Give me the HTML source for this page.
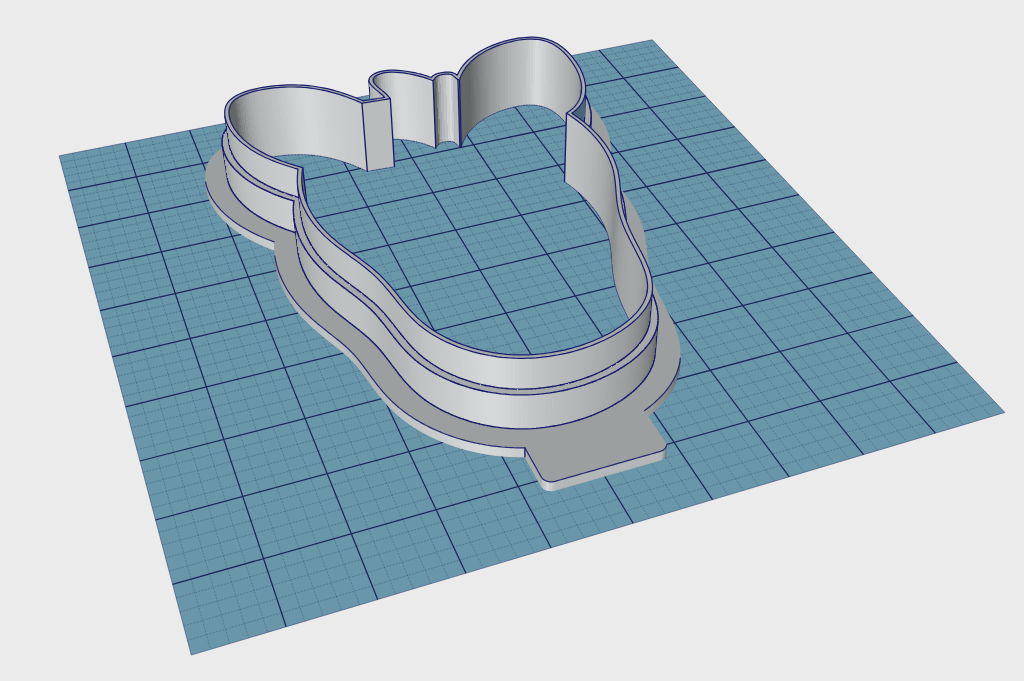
<!DOCTYPE html>
<html><head><meta charset="utf-8"><title>3D view</title>
<style>
html,body{margin:0;padding:0;background:#ebebeb;overflow:hidden;font-family:"Liberation Sans",sans-serif;}
svg{display:block;position:absolute;left:0;top:0}
</style></head><body>
<svg width="1024" height="681" viewBox="0 0 1024 681">
<rect width="1024" height="681" fill="#ebebeb"/>
<polygon points="59.1,155.8 652.3,39.8 1004.9,412.5 191.3,655.1" fill="#6996a8"/>
<path d="M72.4,153.2L210.6,649.4M60.9,162.6L657.3,45.1M85.7,150.6L229.7,643.6M62.7,169.4L662.4,50.5M98.9,148.0L248.7,638.0M64.6,176.4L667.6,56.0M112.1,145.4L267.5,632.4M66.4,183.4L672.8,61.5M138.1,140.3L304.8,621.3M70.2,197.8L683.5,72.7M151.1,137.8L323.2,615.8M72.2,205.2L688.9,78.5M164.0,135.3L341.5,610.3M74.1,212.6L694.3,84.2M176.8,132.8L359.7,604.9M76.1,220.1L699.9,90.1M202.2,127.8L395.6,594.2M80.2,235.5L711.2,102.0M214.8,125.3L413.4,588.9M82.3,243.4L716.9,108.1M227.4,122.9L431.0,583.6M84.4,251.4L722.8,114.3M239.9,120.4L448.6,578.4M86.6,259.5L728.7,120.5M264.7,115.6L483.2,568.1M90.9,276.0L740.7,133.2M277.0,113.2L500.4,562.9M93.2,284.5L746.8,139.7M289.3,110.8L517.4,557.9M95.4,293.0L753.0,146.2M301.5,108.4L534.3,552.8M97.7,301.7L759.3,152.9M325.7,103.7L567.7,542.9M102.5,319.5L772.1,166.4M337.7,101.3L584.3,537.9M104.9,328.6L778.6,173.4M349.7,99.0L600.7,533.0M107.3,337.9L785.3,180.4M361.6,96.6L617.0,528.2M109.8,347.3L792.0,187.4M385.3,92.0L649.3,518.5M114.9,366.5L805.7,201.9M397.0,89.7L665.3,513.8M117.5,376.3L812.7,209.3M408.7,87.4L681.2,509.0M120.1,386.3L819.8,216.8M420.3,85.2L697.0,504.3M122.8,396.5L827.0,224.4M443.4,80.7L728.2,495.0M128.3,417.3L841.6,239.9M454.8,78.4L743.6,490.4M131.2,427.9L849.1,247.8M466.3,76.2L759.0,485.8M134.0,438.8L856.7,255.9M477.6,74.0L774.2,481.3M136.9,449.8L864.4,264.0M500.2,69.6L804.4,472.3M142.9,472.4L880.2,280.7M511.4,67.4L819.3,467.8M146.0,484.0L888.3,289.2M522.5,65.2L834.2,463.4M149.1,495.8L896.4,297.8M533.6,63.0L848.9,459.0M152.3,507.8L904.7,306.6M555.6,58.7L878.1,450.3M158.8,532.4L921.7,324.6M566.6,56.6L892.6,446.0M162.2,545.1L930.4,333.7M577.5,54.4L906.9,441.7M165.6,558.0L939.2,343.0M588.3,52.3L921.2,437.5M169.1,571.1L948.1,352.5M609.8,48.1L949.5,429.0M176.2,598.0L966.5,371.9M620.5,46.0L963.5,424.9M179.9,611.9L975.8,381.8M631.2,43.9L977.4,420.7M183.6,626.0L985.4,391.9M641.8,41.9L991.2,416.6M187.4,640.4L995.1,402.1" stroke="#1b2560" stroke-opacity="0.36" stroke-width="0.7" stroke-dasharray="2 1.3" fill="none"/>
<path d="M125.1,142.9L286.2,626.8M68.3,190.6L678.1,67.1M189.5,130.3L377.7,599.5M78.2,227.8L705.5,96.0M252.3,118.0L465.9,573.2M88.7,267.7L734.6,126.8M313.6,106.0L551.1,547.8M100.1,310.6L765.7,159.6M373.5,94.3L633.2,523.3M112.3,356.8L798.8,194.6M431.9,82.9L712.6,499.7M125.6,406.8L834.2,232.1M488.9,71.8L789.3,476.8M139.9,461.0L872.3,272.3M544.6,60.9L863.6,454.6M155.5,520.0L913.1,315.5M599.1,50.2L935.4,433.2M172.6,584.4L957.2,362.1" stroke="#151b55" stroke-opacity="0.9" stroke-width="1.25" fill="none"/>
<polygon points="59.1,155.8 652.3,39.8 1004.9,412.5 191.3,655.1" fill="none" stroke="#1b2560" stroke-opacity="0.55" stroke-width="0.8"/>
<style>.l{fill:none;stroke:#181d6a;stroke-linecap:round}</style>
<g stroke-width="0.8">
<path fill="#636667" stroke="#636667" d="M610.5 160.4L610.5 160.7L610.9 152.4L610.9 152.0ZM610.5 160.7L610.3 162.7L610.8 154.3L610.9 152.4ZM610.3 162.7L610.3 163.1L610.7 154.7L610.8 154.3ZM610.3 163.1L610.0 165.0L610.4 156.7L610.7 154.7ZM610.0 165.0L609.9 165.4L610.3 157.1L610.4 156.7ZM609.9 165.4L609.5 167.4L609.9 159.0L610.3 157.1ZM609.5 167.4L609.4 167.8L609.8 159.5L609.9 159.0Z"/>
<path fill="#656869" stroke="#656869" d="M609.4 167.8L608.8 169.8L609.3 161.4L609.8 159.5Z"/>
<path fill="#676a6b" stroke="#676a6b" d="M608.8 169.8L608.7 170.3L609.1 161.9L609.3 161.4Z"/>
<path fill="#696c6d" stroke="#696c6d" d="M608.7 170.3L608.0 172.2L608.4 163.8L609.1 161.9Z"/>
<path fill="#959899" stroke="#959899" d="M207.1 190.9L207.0 190.5L205.6 182.0L205.7 182.4Z"/>
<path fill="#6c6f70" stroke="#6c6f70" d="M608.0 172.2L607.8 172.7L608.2 164.3L608.4 163.8Z"/>
<path fill="#979a9b" stroke="#979a9b" d="M207.5 193.0L207.1 190.9L205.7 182.4L206.1 184.5Z"/>
<path fill="#6e7172" stroke="#6e7172" d="M607.8 172.7L606.9 174.6L607.4 166.2L608.2 164.3Z"/>
<path fill="#999c9d" stroke="#999c9d" d="M207.6 193.4L207.5 193.0L206.1 184.5L206.2 184.9Z"/>
<path fill="#717475" stroke="#717475" d="M606.9 174.6L606.7 175.2L607.1 166.8L607.4 166.2Z"/>
<path fill="#9b9e9f" stroke="#9b9e9f" d="M208.2 195.4L207.6 193.4L206.2 184.9L206.8 186.9Z"/>
<path fill="#737677" stroke="#737677" d="M606.7 175.2L605.6 177.1L606.1 168.7L607.1 166.8Z"/>
<path fill="#9c9fa0" stroke="#9c9fa0" d="M208.3 195.8L208.2 195.4L206.8 186.9L206.9 187.3Z"/>
<path fill="#76797a" stroke="#76797a" d="M605.6 177.1L605.3 177.6L605.8 169.2L606.1 168.7Z"/>
<path fill="#9ea1a2" stroke="#9ea1a2" d="M209.0 197.8L208.3 195.8L206.9 187.3L207.6 189.4Z"/>
<path fill="#797c7d" stroke="#797c7d" d="M605.3 177.6L604.1 179.5L604.6 171.1L605.8 169.2Z"/>
<path fill="#a0a3a4" stroke="#a0a3a4" d="M209.1 198.2L209.0 197.8L207.6 189.4L207.7 189.7Z"/>
<path fill="#7b7e7f" stroke="#7b7e7f" d="M604.1 179.5L603.8 180.1L604.2 171.7L604.6 171.1Z"/>
<path fill="#a1a4a5" stroke="#a1a4a5" d="M209.9 200.2L209.1 198.2L207.7 189.7L208.5 191.7Z"/>
<path fill="#7e8182" stroke="#7e8182" d="M603.8 180.1L603.1 181.0L603.6 172.5L604.2 171.7Z"/>
<path fill="#a3a6a7" stroke="#a3a6a7" d="M210.1 200.6L209.9 200.2L208.5 191.7L208.7 192.1Z"/>
<path fill="#a5a8a9" stroke="#a5a8a9" d="M211.0 202.6L210.1 200.6L208.7 192.1L209.6 194.1Z"/>
<path fill="#a6a9aa" stroke="#a6a9aa" d="M211.2 202.9L211.0 202.6L209.6 194.1L209.8 194.4Z"/>
<path fill="#a7aaab" stroke="#a7aaab" d="M212.2 204.9L211.2 202.9L209.8 194.4L210.8 196.4Z"/>
<path fill="#a9acad" stroke="#a9acad" d="M212.4 205.3L212.2 204.9L210.8 196.4L211.0 196.7Z"/>
<path fill="#aaadae" stroke="#aaadae" d="M213.5 207.2L212.4 205.3L211.0 196.7L212.1 198.7Z"/>
<path fill="#abaeaf" stroke="#abaeaf" d="M213.7 207.5L213.5 207.2L212.1 198.7L212.3 199.0Z"/>
<path fill="#acafb0" stroke="#acafb0" d="M215.0 209.5L213.7 207.5L212.3 199.0L213.6 201.0Z"/>
<path fill="#aeb1b2" stroke="#aeb1b2" d="M215.2 209.8L215.0 209.5L213.6 201.0L213.8 201.3Z"/>
<path fill="#afb2b3" stroke="#afb2b3" d="M216.5 211.7L215.2 209.8L213.8 201.3L215.1 203.2Z"/>
<path fill="#b0b3b4" stroke="#b0b3b4" d="M216.8 212.0L216.5 211.7L215.1 203.2L215.4 203.5Z"/>
<path fill="#b1b4b5" stroke="#b1b4b5" d="M218.2 213.9L216.8 212.0L215.4 203.5L216.8 205.3Z"/>
<path fill="#b2b5b6" stroke="#b2b5b6" d="M218.4 214.2L218.2 213.9L216.8 205.3L217.0 205.6Z"/>
<path fill="#b3b6b7" stroke="#b3b6b7" d="M220.0 216.0L218.4 214.2L217.0 205.6L218.6 207.5Z"/>
<path fill="#b4b7b8" stroke="#b4b7b8" d="M220.2 216.3L220.0 216.0L218.6 207.5L218.8 207.7Z"/>
<path fill="#b5b8b9" stroke="#b5b8b9" d="M221.8 218.1L220.2 216.3L218.8 207.7L220.5 209.6ZM222.1 218.4L221.8 218.1L220.5 209.6L220.7 209.8Z"/>
<path fill="#b6b9ba" stroke="#b6b9ba" d="M223.8 220.2L222.1 218.4L220.7 209.8L222.4 211.6Z"/>
<path fill="#b7babb" stroke="#b7babb" d="M224.1 220.4L223.8 220.2L222.4 211.6L222.7 211.9Z"/>
<path fill="#b8bbbc" stroke="#b8bbbc" d="M225.9 222.2L224.1 220.4L222.7 211.9L224.5 213.6Z"/>
<path fill="#b9bcbd" stroke="#b9bcbd" d="M226.1 222.4L225.9 222.2L224.5 213.6L224.8 213.9ZM228.0 224.1L226.1 222.4L224.8 213.9L226.6 215.6Z"/>
<path fill="#babdbe" stroke="#babdbe" d="M228.3 224.4L228.0 224.1L226.6 215.6L226.9 215.8Z"/>
<path fill="#bbbebf" stroke="#bbbebf" d="M230.2 226.1L228.3 224.4L226.9 215.8L228.9 217.5Z"/>
<path fill="#bcbfc0" stroke="#bcbfc0" d="M230.5 226.3L230.2 226.1L228.9 217.5L229.2 217.7ZM232.5 227.9L230.5 226.3L229.2 217.7L231.2 219.4Z"/>
<path fill="#bdc0c1" stroke="#bdc0c1" d="M232.8 228.2L232.5 227.9L231.2 219.4L231.5 219.6ZM234.9 229.8L232.8 228.2L231.5 219.6L233.6 221.2Z"/>
<path fill="#bec1c2" stroke="#bec1c2" d="M235.3 230.0L234.9 229.8L233.6 221.2L233.9 221.4Z"/>
<path fill="#bfc2c3" stroke="#bfc2c3" d="M237.4 231.6L235.3 230.0L233.9 221.4L236.1 223.0ZM237.7 231.8L237.4 231.6L236.1 223.0L236.4 223.2Z"/>
<path fill="#c0c3c4" stroke="#c0c3c4" d="M240.0 233.3L237.7 231.8L236.4 223.2L238.6 224.7ZM240.3 233.5L240.0 233.3L238.6 224.7L239.0 224.9Z"/>
<path fill="#c1c4c5" stroke="#c1c4c5" d="M242.6 235.0L240.3 233.5L239.0 224.9L241.3 226.4ZM242.9 235.2L242.6 235.0L241.3 226.4L241.6 226.6Z"/>
<path fill="#c2c5c6" stroke="#c2c5c6" d="M245.3 236.6L242.9 235.2L241.6 226.6L244.0 228.0ZM245.7 236.9L245.3 236.6L244.0 228.0L244.4 228.3ZM248.1 238.3L245.7 236.9L244.4 228.3L246.8 229.6Z"/>
<path fill="#c3c6c7" stroke="#c3c6c7" d="M248.4 238.4L248.1 238.3L246.8 229.6L247.2 229.8ZM250.9 239.8L248.4 238.4L247.2 229.8L249.7 231.2Z"/>
<path fill="#c4c7c8" stroke="#c4c7c8" d="M251.3 240.0L250.9 239.8L249.7 231.2L250.0 231.4ZM253.9 241.3L251.3 240.0L250.0 231.4L252.6 232.7ZM254.2 241.5L253.9 241.3L252.6 232.7L253.0 232.9Z"/>
<path fill="#c5c8c9" stroke="#c5c8c9" d="M256.9 242.8L254.2 241.5L253.0 232.9L255.6 234.2ZM257.2 243.0L256.9 242.8L255.6 234.2L256.0 234.4ZM259.9 244.2L257.2 243.0L256.0 234.4L258.7 235.6Z"/>
<path fill="#c6c9ca" stroke="#c6c9ca" d="M260.3 244.4L259.9 244.2L258.7 235.6L259.0 235.8ZM263.0 245.6L260.3 244.4L259.0 235.8L261.8 237.0ZM263.4 245.8L263.0 245.6L261.8 237.0L262.2 237.2Z"/>
<path fill="#c7cacb" stroke="#c7cacb" d="M266.2 247.0L263.4 245.8L262.2 237.2L265.0 238.3ZM266.6 247.1L266.2 247.0L265.0 238.3L265.4 238.5ZM269.4 248.3L266.6 247.1L265.4 238.5L268.3 239.7ZM269.8 248.4L269.4 248.3L268.3 239.7L268.6 239.8Z"/>
<path fill="#c8cbcc" stroke="#c8cbcc" d="M272.7 249.6L269.8 248.4L268.6 239.8L271.6 240.9ZM273.1 249.7L272.7 249.6L271.6 240.9L271.9 241.1ZM275.3 250.5L273.1 249.7L271.9 241.1L274.1 241.9Z"/>
<path fill="#929596" stroke="#929596" d="M276.0 265.0L276.0 264.7L274.8 256.0L274.9 256.3Z"/>
<path fill="#939697" stroke="#939697" d="M276.4 267.2L276.0 265.0L274.9 256.3L275.2 258.5Z"/>
<path fill="#949798" stroke="#949798" d="M276.4 267.5L276.4 267.2L275.2 258.5L275.3 258.8Z"/>
<path fill="#959899" stroke="#959899" d="M276.9 269.7L276.4 267.5L275.3 258.8L275.7 261.0Z"/>
<path fill="#979a9b" stroke="#979a9b" d="M276.9 270.0L276.9 269.7L275.7 261.0L275.8 261.3Z"/>
<path fill="#989b9c" stroke="#989b9c" d="M277.4 272.2L276.9 270.0L275.8 261.3L276.3 263.5Z"/>
<path fill="#999c9d" stroke="#999c9d" d="M277.5 272.5L277.4 272.2L276.3 263.5L276.3 263.8Z"/>
<path fill="#9a9d9e" stroke="#9a9d9e" d="M278.1 274.7L277.5 272.5L276.3 263.8L276.9 266.0Z"/>
<path fill="#9b9e9f" stroke="#9b9e9f" d="M278.1 274.9L278.1 274.7L276.9 266.0L277.0 266.2Z"/>
<path fill="#9c9fa0" stroke="#9c9fa0" d="M278.8 277.2L278.1 274.9L277.0 266.2L277.6 268.5Z"/>
<path fill="#9da0a1" stroke="#9da0a1" d="M278.8 277.4L278.8 277.2L277.6 268.5L277.7 268.7Z"/>
<path fill="#9ea1a2" stroke="#9ea1a2" d="M279.6 279.6L278.8 277.4L277.7 268.7L278.4 270.9Z"/>
<path fill="#9fa2a3" stroke="#9fa2a3" d="M279.6 279.9L279.6 279.6L278.4 270.9L278.5 271.2Z"/>
<path fill="#a0a3a4" stroke="#a0a3a4" d="M280.4 282.1L279.6 279.9L278.5 271.2L279.3 273.4ZM280.5 282.4L280.4 282.1L279.3 273.4L279.4 273.6Z"/>
<path fill="#a1a4a5" stroke="#a1a4a5" d="M281.4 284.6L280.5 282.4L279.4 273.6L280.2 275.8Z"/>
<path fill="#a2a5a6" stroke="#a2a5a6" d="M281.5 284.8L281.4 284.6L280.2 275.8L280.3 276.1Z"/>
<path fill="#a3a6a7" stroke="#a3a6a7" d="M282.4 287.0L281.5 284.8L280.3 276.1L281.3 278.3Z"/>
<path fill="#a4a7a8" stroke="#a4a7a8" d="M282.5 287.3L282.4 287.0L281.3 278.3L281.4 278.5Z"/>
<path fill="#a5a8a9" stroke="#a5a8a9" d="M283.5 289.5L282.5 287.3L281.4 278.5L282.4 280.7Z"/>
<path fill="#a6a9aa" stroke="#a6a9aa" d="M283.6 289.7L283.5 289.5L282.4 280.7L282.5 281.0Z"/>
<path fill="#a7aaab" stroke="#a7aaab" d="M284.7 291.9L283.6 289.7L282.5 281.0L283.6 283.1ZM284.8 292.1L284.7 291.9L283.6 283.1L283.7 283.4Z"/>
<path fill="#a8abac" stroke="#a8abac" d="M286.0 294.3L284.8 292.1L283.7 283.4L284.8 285.6Z"/>
<path fill="#a9acad" stroke="#a9acad" d="M286.1 294.6L286.0 294.3L284.8 285.6L285.0 285.8Z"/>
<path fill="#aaadae" stroke="#aaadae" d="M287.3 296.7L286.1 294.6L285.0 285.8L286.2 288.0Z"/>
<path fill="#abaeaf" stroke="#abaeaf" d="M287.5 297.0L287.3 296.7L286.2 288.0L286.3 288.2ZM288.7 299.1L287.5 297.0L286.3 288.2L287.6 290.3Z"/>
<path fill="#acafb0" stroke="#acafb0" d="M288.9 299.3L288.7 299.1L287.6 290.3L287.8 290.6Z"/>
<path fill="#adb0b1" stroke="#adb0b1" d="M290.2 301.5L288.9 299.3L287.8 290.6L289.1 292.7Z"/>
<path fill="#aeb1b2" stroke="#aeb1b2" d="M290.4 301.7L290.2 301.5L289.1 292.7L289.3 293.0ZM291.8 303.9L290.4 301.7L289.3 293.0L290.7 295.1Z"/>
<path fill="#afb2b3" stroke="#afb2b3" d="M292.0 304.1L291.8 303.9L290.7 295.1L290.9 295.3Z"/>
<path fill="#b0b3b4" stroke="#b0b3b4" d="M293.5 306.2L292.0 304.1L290.9 295.3L292.4 297.4ZM293.7 306.4L293.5 306.2L292.4 297.4L292.5 297.7Z"/>
<path fill="#b1b4b5" stroke="#b1b4b5" d="M295.2 308.5L293.7 306.4L292.5 297.7L294.1 299.8Z"/>
<path fill="#b2b5b6" stroke="#b2b5b6" d="M295.4 308.8L295.2 308.5L294.1 299.8L294.3 300.0ZM297.0 310.9L295.4 308.8L294.3 300.0L295.9 302.1Z"/>
<path fill="#b3b6b7" stroke="#b3b6b7" d="M297.2 311.1L297.0 310.9L295.9 302.1L296.1 302.3Z"/>
<path fill="#b4b7b8" stroke="#b4b7b8" d="M298.9 313.2L297.2 311.1L296.1 302.3L297.8 304.4ZM299.1 313.4L298.9 313.2L297.8 304.4L298.0 304.6Z"/>
<path fill="#b5b8b9" stroke="#b5b8b9" d="M300.9 315.5L299.1 313.4L298.0 304.6L299.8 306.7ZM301.1 315.7L300.9 315.5L299.8 306.7L300.0 306.9Z"/>
<path fill="#b6b9ba" stroke="#b6b9ba" d="M302.9 317.7L301.1 315.7L300.0 306.9L301.8 308.9Z"/>
<path fill="#b7babb" stroke="#b7babb" d="M303.1 318.0L302.9 317.7L301.8 308.9L302.0 309.2ZM305.0 320.0L303.1 318.0L302.0 309.2L304.0 311.2Z"/>
<path fill="#b8bbbc" stroke="#b8bbbc" d="M305.3 320.2L305.0 320.0L304.0 311.2L304.2 311.4ZM307.2 322.2L305.3 320.2L304.2 311.4L306.2 313.4Z"/>
<path fill="#b9bcbd" stroke="#b9bcbd" d="M307.5 322.4L307.2 322.2L306.2 313.4L306.4 313.6ZM309.5 324.4L307.5 322.4L306.4 313.6L308.5 315.6Z"/>
<path fill="#babdbe" stroke="#babdbe" d="M309.7 324.6L309.5 324.4L308.5 315.6L308.7 315.8ZM311.8 326.6L309.7 324.6L308.7 315.8L310.8 317.8Z"/>
<path fill="#bbbebf" stroke="#bbbebf" d="M312.1 326.8L311.8 326.6L310.8 317.8L311.0 318.0ZM314.2 328.8L312.1 326.8L311.0 318.0L313.2 319.9ZM314.4 328.9L314.2 328.8L313.2 319.9L313.4 320.1Z"/>
<path fill="#bcbfc0" stroke="#bcbfc0" d="M316.6 330.8L314.4 328.9L313.4 320.1L315.6 322.0ZM316.8 331.0L316.6 330.8L315.6 322.0L315.8 322.1ZM319.0 332.9L316.8 331.0L315.8 322.1L318.0 324.1Z"/>
<path fill="#bdc0c1" stroke="#bdc0c1" d="M319.2 333.0L319.0 332.9L318.0 324.1L318.2 324.2ZM321.5 334.9L319.2 333.0L318.2 324.2L320.5 326.1ZM321.6 335.0L321.5 334.9L320.5 326.1L320.6 326.1ZM323.9 336.9L321.6 335.0L320.6 326.1L322.9 328.0ZM324.0 336.9L323.9 336.9L322.9 328.0L323.0 328.1Z"/>
<path fill="#bec1c2" stroke="#bec1c2" d="M326.3 338.8L324.0 336.9L323.0 328.1L325.3 330.0ZM326.3 338.9L326.3 338.8L325.3 330.0L325.4 330.0ZM328.7 340.7L326.3 338.9L325.4 330.0L327.7 331.9ZM328.7 340.7L328.7 340.7L327.7 331.9L327.7 331.9ZM331.0 342.6L328.7 340.7L327.7 331.9L330.1 333.7ZM333.4 344.4L331.0 342.6L330.1 333.7L332.4 335.6ZM335.6 346.3L333.4 344.4L332.4 335.6L334.7 337.4ZM337.9 348.1L335.6 346.3L334.7 337.4L337.0 339.2Z"/>
<path fill="#bdc0c1" stroke="#bdc0c1" d="M340.1 349.9L337.9 348.1L337.0 339.2L339.2 341.0ZM342.2 351.6L340.1 349.9L339.2 341.0L341.3 342.8ZM344.3 353.4L342.2 351.6L341.3 342.8L343.4 344.5Z"/>
<path fill="#bcbfc0" stroke="#bcbfc0" d="M346.3 355.2L344.3 353.4L343.4 344.5L345.4 346.3Z"/>
<path fill="#bbbebf" stroke="#bbbebf" d="M348.2 356.9L346.3 355.2L345.4 346.3L347.3 348.0Z"/>
<path fill="#babdbe" stroke="#babdbe" d="M350.0 358.6L348.2 356.9L347.3 348.0L349.2 349.8Z"/>
<path fill="#b9bcbd" stroke="#b9bcbd" d="M351.8 360.4L350.0 358.6L349.2 349.8L350.9 351.5Z"/>
<path fill="#b8bbbc" stroke="#b8bbbc" d="M353.5 362.1L351.8 360.4L350.9 351.5L352.6 353.2Z"/>
<path fill="#b7babb" stroke="#b7babb" d="M355.1 363.9L353.5 362.1L352.6 353.2L354.3 355.0Z"/>
<path fill="#b6b9ba" stroke="#b6b9ba" d="M356.7 365.7L355.1 363.9L354.3 355.0L355.9 356.8Z"/>
<path fill="#b5b8b9" stroke="#b5b8b9" d="M358.4 367.6L356.7 365.7L355.9 356.8L357.5 358.7Z"/>
<path fill="#636667" stroke="#636667" d="M679.4 367.1L679.1 369.9L680.0 360.9L680.3 358.2ZM679.1 369.9L679.0 370.6L679.9 361.7L680.0 360.9Z"/>
<path fill="#b4b7b8" stroke="#b4b7b8" d="M360.0 369.6L358.4 367.6L357.5 358.7L359.1 360.7Z"/>
<path fill="#636667" stroke="#636667" d="M679.0 370.6L678.4 373.3L679.4 364.4L679.9 361.7Z"/>
<path fill="#b3b6b7" stroke="#b3b6b7" d="M361.6 371.7L360.0 369.6L359.1 360.7L360.8 362.8Z"/>
<path fill="#636667" stroke="#636667" d="M678.4 373.3L678.3 374.1L679.2 365.2L679.4 364.4Z"/>
<path fill="#b2b5b6" stroke="#b2b5b6" d="M363.2 373.8L361.6 371.7L360.8 362.8L362.4 364.9Z"/>
<path fill="#66696a" stroke="#66696a" d="M678.3 374.1L677.5 376.8L678.5 367.9L679.2 365.2Z"/>
<path fill="#b2b5b6" stroke="#b2b5b6" d="M364.8 376.0L363.2 373.8L362.4 364.9L364.0 367.1Z"/>
<path fill="#696c6d" stroke="#696c6d" d="M677.5 376.8L677.3 377.5L678.2 368.6L678.5 367.9Z"/>
<path fill="#6c6f70" stroke="#6c6f70" d="M677.3 377.5L676.4 380.2L677.3 371.3L678.2 368.6Z"/>
<path fill="#b2b5b6" stroke="#b2b5b6" d="M366.5 378.2L364.8 376.0L364.0 367.1L365.7 369.3Z"/>
<path fill="#6e7172" stroke="#6e7172" d="M676.4 380.2L676.2 380.9L677.1 372.0L677.3 371.3Z"/>
<path fill="#b1b4b5" stroke="#b1b4b5" d="M368.1 380.5L366.5 378.2L365.7 369.3L367.4 371.6Z"/>
<path fill="#717475" stroke="#717475" d="M676.2 380.9L675.1 383.6L676.0 374.7L677.1 372.0Z"/>
<path fill="#737677" stroke="#737677" d="M675.1 383.6L674.8 384.3L675.7 375.3L676.0 374.7Z"/>
<path fill="#b1b4b5" stroke="#b1b4b5" d="M369.8 382.9L368.1 380.5L367.4 371.6L369.1 373.9ZM369.9 382.9L369.8 382.9L369.1 373.9L369.1 374.0Z"/>
<path fill="#757879" stroke="#757879" d="M674.8 384.3L673.5 386.9L674.4 378.0L675.7 375.3Z"/>
<path fill="#b1b4b5" stroke="#b1b4b5" d="M371.6 385.3L369.9 382.9L369.1 374.0L370.8 376.3Z"/>
<path fill="#787b7c" stroke="#787b7c" d="M673.5 386.9L673.2 387.5L674.1 378.6L674.4 378.0Z"/>
<path fill="#b2b5b6" stroke="#b2b5b6" d="M371.6 385.3L371.6 385.3L370.8 376.3L370.8 376.4Z"/>
<path fill="#7a7d7e" stroke="#7a7d7e" d="M673.2 387.5L671.7 390.1L672.6 381.2L674.1 378.6Z"/>
<path fill="#b2b5b6" stroke="#b2b5b6" d="M373.4 387.7L371.6 385.3L370.8 376.4L372.6 378.8ZM373.4 387.8L373.4 387.7L372.6 378.8L372.7 378.8Z"/>
<path fill="#7c7f80" stroke="#7c7f80" d="M671.7 390.1L671.4 390.8L672.2 381.8L672.6 381.2Z"/>
<path fill="#b2b5b6" stroke="#b2b5b6" d="M375.2 390.2L373.4 387.8L372.7 378.8L374.5 381.2Z"/>
<path fill="#7e8182" stroke="#7e8182" d="M671.4 390.8L669.7 393.3L670.6 384.4L672.2 381.8Z"/>
<path fill="#b2b5b6" stroke="#b2b5b6" d="M375.3 390.3L375.2 390.2L374.5 381.2L374.6 381.4Z"/>
<path fill="#808384" stroke="#808384" d="M669.7 393.3L669.4 393.9L670.2 385.0L670.6 384.4Z"/>
<path fill="#b3b6b7" stroke="#b3b6b7" d="M377.1 392.7L375.3 390.3L374.6 381.4L376.4 383.8ZM377.3 392.9L377.1 392.7L376.4 383.8L376.5 383.9Z"/>
<path fill="#828586" stroke="#828586" d="M669.4 393.9L667.6 396.5L668.5 387.5L670.2 385.0Z"/>
<path fill="#b3b6b7" stroke="#b3b6b7" d="M379.1 395.3L377.3 392.9L376.5 383.9L378.4 386.3Z"/>
<path fill="#848788" stroke="#848788" d="M667.6 396.5L667.2 397.0L668.0 388.1L668.5 387.5Z"/>
<path fill="#b4b7b8" stroke="#b4b7b8" d="M379.3 395.5L379.1 395.3L378.4 386.3L378.6 386.5Z"/>
<path fill="#858889" stroke="#858889" d="M667.2 397.0L665.2 399.5L666.1 390.6L668.0 388.1Z"/>
<path fill="#b4b7b8" stroke="#b4b7b8" d="M381.2 397.9L379.3 395.5L378.6 386.5L380.5 388.9Z"/>
<path fill="#878a8b" stroke="#878a8b" d="M665.2 399.5L664.8 400.1L665.7 391.1L666.1 390.6Z"/>
<path fill="#b5b8b9" stroke="#b5b8b9" d="M381.4 398.1L381.2 397.9L380.5 388.9L380.7 389.1Z"/>
<path fill="#898c8d" stroke="#898c8d" d="M664.8 400.1L662.7 402.5L663.6 393.6L665.7 391.1Z"/>
<path fill="#b5b8b9" stroke="#b5b8b9" d="M383.4 400.5L381.4 398.1L380.7 389.1L382.7 391.5Z"/>
<path fill="#8a8d8e" stroke="#8a8d8e" d="M662.7 402.5L662.3 403.0L663.1 394.1L663.6 393.6Z"/>
<path fill="#b6b9ba" stroke="#b6b9ba" d="M383.6 400.7L383.4 400.5L382.7 391.5L382.9 391.8ZM385.7 403.1L383.6 400.7L382.9 391.8L385.0 394.2Z"/>
<path fill="#8c8f90" stroke="#8c8f90" d="M662.3 403.0L660.1 405.5L660.9 396.5L663.1 394.1Z"/>
<path fill="#b7babb" stroke="#b7babb" d="M386.0 403.4L385.7 403.1L385.0 394.2L385.3 394.5Z"/>
<path fill="#8d9091" stroke="#8d9091" d="M660.1 405.5L659.6 405.9L660.4 397.0L660.9 396.5Z"/>
<path fill="#b7babb" stroke="#b7babb" d="M388.2 405.8L386.0 403.4L385.3 394.5L387.5 396.8Z"/>
<path fill="#8f9293" stroke="#8f9293" d="M659.6 405.9L657.2 408.3L658.0 399.4L660.4 397.0Z"/>
<path fill="#b8bbbc" stroke="#b8bbbc" d="M388.5 406.1L388.2 405.8L387.5 396.8L387.8 397.1Z"/>
<path fill="#909394" stroke="#909394" d="M657.2 408.3L656.7 408.8L657.6 399.8L658.0 399.4Z"/>
<path fill="#b9bcbd" stroke="#b9bcbd" d="M390.7 408.5L388.5 406.1L387.8 397.1L390.1 399.5Z"/>
<path fill="#929596" stroke="#929596" d="M656.7 408.8L654.2 411.1L655.0 402.2L657.6 399.8Z"/>
<path fill="#b9bcbd" stroke="#b9bcbd" d="M391.1 408.8L390.7 408.5L390.1 399.5L390.4 399.8Z"/>
<path fill="#939697" stroke="#939697" d="M654.2 411.1L653.8 411.6L654.6 402.6L655.0 402.2Z"/>
<path fill="#babdbe" stroke="#babdbe" d="M393.5 411.1L391.1 408.8L390.4 399.8L392.8 402.2Z"/>
<path fill="#949798" stroke="#949798" d="M653.8 411.6L651.1 413.9L651.9 404.9L654.6 402.6Z"/>
<path fill="#bbbebf" stroke="#bbbebf" d="M393.9 411.5L393.5 411.1L392.8 402.2L393.2 402.5Z"/>
<path fill="#96999a" stroke="#96999a" d="M651.1 413.9L650.6 414.3L651.4 405.3L651.9 404.9Z"/>
<path fill="#bbbebf" stroke="#bbbebf" d="M396.4 413.8L393.9 411.5L393.2 402.5L395.7 404.8Z"/>
<path fill="#979a9b" stroke="#979a9b" d="M650.6 414.3L647.9 416.5L648.6 407.5L651.4 405.3Z"/>
<path fill="#bcbfc0" stroke="#bcbfc0" d="M396.8 414.2L396.4 413.8L395.7 404.8L396.2 405.3Z"/>
<path fill="#989b9c" stroke="#989b9c" d="M647.9 416.5L647.4 416.9L648.1 407.9L648.6 407.5Z"/>
<path fill="#bdc0c1" stroke="#bdc0c1" d="M399.4 416.5L396.8 414.2L396.2 405.3L398.8 407.5Z"/>
<path fill="#999c9d" stroke="#999c9d" d="M647.4 416.9L644.5 419.1L645.2 410.1L648.1 407.9Z"/>
<path fill="#bec1c2" stroke="#bec1c2" d="M399.9 416.9L399.4 416.5L398.8 407.5L399.3 407.9Z"/>
<path fill="#9a9d9e" stroke="#9a9d9e" d="M644.5 419.1L644.0 419.5L644.7 410.5L645.2 410.1Z"/>
<path fill="#9b9e9f" stroke="#9b9e9f" d="M644.0 419.5L643.7 419.7L644.5 410.7L644.7 410.5Z"/>
<path fill="#bec1c2" stroke="#bec1c2" d="M402.7 419.1L399.9 416.9L399.3 407.9L402.1 410.1Z"/>
<path fill="#bfc2c3" stroke="#bfc2c3" d="M403.2 419.5L402.7 419.1L402.1 410.1L402.6 410.5Z"/>
<path fill="#c0c3c4" stroke="#c0c3c4" d="M406.0 421.7L403.2 419.5L402.6 410.5L405.4 412.7ZM406.6 422.1L406.0 421.7L405.4 412.7L406.0 413.1Z"/>
<path fill="#c1c4c5" stroke="#c1c4c5" d="M409.5 424.2L406.6 422.1L406.0 413.1L408.9 415.2ZM410.1 424.5L409.5 424.2L408.9 415.2L409.5 415.6Z"/>
<path fill="#c2c5c6" stroke="#c2c5c6" d="M413.1 426.6L410.1 424.5L409.5 415.6L412.6 417.6ZM413.7 427.0L413.1 426.6L412.6 417.6L413.1 418.0Z"/>
<path fill="#c3c6c7" stroke="#c3c6c7" d="M416.9 428.9L413.7 427.0L413.1 418.0L416.3 419.9ZM417.4 429.3L416.9 428.9L416.3 419.9L416.9 420.3Z"/>
<path fill="#c4c7c8" stroke="#c4c7c8" d="M420.7 431.2L417.4 429.3L416.9 420.3L420.2 422.2ZM421.3 431.6L420.7 431.2L420.2 422.2L420.8 422.6Z"/>
<path fill="#c5c8c9" stroke="#c5c8c9" d="M424.7 433.4L421.3 431.6L420.8 422.6L424.2 424.4ZM425.3 433.8L424.7 433.4L424.2 424.4L424.8 424.8Z"/>
<path fill="#c6c9ca" stroke="#c6c9ca" d="M428.7 435.6L425.3 433.8L424.8 424.8L428.3 426.5ZM429.4 435.9L428.7 435.6L428.3 426.5L428.9 426.9Z"/>
<path fill="#c7cacb" stroke="#c7cacb" d="M432.9 437.6L429.4 435.9L428.9 426.9L432.5 428.6ZM433.6 437.9L432.9 437.6L432.5 428.6L433.1 428.9Z"/>
<path fill="#c8cbcc" stroke="#c8cbcc" d="M437.2 439.6L433.6 437.9L433.1 428.9L436.8 430.5Z"/>
<path fill="#c9cccd" stroke="#c9cccd" d="M437.9 439.8L437.2 439.6L436.8 430.5L437.5 430.8ZM441.6 441.4L437.9 439.8L437.5 430.8L441.2 432.4Z"/>
<path fill="#cacdce" stroke="#cacdce" d="M442.3 441.7L441.6 441.4L441.2 432.4L441.9 432.7Z"/>
<path fill="#cbcecf" stroke="#cbcecf" d="M446.1 443.2L442.3 441.7L441.9 432.7L445.7 434.2ZM446.8 443.5L446.1 443.2L445.7 434.2L446.4 434.5Z"/>
<path fill="#cccfd0" stroke="#cccfd0" d="M450.7 444.9L446.8 443.5L446.4 434.5L450.4 435.9Z"/>
<path fill="#cdd0d1" stroke="#cdd0d1" d="M451.4 445.1L450.7 444.9L450.4 435.9L451.1 436.1Z"/>
<path fill="#ced1d2" stroke="#ced1d2" d="M455.4 446.5L451.4 445.1L451.1 436.1L455.1 437.5Z"/>
<path fill="#cfd2d3" stroke="#cfd2d3" d="M456.1 446.7L455.4 446.5L455.1 437.5L455.8 437.7ZM460.1 448.0L456.1 446.7L455.8 437.7L459.9 439.0Z"/>
<path fill="#696c6d" stroke="#696c6d" d="M665.5 454.7L664.9 456.5L665.8 447.5L666.4 445.7Z"/>
<path fill="#d0d3d4" stroke="#d0d3d4" d="M460.9 448.2L460.1 448.0L459.9 439.0L460.6 439.2Z"/>
<path fill="#d1d4d5" stroke="#d1d4d5" d="M465.0 449.4L460.9 448.2L460.6 439.2L464.7 440.3Z"/>
<path fill="#d2d5d6" stroke="#d2d5d6" d="M465.8 449.6L465.0 449.4L464.7 440.3L465.5 440.6Z"/>
<path fill="#858889" stroke="#858889" d="M664.9 456.5L663.7 458.1L664.6 449.1L665.8 447.5Z"/>
<path fill="#d3d6d7" stroke="#d3d6d7" d="M469.9 450.7L465.8 449.6L465.5 440.6L469.7 441.6ZM470.8 450.8L469.9 450.7L469.7 441.6L470.5 441.8Z"/>
<path fill="#9b9e9f" stroke="#9b9e9f" d="M663.7 458.1L662.0 459.4L662.8 450.4L664.6 449.1Z"/>
<path fill="#d4d7d8" stroke="#d4d7d8" d="M475.0 451.8L470.8 450.8L470.5 441.8L474.8 442.8ZM475.8 452.0L475.0 451.8L474.8 442.8L475.6 443.0Z"/>
<path fill="#adb0b1" stroke="#adb0b1" d="M662.0 459.4L659.7 460.3L660.6 451.3L662.8 450.4Z"/>
<path fill="#d5d8d9" stroke="#d5d8d9" d="M480.1 452.9L475.8 452.0L475.6 443.0L479.9 443.9ZM480.9 453.1L480.1 452.9L479.9 443.9L480.7 444.0ZM485.2 453.8L480.9 453.1L480.7 444.0L485.1 444.8Z"/>
<path fill="#b4b7b8" stroke="#b4b7b8" d="M659.7 460.3L655.0 461.7L655.9 452.6L660.6 451.3Z"/>
<path fill="#d5d8d9" stroke="#d5d8d9" d="M486.1 454.0L485.2 453.8L485.1 444.8L486.0 445.0ZM490.4 454.7L486.1 454.0L486.0 445.0L490.3 445.6Z"/>
<path fill="#d4d7d8" stroke="#d4d7d8" d="M491.4 454.8L490.4 454.7L490.3 445.6L491.2 445.8ZM495.7 455.4L491.4 454.8L491.2 445.8L495.7 446.3Z"/>
<path fill="#b4b7b8" stroke="#b4b7b8" d="M655.0 461.7L650.4 463.0L651.2 454.0L655.9 452.6Z"/>
<path fill="#d3d6d7" stroke="#d3d6d7" d="M496.7 455.5L495.7 455.4L495.7 446.3L496.6 446.4Z"/>
<path fill="#d2d5d6" stroke="#d2d5d6" d="M501.1 455.9L496.7 455.5L496.6 446.4L501.0 446.9ZM502.0 456.0L501.1 455.9L501.0 446.9L502.0 447.0Z"/>
<path fill="#d0d3d4" stroke="#d0d3d4" d="M506.5 456.4L502.0 456.0L502.0 447.0L506.5 447.3Z"/>
<path fill="#cfd2d3" stroke="#cfd2d3" d="M507.4 456.4L506.5 456.4L506.5 447.3L507.4 447.4Z"/>
<path fill="#ced1d2" stroke="#ced1d2" d="M511.9 456.7L507.4 456.4L507.4 447.4L511.9 447.6Z"/>
<path fill="#cdd0d1" stroke="#cdd0d1" d="M512.9 456.7L511.9 456.7L511.9 447.6L512.9 447.7Z"/>
<path fill="#cbcecf" stroke="#cbcecf" d="M517.4 456.8L512.9 456.7L512.9 447.7L517.4 447.8Z"/>
<path fill="#c6c9ca" stroke="#c6c9ca" d="M524.9 456.8L523.8 456.9L523.8 447.8L524.9 447.8Z"/>
<path fill="#c8cbcc" stroke="#c8cbcc" d="M523.8 456.9L522.8 456.9L522.9 447.8L523.8 447.8Z"/>
<path fill="#c9cccd" stroke="#c9cccd" d="M522.8 456.9L518.3 456.9L518.4 447.8L522.9 447.8Z"/>
<path fill="#cacdce" stroke="#cacdce" d="M518.3 456.9L517.4 456.8L517.4 447.8L518.4 447.8Z"/>
<path fill="#b4b7b8" stroke="#b4b7b8" d="M650.4 463.0L645.7 464.3L646.5 455.3L651.2 454.0Z"/>
<path fill="#abaeaf" stroke="#abaeaf" d="M526.7 460.2L524.9 456.8L524.9 447.8L526.8 451.2Z"/>
<path fill="#b4b7b8" stroke="#b4b7b8" d="M645.7 464.3L641.0 465.7L641.7 456.7L646.5 455.3ZM641.0 465.7L636.3 467.0L637.0 458.0L641.7 456.7Z"/>
<path fill="#abaeaf" stroke="#abaeaf" d="M528.6 463.6L526.7 460.2L526.8 451.2L528.7 454.6Z"/>
<path fill="#b4b7b8" stroke="#b4b7b8" d="M636.3 467.0L631.5 468.4L632.2 459.4L637.0 458.0ZM631.5 468.4L626.8 469.8L627.5 460.7L632.2 459.4Z"/>
<path fill="#abaeaf" stroke="#abaeaf" d="M530.5 467.0L528.6 463.6L528.7 454.6L530.6 458.0Z"/>
<path fill="#b4b7b8" stroke="#b4b7b8" d="M626.8 469.8L622.1 471.1L622.7 462.1L627.5 460.7ZM622.1 471.1L617.3 472.5L617.9 463.4L622.7 462.1Z"/>
<path fill="#abaeaf" stroke="#abaeaf" d="M532.4 470.4L530.5 467.0L530.6 458.0L532.5 461.4Z"/>
<path fill="#b4b7b8" stroke="#b4b7b8" d="M617.3 472.5L612.5 473.8L613.1 464.8L617.9 463.4ZM612.5 473.8L607.8 475.2L608.4 466.2L613.1 464.8Z"/>
<path fill="#abaeaf" stroke="#abaeaf" d="M534.3 473.9L532.4 470.4L532.5 461.4L534.5 464.9Z"/>
<path fill="#b4b7b8" stroke="#b4b7b8" d="M607.8 475.2L603.0 476.6L603.5 467.5L608.4 466.2ZM603.0 476.6L598.2 477.9L598.7 468.9L603.5 467.5Z"/>
<path fill="#abaeaf" stroke="#abaeaf" d="M536.2 477.4L534.3 473.9L534.5 464.9L536.4 468.3Z"/>
<path fill="#b4b7b8" stroke="#b4b7b8" d="M598.2 477.9L593.4 479.3L593.9 470.3L598.7 468.9ZM593.4 479.3L588.6 480.7L589.1 471.6L593.9 470.3Z"/>
<path fill="#abaeaf" stroke="#abaeaf" d="M538.2 480.8L536.2 477.4L536.4 468.3L538.3 471.8Z"/>
<path fill="#b4b7b8" stroke="#b4b7b8" d="M588.6 480.7L583.8 482.1L584.2 473.0L589.1 471.6ZM583.8 482.1L578.9 483.5L579.4 474.4L584.2 473.0Z"/>
<path fill="#abaeaf" stroke="#abaeaf" d="M539.6 483.5L538.2 480.8L538.3 471.8L539.8 474.4Z"/>
<path fill="#b4b7b8" stroke="#b4b7b8" d="M578.9 483.5L574.1 484.8L574.5 475.8L579.4 474.4ZM574.1 484.8L569.3 486.2L569.6 477.2L574.5 475.8Z"/>
<path fill="#abaeaf" stroke="#abaeaf" d="M541.1 486.1L539.6 483.5L539.8 474.4L541.3 477.0Z"/>
<path fill="#b4b7b8" stroke="#b4b7b8" d="M569.3 486.2L564.4 487.6L564.7 478.6L569.6 477.2ZM542.4 487.8L541.1 486.1L541.3 477.0L542.6 478.8ZM564.4 487.6L559.5 489.0L559.8 480.0L564.7 478.6Z"/>
<path fill="#c0c3c4" stroke="#c0c3c4" d="M544.3 489.3L542.4 487.8L542.6 478.8L544.5 480.2Z"/>
<path fill="#b4b7b8" stroke="#b4b7b8" d="M559.5 489.0L554.7 490.4L554.9 481.4L559.8 480.0Z"/>
<path fill="#cacdce" stroke="#cacdce" d="M546.7 490.3L544.3 489.3L544.5 480.2L546.9 481.2Z"/>
<path fill="#bbbebf" stroke="#bbbebf" d="M554.7 490.4L552.0 490.9L552.3 481.8L554.9 481.4Z"/>
<path fill="#d5d8d9" stroke="#d5d8d9" d="M549.3 490.8L546.7 490.3L546.9 481.2L549.5 481.8Z"/>
<path fill="#c9cccd" stroke="#c9cccd" d="M552.0 490.9L549.3 490.8L549.5 481.8L552.3 481.8Z"/>
</g>
<path d="M274.1 241.9L271.9 241.1L271.6 240.9L268.6 239.8L268.3 239.7L265.4 238.5L265.0 238.3L262.2 237.2L261.8 237.0L259.0 235.8L258.7 235.6L256.0 234.4L255.6 234.2L253.0 232.9L252.6 232.7L250.0 231.4L249.7 231.2L247.2 229.8L246.8 229.6L244.4 228.3L244.0 228.0L241.6 226.6L241.3 226.4L239.0 224.9L238.6 224.7L236.4 223.2L236.1 223.0L233.9 221.4L233.6 221.2L231.5 219.6L231.2 219.4L229.2 217.7L228.9 217.5L226.9 215.8L226.6 215.6L224.8 213.9L224.5 213.6L222.7 211.9L222.4 211.6L220.7 209.8L220.5 209.6L218.8 207.7L218.6 207.5L217.0 205.6L216.8 205.3L215.4 203.5L215.1 203.2L213.8 201.3L213.6 201.0L212.3 199.0L212.1 198.7L211.0 196.7L210.8 196.4L209.8 194.4L209.6 194.1L208.7 192.1L208.5 191.7L207.7 189.7L207.6 189.4L206.9 187.3L206.8 186.9L206.2 184.9L206.1 184.5L205.7 182.4L205.6 182.0L205.3 179.9L205.2 179.5L205.1 177.4L205.1 176.9L205.1 174.8L205.1 174.3L205.3 172.2L205.3 171.6L205.7 169.5L205.9 168.8L206.4 166.7L206.7 165.9L207.5 163.8L208.0 162.9L209.1 160.9L209.7 159.9L211.1 157.9L212.0 156.8L213.7 154.8L214.8 153.7L216.8 151.9L218.0 150.9L220.3 149.2L221.6 148.3L224.1 146.7L225.4 145.9L228.1 144.4L229.5 143.7L232.3 142.3L233.6 141.7L236.7 140.5L238.0 140.0L241.1 138.8L242.3 138.4L245.6 137.3L246.8 136.9L250.2 136.0L251.3 135.7L254.7 134.8L255.8 134.5L259.3 133.7L260.3 133.5L264.0 132.8L264.9 132.6L268.6 132.0L269.5 131.9L273.2 131.3L274.1 131.2L277.8 130.7L278.7 130.6L282.4 130.3L283.2 130.2L287.0 129.9L287.8 129.8L291.6 129.6L292.4 129.6L296.1 129.4L296.9 129.4L300.6 129.3L301.4 129.3L305.1 129.4L305.9 129.4L309.5 129.5L310.3 129.5L313.8 129.7L314.6 129.7L318.1 130.0L318.9 130.1L322.3 130.4L323.0 130.5L326.4 130.8L327.1 130.9L330.4 131.4L331.1 131.5L334.3 132.0L334.9 132.1L338.1 132.7L338.7 132.8L341.9 133.4L342.4 133.6L345.5 134.3L346.1 134.4L347.2 134.7L347.3 134.6L348.6 132.4L349.2 131.5L350.0 130.5L351.9 128.5L352.8 127.7L353.8 126.9L356.2 125.1L357.3 124.4L358.4 123.7L361.3 122.1L362.5 121.5L363.8 121.0L367.1 119.6L368.4 119.1L369.8 118.7L373.4 117.6L374.9 117.2L376.3 116.9L380.1 116.1L382.9 115.7L386.7 115.2L389.1 115.0L393.0 114.7L395.1 114.6L398.9 114.6L400.7 114.7L404.5 114.8L406.0 114.9L409.8 115.2L411.1 115.3L414.9 115.8L416.0 115.9L419.6 116.5L420.6 116.6L424.2 117.3L425.0 117.4L428.5 118.2L429.3 118.3L431.3 118.8L435.0 118.0L437.0 117.6L439.1 117.3L441.3 117.1L441.4 117.0L442.8 115.4L443.1 115.1L444.6 113.4L445.0 113.1L446.6 111.6L446.9 111.2L448.6 109.7L449.0 109.4L450.8 107.9L451.2 107.6L453.1 106.1L453.5 105.8L455.5 104.3L455.9 104.0L458.0 102.6L458.5 102.3L460.6 101.0L461.1 100.7L463.4 99.3L463.9 99.1L466.2 97.8L466.7 97.5L469.2 96.2L469.7 96.0L472.3 94.8L472.8 94.5L475.5 93.3L476.0 93.1L478.7 92.0L479.3 91.7L482.1 90.7L482.7 90.4L485.6 89.4L486.3 89.2L489.3 88.2L489.9 88.0L493.0 87.1L493.8 86.9L496.9 86.0L497.7 85.8L500.9 85.0L501.8 84.8L505.0 84.1L506.0 83.9L509.3 83.3L510.4 83.2L513.8 82.7L515.0 82.5L518.4 82.1L519.8 82.0L523.2 81.8L524.8 81.7L528.2 81.6L529.9 81.6L533.3 81.6L535.2 81.7L538.6 81.9L540.4 82.1L543.8 82.4L545.6 82.7L548.8 83.2L550.6 83.5L553.7 84.2L555.4 84.6L558.5 85.5L560.0 86.0L562.9 87.0L564.4 87.5L567.1 88.6L568.3 89.1L570.8 90.4L571.9 90.9L574.3 92.2L575.1 92.7L577.4 94.1L578.1 94.5L580.2 96.0L580.8 96.4L582.8 98.0L583.2 98.4L585.1 99.9L585.5 100.3L587.3 101.9L587.6 102.2L589.3 103.9L589.6 104.2L591.2 105.9L591.4 106.1L592.9 107.8L593.1 108.1L594.5 109.8L594.7 110.0L596.0 111.7L596.2 111.8L597.4 113.5L597.6 113.7L598.8 115.4L598.9 115.6L600.1 117.3L600.2 117.5L601.3 119.2L601.4 119.4L602.5 121.1L602.6 121.3L603.6 123.0L603.7 123.2L604.6 124.9L604.7 125.1L605.6 126.9L605.7 127.1L606.4 128.8L606.5 129.1L607.3 130.8L607.3 131.1L608.0 132.8L608.1 133.1L608.7 134.8L608.7 135.1L609.2 136.9L609.3 137.1L609.8 138.9L609.8 139.2L610.2 141.0L610.2 141.3L610.5 143.2L610.6 143.4L610.8 145.3L610.8 145.6L611.0 147.5L611.0 147.8L611.0 149.7L611.0 150.1L610.9 152.0L610.9 152.4L610.8 154.3L610.7 154.7L610.4 156.7L610.3 157.1L609.9 159.0L609.8 159.5L609.3 161.4L609.1 161.9L608.4 163.8L608.2 164.3L607.4 166.2L607.1 166.8L606.1 168.7L605.8 169.2L604.6 171.1L604.2 171.7L603.6 172.5L605.5 174.1L605.7 174.3L607.7 176.0L607.9 176.2L609.8 177.9L610.0 178.1L611.9 179.8L612.1 180.0L614.0 181.8L614.2 182.0L615.9 183.8L616.1 184.0L617.9 185.8L618.0 186.0L619.7 187.8L619.9 188.0L621.5 189.9L621.7 190.1L623.3 191.9L623.5 192.2L625.0 194.1L625.2 194.3L626.7 196.2L626.8 196.4L628.2 198.3L628.4 198.5L629.8 200.5L629.9 200.7L631.2 202.7L631.4 202.9L632.6 204.9L632.8 205.1L634.0 207.1L634.1 207.4L635.3 209.4L635.4 209.6L636.5 211.7L636.6 211.9L637.6 214.0L637.7 214.2L638.7 216.3L638.8 216.5L639.7 218.6L639.8 218.9L640.7 221.0L640.8 221.2L641.6 223.4L641.7 223.6L642.4 225.8L642.5 226.0L643.1 228.2L643.2 228.4L643.8 230.6L643.8 230.8L644.4 233.0L644.4 233.3L644.9 235.4L644.9 235.7L645.3 237.8L645.4 238.0L645.7 240.2L645.7 240.4L646.0 242.6L646.1 242.7L646.3 244.9L646.4 245.0L646.6 247.2L646.6 247.2L646.8 249.4L646.9 249.5L647.1 251.7L647.3 253.9L647.5 256.0L647.7 258.1L648.0 260.2L648.3 262.2L648.5 264.2L648.9 266.2L649.2 268.1L649.6 270.0L650.1 271.9L650.6 273.8L651.2 275.7L651.8 277.6L652.5 279.6L653.2 281.6L654.0 283.6L654.8 285.6L655.7 287.6L656.6 289.7L657.6 291.8L658.6 293.9L659.7 296.1L660.8 298.3L662.0 300.6L663.2 302.9L664.4 305.3L665.7 307.7L665.7 307.7L667.0 310.1L667.0 310.2L668.3 312.7L668.3 312.8L669.6 315.3L669.6 315.4L670.8 317.9L670.9 318.1L672.1 320.6L672.2 320.8L673.3 323.3L673.4 323.6L674.5 326.1L674.6 326.4L675.6 329.0L675.7 329.3L676.6 331.9L676.7 332.3L677.6 334.9L677.7 335.3L678.4 337.9L678.5 338.4L679.1 341.0L679.3 341.5L679.7 344.2L679.8 344.8L680.2 347.4L680.3 348.0L680.5 350.7L680.5 351.4L680.5 354.1L680.5 354.8L680.4 357.5L680.3 358.2L680.0 360.9L679.9 361.7L679.4 364.4L679.2 365.2L678.5 367.9L678.2 368.6L677.3 371.3L677.1 372.0L676.0 374.7L675.7 375.3L674.4 378.0L674.1 378.6L672.6 381.2L672.2 381.8L670.6 384.4L670.2 385.0L668.5 387.5L668.0 388.1L666.1 390.6L665.7 391.1L663.6 393.6L663.1 394.1L660.9 396.5L660.4 397.0L658.0 399.4L657.6 399.8L655.0 402.2L654.6 402.6L651.9 404.9L651.4 405.3L648.6 407.5L648.1 407.9L645.2 410.1L644.7 410.5L644.5 410.7L644.7 411.0L646.8 414.2L649.0 417.4L651.1 420.6L653.3 423.9L655.5 427.1L657.6 430.4L659.8 433.7L662.0 437.0L663.7 439.5L665.4 442.0L666.2 443.8L666.4 445.7L665.8 447.5L664.6 449.1L662.8 450.4L660.6 451.3L655.9 452.6L651.2 454.0L646.5 455.3L641.7 456.7L637.0 458.0L632.2 459.4L627.5 460.7L622.7 462.1L617.9 463.4L613.1 464.8L608.4 466.2L603.5 467.5L598.7 468.9L593.9 470.3L589.1 471.6L584.2 473.0L579.4 474.4L574.5 475.8L569.6 477.2L564.7 478.6L559.8 480.0L554.9 481.4L552.3 481.8L549.5 481.8L546.9 481.2L544.5 480.2L542.6 478.8L541.3 477.0L539.8 474.4L538.3 471.8L536.4 468.3L534.5 464.9L532.5 461.4L530.6 458.0L528.7 454.6L526.8 451.2L524.9 447.8L523.8 447.8L522.9 447.8L518.4 447.8L517.4 447.8L512.9 447.7L511.9 447.6L507.4 447.4L506.5 447.3L502.0 447.0L501.0 446.9L496.6 446.4L495.7 446.3L491.2 445.8L490.3 445.6L486.0 445.0L485.1 444.8L480.7 444.0L479.9 443.9L475.6 443.0L474.8 442.8L470.5 441.8L469.7 441.6L465.5 440.6L464.7 440.3L460.6 439.2L459.9 439.0L455.8 437.7L455.1 437.5L451.1 436.1L450.4 435.9L446.4 434.5L445.7 434.2L441.9 432.7L441.2 432.4L437.5 430.8L436.8 430.5L433.1 428.9L432.5 428.6L428.9 426.9L428.3 426.5L424.8 424.8L424.2 424.4L420.8 422.6L420.2 422.2L416.9 420.3L416.3 419.9L413.1 418.0L412.6 417.6L409.5 415.6L408.9 415.2L406.0 413.1L405.4 412.7L402.6 410.5L402.1 410.1L399.3 407.9L398.8 407.5L396.2 405.3L395.7 404.8L393.2 402.5L392.8 402.2L390.4 399.8L390.1 399.5L387.8 397.1L387.5 396.8L385.3 394.5L385.0 394.2L382.9 391.8L382.7 391.5L380.7 389.1L380.5 388.9L378.6 386.5L378.4 386.3L376.5 383.9L376.4 383.8L374.6 381.4L374.5 381.2L372.7 378.8L372.6 378.8L370.8 376.4L370.8 376.3L369.1 374.0L369.1 373.9L367.4 371.6L365.7 369.3L364.0 367.1L362.4 364.9L360.8 362.8L359.1 360.7L357.5 358.7L355.9 356.8L354.3 355.0L352.6 353.2L350.9 351.5L349.2 349.8L347.3 348.0L345.4 346.3L343.4 344.5L341.3 342.8L339.2 341.0L337.0 339.2L334.7 337.4L332.4 335.6L330.1 333.7L327.7 331.9L327.7 331.9L325.4 330.0L325.3 330.0L323.0 328.1L322.9 328.0L320.6 326.1L320.5 326.1L318.2 324.2L318.0 324.1L315.8 322.1L315.6 322.0L313.4 320.1L313.2 319.9L311.0 318.0L310.8 317.8L308.7 315.8L308.5 315.6L306.4 313.6L306.2 313.4L304.2 311.4L304.0 311.2L302.0 309.2L301.8 308.9L300.0 306.9L299.8 306.7L298.0 304.6L297.8 304.4L296.1 302.3L295.9 302.1L294.3 300.0L294.1 299.8L292.5 297.7L292.4 297.4L290.9 295.3L290.7 295.1L289.3 293.0L289.1 292.7L287.8 290.6L287.6 290.3L286.3 288.2L286.2 288.0L285.0 285.8L284.8 285.6L283.7 283.4L283.6 283.1L282.5 281.0L282.4 280.7L281.4 278.5L281.3 278.3L280.3 276.1L280.2 275.8L279.4 273.6L279.3 273.4L278.5 271.2L278.4 270.9L277.7 268.7L277.6 268.5L277.0 266.2L276.9 266.0L276.3 263.8L276.3 263.5L275.8 261.3L275.7 261.0L275.3 258.8L275.2 258.5L274.9 256.3L274.8 256.0L274.5 253.8L274.5 253.5L274.3 251.3L274.3 251.0L274.1 248.8L274.1 248.5L274.0 246.3L274.0 246.0L274.0 243.8L274.0 243.5ZM304.4 227.4L301.3 226.5L298.3 225.5L295.4 224.5L292.6 223.5L289.8 222.5L287.1 221.4L284.5 220.3L281.9 219.2L279.4 218.0L276.9 216.9L274.5 215.7L272.2 214.5L269.9 213.2L267.7 211.9L265.6 210.6L263.5 209.2L261.5 207.8L259.6 206.4L257.7 204.9L255.9 203.4L254.1 201.9L252.4 200.3L250.8 198.7L249.2 197.1L247.8 195.4L246.4 193.7L245.1 192.0L243.9 190.2L242.8 188.4L241.8 186.6L240.9 184.8L240.1 183.0L239.4 181.2L238.9 179.4L238.4 177.5L238.1 175.7L237.9 173.8L237.9 172.0L237.9 170.2L238.2 168.4L238.6 166.7L239.2 165.1L240.0 163.5L241.0 162.0L242.2 160.6L243.6 159.3L245.3 158.0L247.1 156.8L249.1 155.7L251.4 154.6L253.8 153.6L256.3 152.6L259.0 151.7L261.9 150.9L264.9 150.1L267.9 149.4L271.1 148.8L274.3 148.2L277.6 147.7L281.0 147.3L284.3 146.9L287.7 146.7L291.1 146.5L294.4 146.3L297.7 146.3L301.0 146.3L304.2 146.4L307.4 146.5L310.5 146.8L313.5 147.1L316.5 147.4L319.5 147.8L322.4 148.3L325.3 148.9L328.2 149.4L331.0 150.1L333.8 150.8L336.5 151.5L339.2 152.3L341.9 153.1L344.6 154.0L347.2 154.9L349.9 155.9L352.5 156.9L355.0 157.9L357.6 158.9L360.1 160.0L362.6 161.1L366.7 163.0L372.2 162.0L375.6 161.4L379.1 160.9L382.6 160.3L386.0 159.7L390.0 159.0L394.0 158.3L392.6 156.5L391.1 154.6L389.6 153.0L387.8 151.4L385.9 149.8L384.0 148.2L382.2 146.6L380.5 145.0L379.1 143.4L378.0 141.9L377.4 140.4L377.2 139.1L377.4 137.9L378.1 136.7L379.2 135.6L380.6 134.5L382.3 133.5L384.2 132.7L386.4 132.1L388.7 131.6L391.3 131.3L394.0 131.1L397.0 131.1L400.0 131.2L403.1 131.4L406.3 131.8L409.5 132.3L412.7 132.9L415.8 133.6L418.9 134.3L421.8 135.0L424.5 135.8L427.1 136.7L429.4 137.5L432.4 138.6L435.4 139.8L437.0 137.8L438.5 135.8L440.1 134.8L442.3 134.0L445.0 133.4L447.8 133.1L450.4 133.1L452.6 133.5L454.2 134.1L456.0 135.6L457.8 137.2L459.6 138.8L461.1 138.6L461.8 136.7L462.6 134.8L463.4 132.9L464.2 131.2L465.0 129.6L466.0 128.0L467.0 126.5L468.1 124.9L469.3 123.4L470.6 121.9L471.9 120.4L473.4 119.0L474.9 117.6L476.5 116.2L478.2 114.8L480.0 113.5L481.8 112.2L483.8 110.9L485.8 109.7L487.9 108.5L490.1 107.4L492.4 106.3L494.8 105.2L497.2 104.2L499.8 103.2L502.4 102.2L505.1 101.3L507.8 100.5L510.6 99.7L513.4 99.0L516.2 98.4L519.0 97.9L521.7 97.5L524.5 97.2L527.2 97.0L529.8 96.9L532.4 96.9L534.9 97.1L537.3 97.4L539.7 97.8L542.0 98.3L544.2 98.9L546.4 99.7L548.4 100.5L550.4 101.5L552.4 102.6L554.2 103.8L556.0 105.0L557.7 106.4L559.3 107.8L560.9 109.3L562.4 110.8L563.8 112.4L565.2 114.0L566.5 115.6L567.7 117.3L568.9 118.9L570.1 120.5L571.1 122.2L572.1 123.8L573.0 125.4L573.9 127.0L574.7 128.7L575.5 130.3L576.2 131.9L576.8 133.6L577.3 135.2L577.8 136.9L578.3 138.6L578.6 140.3L578.9 142.0L579.1 143.7L579.3 145.5L579.4 147.2L579.3 149.0L579.2 150.7L579.0 152.5L578.7 154.2L578.3 156.0L577.7 157.7L577.1 159.4L576.3 161.1L575.3 162.7L574.3 164.3L573.1 165.9L571.7 167.4L570.2 168.9L568.5 170.4L566.6 171.8L564.8 173.2L566.8 174.7L568.8 176.1L570.9 177.6L572.9 179.1L574.8 180.7L576.7 182.3L578.6 183.9L580.5 185.5L582.2 187.1L584.0 188.8L585.7 190.5L587.3 192.2L588.9 193.9L590.5 195.7L592.0 197.5L593.5 199.3L594.9 201.1L596.2 202.9L597.5 204.8L598.8 206.6L600.0 208.5L601.1 210.4L602.2 212.4L603.2 214.3L604.2 216.3L605.1 218.2L606.0 220.2L606.8 222.2L607.6 224.2L608.2 226.2L608.9 228.3L609.4 230.3L609.9 232.4L610.4 234.4L610.7 236.5L611.0 238.6L611.3 240.7L611.6 242.8L611.8 245.0L611.9 247.1L612.1 249.3L612.3 251.5L612.4 253.6L612.6 255.8L612.7 258.0L612.9 260.3L613.2 262.5L613.4 264.7L613.7 267.0L614.1 269.2L614.5 271.5L615.0 273.7L615.5 276.0L616.1 278.3L616.8 280.5L617.5 282.8L618.2 285.1L619.1 287.4L619.9 289.7L620.8 292.0L621.8 294.3L622.8 296.6L623.9 298.9L625.0 301.3L626.1 303.7L627.3 306.1L628.4 308.5L629.6 310.9L630.8 313.3L632.0 315.7L633.2 318.1L634.3 320.6L635.4 323.0L636.4 325.4L637.4 327.9L638.4 330.3L639.2 332.8L640.0 335.2L640.7 337.6L641.3 340.0L641.8 342.5L642.2 344.8L642.4 347.2L642.5 349.6L642.5 352.0L642.3 354.3L641.9 356.6L641.4 358.9L640.7 361.2L639.9 363.5L638.9 365.8L637.7 368.0L636.4 370.3L634.9 372.5L633.3 374.7L631.5 376.9L629.6 379.0L627.6 381.2L625.4 383.3L623.1 385.3L620.7 387.3L618.1 389.3L615.5 391.3L612.7 393.2L609.8 395.0L606.9 396.8L603.8 398.6L600.7 400.3L597.5 401.9L594.2 403.5L590.8 405.0L587.4 406.5L583.9 407.9L580.4 409.2L576.8 410.4L573.1 411.6L569.4 412.7L565.6 413.7L561.8 414.7L558.0 415.6L554.2 416.4L550.3 417.1L546.4 417.7L542.4 418.2L538.5 418.7L534.5 419.0L530.6 419.3L526.6 419.5L522.6 419.6L518.7 419.6L514.7 419.5L510.8 419.2L506.9 418.9L503.0 418.5L499.1 418.1L495.3 417.5L491.5 416.8L487.7 416.0L483.9 415.2L480.2 414.3L476.6 413.3L473.0 412.2L469.4 411.0L465.9 409.8L462.5 408.5L459.1 407.1L455.8 405.6L452.6 404.1L449.5 402.5L446.4 400.9L443.4 399.2L440.5 397.5L437.7 395.7L435.0 393.8L432.4 391.9L429.9 389.9L427.5 387.9L425.2 385.9L422.9 383.8L420.8 381.7L418.7 379.5L416.7 377.3L414.7 375.1L412.8 372.9L411.0 370.6L409.1 368.3L407.3 366.0L405.6 363.7L403.8 361.4L402.0 359.1L400.3 356.8L398.5 354.5L396.7 352.2L394.9 349.9L393.0 347.7L391.1 345.5L389.2 343.3L387.1 341.1L385.1 338.9L382.9 336.8L380.8 334.8L378.5 332.8L376.2 330.8L373.9 328.8L371.6 326.9L369.2 325.0L366.8 323.2L364.5 321.3L362.1 319.5L359.7 317.7L357.3 315.9L355.0 314.1L352.7 312.3L350.4 310.5L348.1 308.7L345.9 306.9L343.8 305.1L341.7 303.3L339.7 301.5L337.7 299.6L335.8 297.8L333.9 295.9L332.2 294.0L330.4 292.1L328.8 290.2L327.2 288.3L325.7 286.3L324.2 284.4L322.8 282.4L321.5 280.4L320.2 278.4L319.0 276.4L317.9 274.4L316.8 272.4L315.8 270.4L314.9 268.3L314.0 266.3L313.2 264.2L312.5 262.2L311.8 260.1L311.2 258.0L310.7 255.9L310.2 253.8L309.8 251.7L309.5 249.6L309.2 247.5L309.0 245.4L308.9 243.3L308.8 241.2L308.8 239.1L308.9 237.0L309.0 234.8L309.2 232.7L309.7 229.1Z" fill="#9c9fa0" fill-rule="evenodd"/>
<path class="l" stroke-width="1.2" stroke-opacity="0.9" d="M274.1 241.9L271.9 241.1M271.9 241.1L271.6 240.9M271.6 240.9L268.6 239.8M268.6 239.8L268.3 239.7M268.3 239.7L265.4 238.5M265.4 238.5L265.0 238.3M265.0 238.3L262.2 237.2M262.2 237.2L261.8 237.0M261.8 237.0L259.0 235.8M259.0 235.8L258.7 235.6M258.7 235.6L256.0 234.4M256.0 234.4L255.6 234.2M255.6 234.2L253.0 232.9M253.0 232.9L252.6 232.7M252.6 232.7L250.0 231.4M250.0 231.4L249.7 231.2M249.7 231.2L247.2 229.8M247.2 229.8L246.8 229.6M246.8 229.6L244.4 228.3M244.4 228.3L244.0 228.0M244.0 228.0L241.6 226.6M241.6 226.6L241.3 226.4M241.3 226.4L239.0 224.9M239.0 224.9L238.6 224.7M238.6 224.7L236.4 223.2M236.4 223.2L236.1 223.0M236.1 223.0L233.9 221.4M233.9 221.4L233.6 221.2M233.6 221.2L231.5 219.6M231.5 219.6L231.2 219.4M231.2 219.4L229.2 217.7M229.2 217.7L228.9 217.5M228.9 217.5L226.9 215.8M226.9 215.8L226.6 215.6M226.6 215.6L224.8 213.9M224.8 213.9L224.5 213.6M224.5 213.6L222.7 211.9M222.7 211.9L222.4 211.6M222.4 211.6L220.7 209.8M220.7 209.8L220.5 209.6M220.5 209.6L218.8 207.7M218.8 207.7L218.6 207.5M218.6 207.5L217.0 205.6M217.0 205.6L216.8 205.3M216.8 205.3L215.4 203.5M215.4 203.5L215.1 203.2M215.1 203.2L213.8 201.3M213.8 201.3L213.6 201.0M213.6 201.0L212.3 199.0M212.3 199.0L212.1 198.7M212.1 198.7L211.0 196.7M211.0 196.7L210.8 196.4M210.8 196.4L209.8 194.4M209.8 194.4L209.6 194.1M209.6 194.1L208.7 192.1M208.7 192.1L208.5 191.7M208.5 191.7L207.7 189.7M207.7 189.7L207.6 189.4M207.6 189.4L206.9 187.3M206.9 187.3L206.8 186.9M206.8 186.9L206.2 184.9M206.2 184.9L206.1 184.5M206.1 184.5L205.7 182.4M205.7 182.4L205.6 182.0M610.9 152.0L610.9 152.4M610.9 152.4L610.8 154.3M610.8 154.3L610.7 154.7M610.7 154.7L610.4 156.7M610.4 156.7L610.3 157.1M610.3 157.1L609.9 159.0M609.9 159.0L609.8 159.5M609.8 159.5L609.3 161.4M609.3 161.4L609.1 161.9M609.1 161.9L608.4 163.8M608.4 163.8L608.2 164.3M608.2 164.3L607.4 166.2M607.4 166.2L607.1 166.8M607.1 166.8L606.1 168.7M606.1 168.7L605.8 169.2M605.8 169.2L604.6 171.1M604.6 171.1L604.2 171.7M604.2 171.7L603.6 172.5M680.3 358.2L680.0 360.9M680.0 360.9L679.9 361.7M679.9 361.7L679.4 364.4M679.4 364.4L679.2 365.2M679.2 365.2L678.5 367.9M678.5 367.9L678.2 368.6M678.2 368.6L677.3 371.3M677.3 371.3L677.1 372.0M677.1 372.0L676.0 374.7M676.0 374.7L675.7 375.3M675.7 375.3L674.4 378.0M674.4 378.0L674.1 378.6M674.1 378.6L672.6 381.2M672.6 381.2L672.2 381.8M672.2 381.8L670.6 384.4M670.6 384.4L670.2 385.0M670.2 385.0L668.5 387.5M668.5 387.5L668.0 388.1M668.0 388.1L666.1 390.6M666.1 390.6L665.7 391.1M665.7 391.1L663.6 393.6M663.6 393.6L663.1 394.1M663.1 394.1L660.9 396.5M660.9 396.5L660.4 397.0M660.4 397.0L658.0 399.4M658.0 399.4L657.6 399.8M657.6 399.8L655.0 402.2M655.0 402.2L654.6 402.6M654.6 402.6L651.9 404.9M651.9 404.9L651.4 405.3M651.4 405.3L648.6 407.5M648.6 407.5L648.1 407.9M648.1 407.9L645.2 410.1M645.2 410.1L644.7 410.5M644.7 410.5L644.5 410.7M666.4 445.7L665.8 447.5M665.8 447.5L664.6 449.1M664.6 449.1L662.8 450.4M662.8 450.4L660.6 451.3M660.6 451.3L655.9 452.6M655.9 452.6L651.2 454.0M651.2 454.0L646.5 455.3M646.5 455.3L641.7 456.7M641.7 456.7L637.0 458.0M637.0 458.0L632.2 459.4M632.2 459.4L627.5 460.7M627.5 460.7L622.7 462.1M622.7 462.1L617.9 463.4M617.9 463.4L613.1 464.8M613.1 464.8L608.4 466.2M608.4 466.2L603.5 467.5M603.5 467.5L598.7 468.9M598.7 468.9L593.9 470.3M593.9 470.3L589.1 471.6M589.1 471.6L584.2 473.0M584.2 473.0L579.4 474.4M579.4 474.4L574.5 475.8M574.5 475.8L569.6 477.2M569.6 477.2L564.7 478.6M564.7 478.6L559.8 480.0M559.8 480.0L554.9 481.4M554.9 481.4L552.3 481.8M552.3 481.8L549.5 481.8M549.5 481.8L546.9 481.2M546.9 481.2L544.5 480.2M544.5 480.2L542.6 478.8M542.6 478.8L541.3 477.0M541.3 477.0L539.8 474.4M539.8 474.4L538.3 471.8M538.3 471.8L536.4 468.3M536.4 468.3L534.5 464.9M534.5 464.9L532.5 461.4M532.5 461.4L530.6 458.0M530.6 458.0L528.7 454.6M528.7 454.6L526.8 451.2M526.8 451.2L524.9 447.8M524.9 447.8L523.8 447.8M523.8 447.8L522.9 447.8M522.9 447.8L518.4 447.8M518.4 447.8L517.4 447.8M517.4 447.8L512.9 447.7M512.9 447.7L511.9 447.6M511.9 447.6L507.4 447.4M507.4 447.4L506.5 447.3M506.5 447.3L502.0 447.0M502.0 447.0L501.0 446.9M501.0 446.9L496.6 446.4M496.6 446.4L495.7 446.3M495.7 446.3L491.2 445.8M491.2 445.8L490.3 445.6M490.3 445.6L486.0 445.0M486.0 445.0L485.1 444.8M485.1 444.8L480.7 444.0M480.7 444.0L479.9 443.9M479.9 443.9L475.6 443.0M475.6 443.0L474.8 442.8M474.8 442.8L470.5 441.8M470.5 441.8L469.7 441.6M469.7 441.6L465.5 440.6M465.5 440.6L464.7 440.3M464.7 440.3L460.6 439.2M460.6 439.2L459.9 439.0M459.9 439.0L455.8 437.7M455.8 437.7L455.1 437.5M455.1 437.5L451.1 436.1M451.1 436.1L450.4 435.9M450.4 435.9L446.4 434.5M446.4 434.5L445.7 434.2M445.7 434.2L441.9 432.7M441.9 432.7L441.2 432.4M441.2 432.4L437.5 430.8M437.5 430.8L436.8 430.5M436.8 430.5L433.1 428.9M433.1 428.9L432.5 428.6M432.5 428.6L428.9 426.9M428.9 426.9L428.3 426.5M428.3 426.5L424.8 424.8M424.8 424.8L424.2 424.4M424.2 424.4L420.8 422.6M420.8 422.6L420.2 422.2M420.2 422.2L416.9 420.3M416.9 420.3L416.3 419.9M416.3 419.9L413.1 418.0M413.1 418.0L412.6 417.6M412.6 417.6L409.5 415.6M409.5 415.6L408.9 415.2M408.9 415.2L406.0 413.1M406.0 413.1L405.4 412.7M405.4 412.7L402.6 410.5M402.6 410.5L402.1 410.1M402.1 410.1L399.3 407.9M399.3 407.9L398.8 407.5M398.8 407.5L396.2 405.3M396.2 405.3L395.7 404.8M395.7 404.8L393.2 402.5M393.2 402.5L392.8 402.2M392.8 402.2L390.4 399.8M390.4 399.8L390.1 399.5M390.1 399.5L387.8 397.1M387.8 397.1L387.5 396.8M387.5 396.8L385.3 394.5M385.3 394.5L385.0 394.2M385.0 394.2L382.9 391.8M382.9 391.8L382.7 391.5M382.7 391.5L380.7 389.1M380.7 389.1L380.5 388.9M380.5 388.9L378.6 386.5M378.6 386.5L378.4 386.3M378.4 386.3L376.5 383.9M376.5 383.9L376.4 383.8M376.4 383.8L374.6 381.4M374.6 381.4L374.5 381.2M374.5 381.2L372.7 378.8M372.7 378.8L372.6 378.8M372.6 378.8L370.8 376.4M370.8 376.4L370.8 376.3M370.8 376.3L369.1 374.0M369.1 374.0L369.1 373.9M369.1 373.9L367.4 371.6M367.4 371.6L365.7 369.3M365.7 369.3L364.0 367.1M364.0 367.1L362.4 364.9M362.4 364.9L360.8 362.8M360.8 362.8L359.1 360.7M359.1 360.7L357.5 358.7M357.5 358.7L355.9 356.8M355.9 356.8L354.3 355.0M354.3 355.0L352.6 353.2M352.6 353.2L350.9 351.5M350.9 351.5L349.2 349.8M349.2 349.8L347.3 348.0M347.3 348.0L345.4 346.3M345.4 346.3L343.4 344.5M343.4 344.5L341.3 342.8M341.3 342.8L339.2 341.0M339.2 341.0L337.0 339.2M337.0 339.2L334.7 337.4M334.7 337.4L332.4 335.6M332.4 335.6L330.1 333.7M330.1 333.7L327.7 331.9M327.7 331.9L327.7 331.9M327.7 331.9L325.4 330.0M325.4 330.0L325.3 330.0M325.3 330.0L323.0 328.1M323.0 328.1L322.9 328.0M322.9 328.0L320.6 326.1M320.6 326.1L320.5 326.1M320.5 326.1L318.2 324.2M318.2 324.2L318.0 324.1M318.0 324.1L315.8 322.1M315.8 322.1L315.6 322.0M315.6 322.0L313.4 320.1M313.4 320.1L313.2 319.9M313.2 319.9L311.0 318.0M311.0 318.0L310.8 317.8M310.8 317.8L308.7 315.8M308.7 315.8L308.5 315.6M308.5 315.6L306.4 313.6M306.4 313.6L306.2 313.4M306.2 313.4L304.2 311.4M304.2 311.4L304.0 311.2M304.0 311.2L302.0 309.2M302.0 309.2L301.8 308.9M301.8 308.9L300.0 306.9M300.0 306.9L299.8 306.7M299.8 306.7L298.0 304.6M298.0 304.6L297.8 304.4M297.8 304.4L296.1 302.3M296.1 302.3L295.9 302.1M295.9 302.1L294.3 300.0M294.3 300.0L294.1 299.8M294.1 299.8L292.5 297.7M292.5 297.7L292.4 297.4M292.4 297.4L290.9 295.3M290.9 295.3L290.7 295.1M290.7 295.1L289.3 293.0M289.3 293.0L289.1 292.7M289.1 292.7L287.8 290.6M287.8 290.6L287.6 290.3M287.6 290.3L286.3 288.2M286.3 288.2L286.2 288.0M286.2 288.0L285.0 285.8M285.0 285.8L284.8 285.6M284.8 285.6L283.7 283.4M283.7 283.4L283.6 283.1M283.6 283.1L282.5 281.0M282.5 281.0L282.4 280.7M282.4 280.7L281.4 278.5M281.4 278.5L281.3 278.3M281.3 278.3L280.3 276.1M280.3 276.1L280.2 275.8M280.2 275.8L279.4 273.6M279.4 273.6L279.3 273.4M279.3 273.4L278.5 271.2M278.5 271.2L278.4 270.9M278.4 270.9L277.7 268.7M277.7 268.7L277.6 268.5M277.6 268.5L277.0 266.2M277.0 266.2L276.9 266.0M276.9 266.0L276.3 263.8M276.3 263.8L276.3 263.5M276.3 263.5L275.8 261.3M275.8 261.3L275.7 261.0M275.7 261.0L275.3 258.8M275.3 258.8L275.2 258.5M275.2 258.5L274.9 256.3M274.9 256.3L274.8 256.0"/>
<path class="l" stroke-width="1.35" d="M524.9 456.8L524.9 447.8"/>
<path shape-rendering="crispEdges" fill="#a7aaab" d="M529.9 61.4L526.3 61.5L523.5 61.7L524.2 62.6L530.3 61.4ZM543.6 62.5L540.3 62.0L540.1 62.0L541.2 63.3L544.4 62.7ZM522.9 61.7L519.4 62.1L516.1 62.6L517.2 63.9L524.2 62.6L523.5 61.7ZM536.9 61.6L533.4 61.4L531.5 61.4L534.1 64.6L534.4 64.7L541.2 63.3L540.1 62.0ZM530.3 61.4L524.2 62.6L525.9 64.7L527.0 64.6L530.0 64.5L533.0 64.6L534.1 64.6L531.5 61.4Z"/>
<path class="l" stroke-width="1.35" d="M529.9 61.4L533.4 61.4M526.3 61.5L529.9 61.4M533.4 61.4L536.9 61.6M522.9 61.7L526.3 61.5M536.9 61.6L540.3 62.0M519.4 62.1L522.9 61.7"/>
<path shape-rendering="crispEdges" fill="#a7aaab" d="M516.0 62.6L512.6 63.2L509.3 63.9L509.0 63.9L510.1 65.3L517.2 63.9L516.1 62.6Z"/>
<path class="l" stroke-width="1.35" d="M540.3 62.0L543.6 62.5"/>
<path shape-rendering="crispEdges" fill="#a7aaab" d="M521.0 65.2L524.0 64.8L525.9 64.7L524.2 62.6L517.2 63.9L518.4 65.5Z"/>
<path class="l" stroke-width="1.35" d="M516.0 62.6L519.4 62.1"/>
<path shape-rendering="crispEdges" fill="#a7aaab" d="M546.8 63.2L544.4 62.7L541.2 63.3L543.2 65.9L544.1 66.1L545.9 66.6L551.1 65.5L549.9 64.1ZM535.9 64.8L538.7 65.1L541.5 65.5L543.2 65.9L541.2 63.3L534.4 64.7Z"/>
<path class="l" stroke-width="1.35" d="M543.6 62.5L546.8 63.2"/>
<path shape-rendering="crispEdges" fill="#a7aaab" d="M552.9 65.0L549.9 64.1L549.9 64.1L551.1 65.5L553.1 65.1Z"/>
<path class="l" stroke-width="1.35" d="M512.6 63.2L516.0 62.6M546.8 63.2L549.9 64.1"/>
<path shape-rendering="crispEdges" fill="#a7aaab" d="M506.0 64.6L502.8 65.5L502.2 65.7L503.0 66.7L510.1 65.3L509.0 63.9ZM511.9 66.8L514.9 66.2L517.9 65.6L518.4 65.5L517.2 63.9L510.1 65.3L511.3 66.9Z"/>
<path class="l" stroke-width="1.35" d="M509.3 63.9L512.6 63.2M549.9 64.1L552.9 65.0M506.0 64.6L509.3 63.9"/>
<path shape-rendering="crispEdges" fill="#cccfd0" d="M529.7 105.1L532.3 105.1L533.0 39.1L530.4 39.1Z"/>
<path shape-rendering="crispEdges" fill="#c6c9ca" d="M527.1 105.1L529.7 105.1L530.4 39.1L527.7 39.1Z"/>
<path shape-rendering="crispEdges" fill="#d2d5d6" d="M532.3 105.1L534.8 105.2L535.6 39.3L533.0 39.1Z"/>
<path shape-rendering="crispEdges" fill="#c1c4c5" d="M524.4 105.3L527.1 105.1L527.7 39.1L524.9 39.3Z"/>
<path shape-rendering="crispEdges" fill="#d6d9da" d="M534.8 105.2L537.2 105.5L538.1 39.5L535.6 39.3Z"/>
<path shape-rendering="crispEdges" fill="#a7aaab" d="M558.2 67.4L555.6 66.2L553.1 65.1L551.1 65.5L554.0 69.1L559.4 68.0Z"/>
<path shape-rendering="crispEdges" fill="#bdc0c1" d="M521.7 105.6L524.4 105.3L524.9 39.3L522.1 39.6Z"/>
<path shape-rendering="crispEdges" fill="#a7aaab" d="M499.7 66.4L496.6 67.4L495.6 67.8L495.8 68.1L503.0 66.7L502.2 65.7ZM546.7 66.8L549.2 67.6L551.5 68.6L553.1 69.3L554.0 69.1L551.1 65.5L545.9 66.6ZM505.9 68.3L508.9 67.5L511.3 66.9L510.1 65.3L503.0 66.7L504.5 68.7Z"/>
<path shape-rendering="crispEdges" fill="#d5d8d9" d="M537.2 105.5L539.6 105.9L540.6 39.9L538.1 39.5Z"/>
<path class="l" stroke-width="1.35" d="M502.8 65.5L506.0 64.6M552.9 65.0L555.6 66.2"/>
<path shape-rendering="crispEdges" fill="#babdbe" d="M518.9 106.1L521.7 105.6L522.1 39.6L519.2 40.0Z"/>
<path shape-rendering="crispEdges" fill="#d1d4d5" d="M539.6 105.9L541.9 106.4L543.0 40.4L540.6 39.9Z"/>
<path shape-rendering="crispEdges" fill="#b7babb" d="M516.1 106.6L518.9 106.1L519.2 40.0L516.3 40.5Z"/>
<path class="l" stroke-width="1.35" d="M499.7 66.4L502.8 65.5"/>
<path shape-rendering="crispEdges" fill="#cdd0d1" d="M541.9 106.4L544.1 107.1L545.3 41.0L543.0 40.4Z"/>
<path shape-rendering="crispEdges" fill="#a7aaab" d="M493.7 68.4L493.2 68.6L495.8 68.1L495.6 67.8Z"/>
<path shape-rendering="crispEdges" fill="#b4b7b8" d="M513.3 107.2L516.1 106.6L516.3 40.5L513.4 41.1Z"/>
<path class="l" stroke-width="1.35" d="M555.6 66.2L558.2 67.4"/>
<path class="l" stroke-width="0.8" stroke-opacity="0.6" d="M529.7 105.1L532.3 105.1M527.1 105.1L529.7 105.1M532.3 105.1L534.8 105.2M524.4 105.3L527.1 105.1"/>
<path shape-rendering="crispEdges" fill="#c9cccd" d="M544.1 107.1L546.2 107.8L547.5 41.7L545.3 41.0Z"/>
<path class="l" stroke-width="0.8" stroke-opacity="0.6" d="M534.8 105.2L537.2 105.5"/>
<path shape-rendering="crispEdges" fill="#a7aaab" d="M500.1 70.1L503.0 69.1L504.5 68.7L503.0 66.7L495.8 68.1L497.9 70.9Z"/>
<path class="l" stroke-width="0.8" stroke-opacity="0.6" d="M521.7 105.6L524.4 105.3"/>
<path class="l" stroke-width="1.35" d="M496.6 67.4L499.7 66.4"/>
<path class="l" stroke-width="0.8" stroke-opacity="0.6" d="M537.2 105.5L539.6 105.9"/>
<path shape-rendering="crispEdges" fill="#b2b5b6" d="M510.6 107.9L513.3 107.2L513.4 41.1L510.6 41.8Z"/>
<path class="l" stroke-width="0.8" stroke-opacity="0.6" d="M518.9 106.1L521.7 105.6"/>
<path shape-rendering="crispEdges" fill="#a7aaab" d="M553.8 69.6L554.9 70.3L554.0 69.1L553.1 69.3Z"/>
<path class="l" stroke-width="0.8" stroke-opacity="0.6" d="M539.6 105.9L541.9 106.4"/>
<path shape-rendering="crispEdges" fill="#c6c9ca" d="M546.2 107.8L548.3 108.7L549.6 42.6L547.5 41.7Z"/>
<path class="l" stroke-width="1.35" d="M558.2 67.4L560.6 68.7"/>
<path shape-rendering="crispEdges" fill="#b0b3b4" d="M507.8 108.6L510.6 107.9L510.6 41.8L507.7 42.5Z"/>
<path class="l" stroke-width="0.8" stroke-opacity="0.6" d="M516.1 106.6L518.9 106.1"/>
<path shape-rendering="crispEdges" fill="#a7aaab" d="M562.9 70.1L560.6 68.7L559.4 68.0L554.0 69.1L554.9 70.3L555.9 70.8L557.9 72.0L558.5 72.4L564.0 71.3L563.1 70.2Z"/>
<path class="l" stroke-width="1.35" d="M493.7 68.4L496.6 67.4"/>
<path class="l" stroke-width="0.8" stroke-opacity="0.6" d="M541.9 106.4L544.1 107.1M513.3 107.2L516.1 106.6"/>
<path shape-rendering="crispEdges" fill="#c4c7c8" d="M548.3 108.7L550.3 109.7L551.7 43.5L549.6 42.6Z"/>
<path shape-rendering="crispEdges" fill="#a7aaab" d="M563.1 70.2L564.0 71.3L564.6 71.2Z"/>
<path shape-rendering="crispEdges" fill="#acafb0" d="M505.1 109.5L507.8 108.6L507.7 42.5L504.9 43.3Z"/>
<path shape-rendering="crispEdges" fill="#a7aaab" d="M490.8 69.5L489.2 70.2L491.4 73.1L492.8 72.8L494.7 72.1L497.4 71.0L497.9 70.9L495.8 68.1L493.2 68.6Z"/>
<path class="l" stroke-width="0.8" stroke-opacity="0.6" d="M544.1 107.1L546.2 107.8"/>
<path class="l" stroke-width="1.35" d="M560.6 68.7L562.9 70.1"/>
<path class="l" stroke-width="0.8" stroke-opacity="0.6" d="M510.6 107.9L513.3 107.2"/>
<path class="l" stroke-width="1.35" d="M490.8 69.5L493.7 68.4"/>
<path shape-rendering="crispEdges" fill="#c2c5c6" d="M550.3 109.7L552.2 110.7L553.6 44.6L551.7 43.5Z"/>
<path shape-rendering="crispEdges" fill="#a8abac" d="M502.4 110.4L505.1 109.5L504.9 43.3L502.1 44.2Z"/>
<path class="l" stroke-width="0.8" stroke-opacity="0.6" d="M546.2 107.8L548.3 108.7M507.8 108.6L510.6 107.9"/>
<path class="l" stroke-width="1.35" d="M488.0 70.6L490.8 69.5"/>
<path class="l" stroke-width="0.8" stroke-opacity="0.6" d="M548.3 108.7L550.3 109.7"/>
<path shape-rendering="crispEdges" fill="#a5a8a9" d="M499.8 111.3L502.4 110.4L502.1 44.2L499.4 45.1Z"/>
<path class="l" stroke-width="1.35" d="M562.9 70.1L565.1 71.5"/>
<path shape-rendering="crispEdges" fill="#bfc2c3" d="M552.2 110.7L554.0 111.9L555.6 45.7L553.6 44.6Z"/>
<path class="l" stroke-width="0.8" stroke-opacity="0.6" d="M505.1 109.5L507.8 108.6"/>
<path shape-rendering="crispEdges" fill="#a7aaab" d="M488.0 70.6L485.3 71.8L483.0 72.9L484.2 74.5L491.4 73.1L489.2 70.2ZM567.1 73.1L565.1 71.5L564.6 71.2L564.0 71.3L567.0 74.9L568.9 74.6ZM559.9 73.3L561.7 74.7L562.9 75.8L567.0 74.9L564.0 71.3L558.5 72.4ZM492.1 73.1L492.8 72.8L491.4 73.1L491.5 73.4Z"/>
<path class="l" stroke-width="1.35" d="M485.3 71.8L488.0 70.6"/>
<path shape-rendering="crispEdges" fill="#a1a4a5" d="M497.3 112.3L499.8 111.3L499.4 45.1L496.8 46.1Z"/>
<path class="l" stroke-width="0.8" stroke-opacity="0.6" d="M550.3 109.7L552.2 110.7M502.4 110.4L505.1 109.5"/>
<path shape-rendering="crispEdges" fill="#bdc0c1" d="M554.0 111.9L555.8 113.2L557.4 46.9L555.6 45.7Z"/>
<path class="l" stroke-width="1.35" d="M565.1 71.5L567.1 73.1"/>
<path shape-rendering="crispEdges" fill="#9da0a1" d="M494.8 113.4L497.3 112.3L496.8 46.1L494.3 47.1Z"/>
<path class="l" stroke-width="0.8" stroke-opacity="0.6" d="M499.8 111.3L502.4 110.4M552.2 110.7L554.0 111.9"/>
<path class="l" stroke-width="1.35" d="M482.8 73.0L485.3 71.8"/>
<path shape-rendering="crispEdges" fill="#a7aaab" d="M482.8 73.0L480.3 74.3L477.9 75.6L477.4 75.8L484.2 74.5L483.0 72.9ZM487.2 75.4L489.6 74.2L491.5 73.4L491.4 73.1L484.2 74.5L485.4 76.2Z"/>
<path shape-rendering="crispEdges" fill="#babdbe" d="M555.8 113.2L557.5 114.5L559.1 48.2L557.4 46.9Z"/>
<path class="l" stroke-width="0.8" stroke-opacity="0.6" d="M497.3 112.3L499.8 111.3"/>
<path shape-rendering="crispEdges" fill="#999c9d" d="M492.5 114.4L494.8 113.4L494.3 47.1L491.9 48.1Z"/>
<path class="l" stroke-width="1.35" d="M567.1 73.1L569.0 74.6"/>
<path class="l" stroke-width="0.8" stroke-opacity="0.6" d="M554.0 111.9L555.8 113.2"/>
<path class="l" stroke-width="1.35" d="M480.3 74.3L482.8 73.0"/>
<path shape-rendering="crispEdges" fill="#a7aaab" d="M572.4 77.9L570.8 76.3L569.0 74.6L568.9 74.6L567.0 74.9L570.0 78.6L572.6 78.1Z"/>
<path shape-rendering="crispEdges" fill="#b8bbbc" d="M557.5 114.5L559.1 116.0L560.8 49.6L559.1 48.2Z"/>
<path class="l" stroke-width="0.8" stroke-opacity="0.6" d="M494.8 113.4L497.3 112.3"/>
<path shape-rendering="crispEdges" fill="#959899" d="M490.2 115.6L492.5 114.4L491.9 48.1L489.5 49.2Z"/>
<path shape-rendering="crispEdges" fill="#a7aaab" d="M563.5 76.2L565.1 77.7L566.7 79.3L570.0 78.6L567.0 74.9L562.9 75.8ZM477.0 76.1L479.6 79.6L480.4 79.0L482.6 77.8L484.8 76.5L485.4 76.2L484.2 74.5L477.4 75.8Z"/>
<path class="l" stroke-width="0.8" stroke-opacity="0.6" d="M555.8 113.2L557.5 114.5"/>
<path class="l" stroke-width="1.35" d="M569.0 74.6L570.8 76.3M477.9 75.6L480.3 74.3"/>
<path class="l" stroke-width="0.8" stroke-opacity="0.6" d="M492.5 114.4L494.8 113.4"/>
<path shape-rendering="crispEdges" fill="#919495" d="M488.0 116.7L490.2 115.6L489.5 49.2L487.2 50.3Z"/>
<path shape-rendering="crispEdges" fill="#b6b9ba" d="M559.1 116.0L560.7 117.5L562.5 51.1L560.8 49.6Z"/>
<path class="l" stroke-width="0.8" stroke-opacity="0.6" d="M557.5 114.5L559.1 116.0"/>
<path class="l" stroke-width="1.35" d="M475.5 76.9L477.9 75.6"/>
<path class="l" stroke-width="0.8" stroke-opacity="0.6" d="M490.2 115.6L492.5 114.4"/>
<path class="l" stroke-width="1.35" d="M570.8 76.3L572.4 77.9"/>
<path shape-rendering="crispEdges" fill="#8d9091" d="M485.9 117.9L488.0 116.7L487.2 50.3L485.1 51.5Z"/>
<path shape-rendering="crispEdges" fill="#a7aaab" d="M475.5 76.9L473.3 78.3L471.3 79.6L472.3 81.0L479.4 79.6L479.6 79.6L477.0 76.1Z"/>
<path shape-rendering="crispEdges" fill="#b4b7b8" d="M560.7 117.5L562.2 119.0L564.0 52.5L562.5 51.1Z"/>
<path class="l" stroke-width="0.8" stroke-opacity="0.6" d="M488.0 116.7L490.2 115.6"/>
<path class="l" stroke-width="1.35" d="M473.3 78.3L475.5 76.9"/>
<path class="l" stroke-width="0.8" stroke-opacity="0.6" d="M559.1 116.0L560.7 117.5"/>
<path shape-rendering="crispEdges" fill="#a7aaab" d="M575.5 81.3L574.0 79.6L572.6 78.1L570.0 78.6L573.0 82.3L575.9 81.7Z"/>
<path shape-rendering="crispEdges" fill="#888b8c" d="M483.9 119.1L485.9 117.9L485.1 51.5L483.0 52.7Z"/>
<path class="l" stroke-width="1.35" d="M572.4 77.9L574.0 79.6"/>
<path shape-rendering="crispEdges" fill="#a7aaab" d="M566.7 79.3L568.2 80.9L569.6 82.5L569.9 82.9L573.0 82.3L570.0 78.6L566.7 79.3Z"/>
<path class="l" stroke-width="0.8" stroke-opacity="0.6" d="M485.9 117.9L488.0 116.7"/>
<path shape-rendering="crispEdges" fill="#b2b5b6" d="M562.2 119.0L563.6 120.6L565.5 54.1L564.0 52.5Z"/>
<path shape-rendering="crispEdges" fill="#a7aaab" d="M471.2 79.7L469.2 81.1L468.3 81.8L472.3 81.0L471.3 79.6Z"/>
<path class="l" stroke-width="1.35" d="M471.2 79.7L473.3 78.3"/>
<path shape-rendering="crispEdges" fill="#848788" d="M482.0 120.4L483.9 119.1L483.0 52.7L481.0 53.9Z"/>
<path class="l" stroke-width="0.8" stroke-opacity="0.6" d="M560.7 117.5L562.2 119.0"/>
<path shape-rendering="crispEdges" fill="#a7aaab" d="M474.5 83.0L476.4 81.6L478.4 80.3L479.4 79.6L472.3 81.0L474.0 83.4Z"/>
<path class="l" stroke-width="0.8" stroke-opacity="0.6" d="M483.9 119.1L485.9 117.9"/>
<path class="l" stroke-width="1.35" d="M574.0 79.6L575.5 81.3"/>
<path shape-rendering="crispEdges" fill="#b0b3b4" d="M563.6 120.6L565.0 122.2L566.9 55.6L565.5 54.1Z"/>
<path shape-rendering="crispEdges" fill="#808384" d="M480.1 121.7L482.0 120.4L481.0 53.9L479.0 55.1Z"/>
<path class="l" stroke-width="1.35" d="M469.2 81.1L471.2 79.7"/>
<path class="l" stroke-width="0.8" stroke-opacity="0.6" d="M562.2 119.0L563.6 120.6M482.0 120.4L483.9 119.1"/>
<path shape-rendering="crispEdges" fill="#a7aaab" d="M578.3 84.7L577.0 83.0L575.9 81.7L573.0 82.3L576.1 86.0L578.9 85.4Z"/>
<path shape-rendering="crispEdges" fill="#7b7e7f" d="M478.3 123.0L480.1 121.7L479.0 55.1L477.2 56.4Z"/>
<path class="l" stroke-width="1.35" d="M575.5 81.3L577.0 83.0"/>
<path shape-rendering="crispEdges" fill="#a7aaab" d="M467.3 82.6L465.9 83.7L467.7 86.2L471.4 85.4L472.7 84.4L474.0 83.4L472.3 81.0L468.3 81.8Z"/>
<path shape-rendering="crispEdges" fill="#aeb1b2" d="M565.0 122.2L566.3 123.8L568.2 57.2L566.9 55.6Z"/>
<path class="l" stroke-width="1.35" d="M467.3 82.6L469.2 81.1"/>
<path shape-rendering="crispEdges" fill="#a7aaab" d="M571.0 84.2L572.3 85.8L572.9 86.6L576.1 86.0L573.0 82.3L569.9 82.9Z"/>
<path class="l" stroke-width="0.8" stroke-opacity="0.6" d="M563.6 120.6L565.0 122.2M480.1 121.7L482.0 120.4"/>
<path shape-rendering="crispEdges" fill="#777a7b" d="M476.7 124.4L478.3 123.0L477.2 56.4L475.5 57.7Z"/>
<path class="l" stroke-width="1.35" d="M577.0 83.0L578.3 84.7M465.4 84.1L467.3 82.6"/>
<path shape-rendering="crispEdges" fill="#adb0b1" d="M566.3 123.8L567.5 125.5L569.5 58.8L568.2 57.2Z"/>
<path class="l" stroke-width="0.8" stroke-opacity="0.6" d="M478.3 123.0L480.1 121.7"/>
<path shape-rendering="crispEdges" fill="#a7aaab" d="M465.4 84.1L463.7 85.7L462.1 87.2L462.0 87.3L467.7 86.2L465.9 83.7Z"/>
<path class="l" stroke-width="0.8" stroke-opacity="0.6" d="M565.0 122.2L566.3 123.8"/>
<path shape-rendering="crispEdges" fill="#737677" d="M475.1 125.8L476.7 124.4L475.5 57.7L473.8 59.1Z"/>
<path shape-rendering="crispEdges" fill="#a7aaab" d="M469.4 87.2L471.0 85.8L471.4 85.4L467.7 86.2L468.8 87.8Z"/>
<path class="l" stroke-width="1.35" d="M463.7 85.7L465.4 84.1"/>
<path class="l" stroke-width="0.8" stroke-opacity="0.6" d="M476.7 124.4L478.3 123.0"/>
<path class="l" stroke-width="1.35" d="M578.3 84.7L579.6 86.4"/>
<path shape-rendering="crispEdges" fill="#a7aaab" d="M580.8 88.1L579.6 86.4L578.9 85.4L576.1 86.0L579.2 89.7L581.6 89.2Z"/>
<path shape-rendering="crispEdges" fill="#acafb0" d="M567.5 125.5L568.7 127.1L570.7 60.4L569.5 58.8Z"/>
<path class="l" stroke-width="0.8" stroke-opacity="0.6" d="M566.3 123.8L567.5 125.5"/>
<path shape-rendering="crispEdges" fill="#6e7172" d="M473.5 127.2L475.1 125.8L473.8 59.1L472.2 60.5Z"/>
<path shape-rendering="crispEdges" fill="#a7aaab" d="M573.5 87.5L574.7 89.1L575.6 90.4L579.2 89.7L576.1 86.0L572.9 86.6Z"/>
<path class="l" stroke-width="0.8" stroke-opacity="0.6" d="M475.1 125.8L476.7 124.4"/>
<path class="l" stroke-width="1.35" d="M462.1 87.2L463.7 85.7"/>
<path shape-rendering="crispEdges" fill="#aaadae" d="M568.7 127.1L569.8 128.8L571.9 62.0L570.7 60.4Z"/>
<path shape-rendering="crispEdges" fill="#a7aaab" d="M460.9 88.5L462.9 91.4L465.9 90.8L466.4 90.2L467.8 88.7L468.8 87.8L467.7 86.2L462.0 87.3Z"/>
<path class="l" stroke-width="1.35" d="M579.6 86.4L580.8 88.1"/>
<path shape-rendering="crispEdges" fill="#6a6d6e" d="M472.1 128.7L473.5 127.2L472.2 60.5L470.7 61.9Z"/>
<path class="l" stroke-width="0.8" stroke-opacity="0.6" d="M567.5 125.5L568.7 127.1M473.5 127.2L475.1 125.8"/>
<path class="l" stroke-width="1.35" d="M460.5 88.8L462.1 87.2"/>
<path shape-rendering="crispEdges" fill="#a9acad" d="M569.8 128.8L570.8 130.4L573.0 63.6L571.9 62.0Z"/>
<path class="l" stroke-width="1.35" d="M580.8 88.1L582.0 89.8"/>
<path shape-rendering="crispEdges" fill="#656869" d="M470.7 130.1L472.1 128.7L470.7 61.9L469.3 63.3Z"/>
<path class="l" stroke-width="0.8" stroke-opacity="0.6" d="M568.7 127.1L569.8 128.8"/>
<path shape-rendering="crispEdges" fill="#a7aaab" d="M460.5 88.8L459.1 90.5L457.7 92.1L457.5 92.5L462.9 91.4L460.9 88.5ZM583.1 91.4L582.0 89.8L581.6 89.2L579.2 89.7L582.2 93.5L584.1 93.1Z"/>
<path class="l" stroke-width="0.8" stroke-opacity="0.6" d="M472.1 128.7L473.5 127.2"/>
<path shape-rendering="crispEdges" fill="#a7aaab" d="M575.8 90.7L576.9 92.4L577.8 94.0L578.0 94.4L582.2 93.5L579.2 89.7L575.6 90.4Z"/>
<path class="l" stroke-width="1.35" d="M459.1 90.5L460.5 88.8"/>
<path shape-rendering="crispEdges" fill="#a7aaab" d="M465.0 91.8L465.9 90.8L462.9 91.4L464.1 93.0ZM570.8 130.4L571.8 132.0L574.0 65.1L573.0 63.6Z"/>
<path shape-rendering="crispEdges" fill="#636667" d="M469.5 131.6L470.7 130.1L469.3 63.3L468.0 64.8Z"/>
<path class="l" stroke-width="1.35" d="M582.0 89.8L583.1 91.4"/>
<path class="l" stroke-width="0.8" stroke-opacity="0.6" d="M569.8 128.8L570.8 130.4M470.7 130.1L472.1 128.7"/>
<path shape-rendering="crispEdges" fill="#a7aaab" d="M400.0 94.8L397.8 94.7L398.4 95.6L401.8 94.9ZM396.1 94.6L392.1 94.6L389.5 94.8L390.9 97.1L398.4 95.6L397.8 94.7Z"/>
<path class="l" stroke-width="1.35" d="M457.7 92.1L459.1 90.5"/>
<path shape-rendering="crispEdges" fill="#a6a9aa" d="M571.8 132.0L572.8 133.7L575.0 66.7L574.0 65.1Z"/>
<path shape-rendering="crispEdges" fill="#636667" d="M468.3 133.2L469.5 131.6L468.0 64.8L466.8 66.2Z"/>
<path class="l" stroke-width="1.35" d="M583.1 91.4L584.1 93.1"/>
<path shape-rendering="crispEdges" fill="#a7aaab" d="M388.2 94.9L384.2 95.4L381.7 95.9L383.3 98.5L390.9 97.1L389.5 94.8Z"/>
<path class="l" stroke-width="0.8" stroke-opacity="0.6" d="M570.8 130.4L571.8 132.0"/>
<path shape-rendering="crispEdges" fill="#a7aaab" d="M456.5 93.8L456.3 94.0L458.2 96.6L461.9 95.9L462.6 94.9L463.8 93.3L464.1 93.0L462.9 91.4L457.5 92.5Z"/>
<path class="l" stroke-width="0.8" stroke-opacity="0.6" d="M469.5 131.6L470.7 130.1"/>
<path class="l" stroke-width="1.35" d="M388.2 94.9L392.1 94.6M392.1 94.6L396.1 94.6"/>
<path shape-rendering="crispEdges" fill="#a7aaab" d="M586.0 96.5L585.1 94.8L584.1 93.1L584.1 93.1L582.2 93.5L585.4 97.3L586.2 97.1Z"/>
<path class="l" stroke-width="1.35" d="M384.2 95.4L388.2 94.9M396.1 94.6L400.0 94.8M380.4 96.1L384.2 95.4"/>
<path shape-rendering="crispEdges" fill="#a7aaab" d="M403.9 95.1L401.8 94.9L398.4 95.6L400.1 98.3L402.3 98.4L404.4 98.7L408.3 97.9L406.7 95.4Z"/>
<path shape-rendering="crispEdges" fill="#636667" d="M467.2 134.7L468.3 133.2L466.8 66.2L465.6 67.7Z"/>
<path class="l" stroke-width="1.35" d="M456.5 93.8L457.7 92.1"/>
<path shape-rendering="crispEdges" fill="#a7aaab" d="M392.1 98.0L395.5 98.0L398.9 98.2L400.1 98.3L398.4 95.6L390.9 97.1L391.5 98.1ZM380.4 96.1L376.7 97.2L374.6 98.1L375.8 100.0L383.3 98.5L381.7 95.9Z"/>
<path shape-rendering="crispEdges" fill="#a4a7a8" d="M572.8 133.7L573.6 135.3L575.9 68.3L575.0 66.7Z"/>
<path class="l" stroke-width="1.35" d="M400.0 94.8L403.9 95.1"/>
<path shape-rendering="crispEdges" fill="#a7aaab" d="M411.5 96.1L407.7 95.5L406.7 95.4L408.3 97.9L414.7 96.6Z"/>
<path class="l" stroke-width="1.35" d="M584.1 93.1L585.1 94.8"/>
<path shape-rendering="crispEdges" fill="#a7aaab" d="M578.8 95.6L579.6 97.3L580.1 98.4L585.4 97.3L582.2 93.5L578.0 94.4ZM385.8 98.6L388.9 98.2L391.5 98.1L390.9 97.1L383.3 98.5L383.7 99.0Z"/>
<path class="l" stroke-width="0.8" stroke-opacity="0.6" d="M571.8 132.0L572.8 133.7M468.3 133.2L469.5 131.6"/>
<path class="l" stroke-width="1.35" d="M403.9 95.1L407.7 95.5M376.7 97.2L380.4 96.1M407.7 95.5L411.5 96.1"/>
<path shape-rendering="crispEdges" fill="#a7aaab" d="M455.3 95.5L454.3 97.1L451.4 96.6L449.7 96.6L450.7 98.1L458.2 96.6L456.3 94.0ZM373.4 98.5L370.5 100.1L368.7 101.4L375.8 100.0L374.6 98.1Z"/>
<path shape-rendering="crispEdges" fill="#636667" d="M466.2 136.3L467.2 134.7L465.6 67.7L464.6 69.3Z"/>
<path shape-rendering="crispEdges" fill="#a2a5a6" d="M573.6 135.3L574.4 136.9L576.7 69.9L575.9 68.3Z"/>
<path class="l" stroke-width="1.35" d="M455.3 95.5L456.5 93.8M373.4 98.5L376.7 97.2"/>
<path shape-rendering="crispEdges" fill="#a7aaab" d="M377.6 101.0L380.1 100.0L382.9 99.2L383.7 99.0L383.3 98.5L375.8 100.0L376.7 101.5ZM405.8 98.8L409.2 99.3L409.2 99.3L408.3 97.9L404.4 98.7Z"/>
<path class="l" stroke-width="0.8" stroke-opacity="0.6" d="M467.2 134.7L468.3 133.2"/>
<path class="l" stroke-width="1.35" d="M411.5 96.1L415.2 96.7"/>
<path class="l" stroke-width="0.8" stroke-opacity="0.6" d="M572.8 133.7L573.6 135.3"/>
<path class="l" stroke-width="1.35" d="M585.1 94.8L586.0 96.5"/>
<path shape-rendering="crispEdges" fill="#a7aaab" d="M415.2 96.7L414.7 96.6L408.3 97.9L409.2 99.3L412.6 99.9L416.0 100.6L416.2 100.7L418.3 100.2L416.1 96.9ZM460.5 98.1L461.5 96.5L461.9 95.9L458.2 96.6L459.9 99.2ZM586.8 98.2L586.2 97.1L585.4 97.3L587.5 99.9ZM422.2 98.2L418.8 97.5L416.1 96.9L418.3 100.2L424.9 98.9ZM446.3 96.6L441.6 97.1L443.3 99.6L450.7 98.1L449.7 96.6Z"/>
<path shape-rendering="crispEdges" fill="#c4c7c8" d="M391.8 139.5L394.6 139.4L390.4 72.2L387.6 72.4Z"/>
<path shape-rendering="crispEdges" fill="#cbcecf" d="M394.6 139.4L397.5 139.3L393.4 72.2L390.4 72.2Z"/>
<path shape-rendering="crispEdges" fill="#bdc0c1" d="M389.3 139.9L391.8 139.5L387.6 72.4L384.9 72.7Z"/>
<path class="l" stroke-width="1.35" d="M415.2 96.7L418.8 97.5M370.5 100.1L373.4 98.5"/>
<path shape-rendering="crispEdges" fill="#d1d4d5" d="M397.5 139.3L400.5 139.5L396.5 72.3L393.4 72.2Z"/>
<path shape-rendering="crispEdges" fill="#636667" d="M465.2 137.9L466.2 136.3L464.6 69.3L463.6 70.8Z"/>
<path shape-rendering="crispEdges" fill="#b5b8b9" d="M386.9 140.3L389.3 139.9L384.9 72.7L382.5 73.2Z"/>
<path shape-rendering="crispEdges" fill="#a0a3a4" d="M574.4 136.9L575.2 138.6L577.5 71.5L576.7 69.9Z"/>
<path class="l" stroke-width="1.35" d="M454.3 97.1L455.3 95.5"/>
<path shape-rendering="crispEdges" fill="#d4d7d8" d="M400.5 139.5L403.6 139.7L399.8 72.6L396.5 72.3Z"/>
<path class="l" stroke-width="1.35" d="M446.3 96.6L451.4 96.6M441.2 97.1L446.3 96.6"/>
<path class="l" stroke-width="0.8" stroke-opacity="0.6" d="M466.2 136.3L467.2 134.7"/>
<path shape-rendering="crispEdges" fill="#adb0b1" d="M384.8 141.0L386.9 140.3L382.5 73.2L380.3 73.8Z"/>
<path shape-rendering="crispEdges" fill="#a7aaab" d="M441.2 97.1L436.3 98.2L434.3 98.9L435.8 101.1L443.3 99.6L441.6 97.1Z"/>
<path class="l" stroke-width="0.8" stroke-opacity="0.6" d="M573.6 135.3L574.4 136.9"/>
<path class="l" stroke-width="1.35" d="M418.8 97.5L422.2 98.2"/>
<path shape-rendering="crispEdges" fill="#d5d8d9" d="M403.6 139.7L406.8 140.1L403.1 72.9L399.8 72.6Z"/>
<path class="l" stroke-width="1.35" d="M451.4 96.6L454.3 97.1M586.0 96.5L586.8 98.2"/>
<path shape-rendering="crispEdges" fill="#a7aaab" d="M368.3 101.7L370.5 105.4L372.2 105.0L372.2 105.0L373.6 103.5L375.4 102.2L376.7 101.5L375.8 100.0L368.7 101.4ZM453.5 100.6L455.9 101.5L459.1 100.8L459.6 99.8L459.9 99.2L458.2 96.6L450.7 98.1L452.3 100.4Z"/>
<path class="l" stroke-width="1.35" d="M436.3 98.2L441.2 97.1"/>
<path shape-rendering="crispEdges" fill="#9da0a1" d="M382.9 141.8L384.8 141.0L380.3 73.8L378.3 74.6Z"/>
<path shape-rendering="crispEdges" fill="#a7aaab" d="M446.6 100.0L450.2 100.1L452.3 100.4L450.7 98.1L443.3 99.6L443.8 100.3ZM587.5 100.0L587.5 99.9L585.4 97.3L580.1 98.4L580.4 98.9L581.1 100.6L581.8 102.2L581.9 102.5L588.1 101.2Z"/>
<path shape-rendering="crispEdges" fill="#d4d7d8" d="M406.8 140.1L410.0 140.6L406.4 73.4L403.1 72.9Z"/>
<path class="l" stroke-width="1.35" d="M368.0 101.9L370.5 100.1"/>
<path shape-rendering="crispEdges" fill="#a7aaab" d="M419.0 101.3L418.3 100.2L416.2 100.7Z"/>
<path shape-rendering="crispEdges" fill="#636667" d="M464.4 139.5L465.2 137.9L463.6 70.8L462.7 72.4Z"/>
<path shape-rendering="crispEdges" fill="#a7aaab" d="M280.0 110.2L279.2 110.3L279.2 110.3L280.3 110.1Z"/>
<path class="l" stroke-width="1.35" d="M422.2 98.2L425.5 99.1"/>
<path shape-rendering="crispEdges" fill="#9da0a1" d="M575.2 138.6L575.9 140.2L578.2 73.0L577.5 71.5Z"/>
<path class="l" stroke-width="0.8" stroke-opacity="0.6" d="M391.8 139.5L394.6 139.4M394.6 139.4L397.5 139.3M389.3 139.9L391.8 139.5"/>
<path shape-rendering="crispEdges" fill="#a7aaab" d="M276.2 110.5L272.4 111.0L271.1 111.2L271.4 111.9L279.2 110.3L279.2 110.3Z"/>
<path shape-rendering="crispEdges" fill="#8b8e8f" d="M381.2 142.8L382.9 141.8L378.3 74.6L376.5 75.5Z"/>
<path shape-rendering="crispEdges" fill="#a7aaab" d="M425.5 99.1L424.9 98.9L418.3 100.2L419.0 101.3L419.2 101.4L422.3 102.2L425.2 103.0L425.7 103.1L428.3 102.6L426.1 99.3Z"/>
<path shape-rendering="crispEdges" fill="#d3d6d7" d="M410.0 140.6L413.1 141.2L409.6 74.0L406.4 73.4Z"/>
<path shape-rendering="crispEdges" fill="#a7aaab" d="M432.0 99.8L430.6 100.6L428.6 100.0L426.1 99.3L428.3 102.6L435.8 101.1L434.3 98.9Z"/>
<path class="l" stroke-width="0.8" stroke-opacity="0.6" d="M397.5 139.3L400.5 139.5M465.2 137.9L466.2 136.3M386.9 140.3L389.3 139.9M574.4 136.9L575.2 138.6"/>
<path shape-rendering="crispEdges" fill="#a7aaab" d="M439.4 101.2L442.9 100.4L443.8 100.3L443.3 99.6L435.8 101.1L436.5 102.2Z"/>
<path class="l" stroke-width="1.35" d="M432.0 99.8L436.3 98.2"/>
<path class="l" stroke-width="0.8" stroke-opacity="0.6" d="M400.5 139.5L403.6 139.7"/>
<path shape-rendering="crispEdges" fill="#a7aaab" d="M268.6 111.6L264.8 112.2L263.1 112.5L263.6 113.4L271.4 111.9L271.1 111.2Z"/>
<path class="l" stroke-width="1.35" d="M586.8 98.2L587.5 100.0"/>
<path class="l" stroke-width="0.8" stroke-opacity="0.6" d="M384.8 141.0L386.9 140.3"/>
<path class="l" stroke-width="1.35" d="M425.5 99.1L428.6 100.0"/>
<path shape-rendering="crispEdges" fill="#a7aaab" d="M368.0 101.9L366.1 103.9L364.8 106.1L364.7 106.5L370.5 105.4L368.3 101.7Z"/>
<path shape-rendering="crispEdges" fill="#d1d4d5" d="M413.1 141.2L416.3 141.8L412.9 74.6L409.6 74.0Z"/>
<path shape-rendering="crispEdges" fill="#787b7c" d="M379.8 143.8L381.2 142.8L376.5 75.5L375.0 76.5Z"/>
<path class="l" stroke-width="0.8" stroke-opacity="0.6" d="M403.6 139.7L406.8 140.1"/>
<path shape-rendering="crispEdges" fill="#a7aaab" d="M261.1 112.9L257.5 113.7L255.4 114.2L255.7 114.9L263.6 113.4L263.1 112.5Z"/>
<path shape-rendering="crispEdges" fill="#636667" d="M463.6 141.2L464.4 139.5L462.7 72.4L461.9 74.0Z"/>
<path class="l" stroke-width="1.35" d="M366.1 103.9L368.0 101.9"/>
<path class="l" stroke-width="0.8" stroke-opacity="0.6" d="M382.9 141.8L384.8 141.0"/>
<path shape-rendering="crispEdges" fill="#a7aaab" d="M302.7 109.6L299.0 109.5L295.9 109.4L296.8 111.2L304.6 109.7L304.6 109.7ZM295.3 109.4L291.5 109.5L287.7 109.6L287.4 109.7L289.0 112.8L296.8 111.2L295.9 109.4ZM304.6 109.7L304.6 109.7L304.8 109.7Z"/>
<path shape-rendering="crispEdges" fill="#9a9d9e" d="M575.9 140.2L576.5 141.8L578.9 74.6L578.2 73.0Z"/>
<path shape-rendering="crispEdges" fill="#a7aaab" d="M283.9 109.9L280.3 110.1L279.2 110.3L280.9 113.6L283.9 113.3L286.8 113.2L289.0 112.8L287.4 109.7Z"/>
<path class="l" stroke-width="0.8" stroke-opacity="0.6" d="M406.8 140.1L410.0 140.6"/>
<path class="l" stroke-width="1.35" d="M430.6 100.6L432.0 99.8M428.6 100.0L430.6 100.6"/>
<path shape-rendering="crispEdges" fill="#cfd2d3" d="M416.3 141.8L419.3 142.6L416.0 75.3L412.9 74.6Z"/>
<path shape-rendering="crispEdges" fill="#a7aaab" d="M273.2 114.4L276.8 114.0L280.4 113.6L280.9 113.6L279.2 110.3L271.4 111.9L272.7 114.5Z"/>
<path class="l" stroke-width="0.8" stroke-opacity="0.6" d="M464.4 139.5L465.2 137.9"/>
<path class="l" stroke-width="1.35" d="M276.2 110.5L280.0 110.2M280.0 110.2L283.9 109.9M272.4 111.0L276.2 110.5"/>
<path shape-rendering="crispEdges" fill="#a7aaab" d="M456.2 101.6L458.1 103.1L458.8 101.4L459.1 100.8L455.9 101.5Z"/>
<path class="l" stroke-width="1.35" d="M283.9 109.9L287.7 109.6"/>
<path class="l" stroke-width="0.8" stroke-opacity="0.6" d="M575.2 138.6L575.9 140.2"/>
<path shape-rendering="crispEdges" fill="#cdd0d1" d="M448.1 141.4L450.7 141.4L448.6 74.2L445.8 74.2Z"/>
<path class="l" stroke-width="1.35" d="M268.6 111.6L272.4 111.0"/>
<path shape-rendering="crispEdges" fill="#636667" d="M378.7 145.0L379.8 143.8L375.0 76.5L373.9 77.7Z"/>
<path shape-rendering="crispEdges" fill="#a7aaab" d="M253.9 114.6L250.4 115.6L247.8 116.4L247.8 116.5L255.7 114.9L255.4 114.2Z"/>
<path shape-rendering="crispEdges" fill="#bec1c2" d="M445.3 141.7L448.1 141.4L445.8 74.2L442.9 74.4Z"/>
<path class="l" stroke-width="1.35" d="M287.7 109.6L291.5 109.5"/>
<path class="l" stroke-width="0.8" stroke-opacity="0.6" d="M381.2 142.8L382.9 141.8"/>
<path class="l" stroke-width="1.35" d="M264.8 112.2L268.6 111.6"/>
<path class="l" stroke-width="0.8" stroke-opacity="0.6" d="M410.0 140.6L413.1 141.2"/>
<path shape-rendering="crispEdges" fill="#a7aaab" d="M266.2 115.5L269.7 114.9L272.7 114.5L271.4 111.9L263.6 113.4L264.7 115.8Z"/>
<path shape-rendering="crispEdges" fill="#d4d7d8" d="M450.7 141.4L452.8 141.7L450.8 74.5L448.6 74.2Z"/>
<path shape-rendering="crispEdges" fill="#a7aaab" d="M371.3 106.5L372.2 105.0L370.5 105.4L371.3 106.7Z"/>
<path class="l" stroke-width="1.35" d="M587.5 100.0L588.2 101.7M291.5 109.5L295.3 109.4"/>
<path shape-rendering="crispEdges" fill="#b4b7b8" d="M442.6 142.3L445.3 141.7L442.9 74.4L440.2 75.0Z"/>
<path class="l" stroke-width="1.35" d="M261.1 112.9L264.8 112.2"/>
<path shape-rendering="crispEdges" fill="#a7aaab" d="M430.3 104.6L432.5 105.5L433.9 103.7L436.3 102.3L436.5 102.2L435.8 101.1L428.3 102.6L429.5 104.3Z"/>
<path shape-rendering="crispEdges" fill="#cdd0d1" d="M419.3 142.6L422.2 143.3L419.0 76.1L416.0 75.3Z"/>
<path shape-rendering="crispEdges" fill="#a7aaab" d="M427.9 103.8L429.5 104.3L428.3 102.6L425.7 103.1ZM247.2 116.6L247.8 116.5L247.8 116.4Z"/>
<path class="l" stroke-width="1.35" d="M295.3 109.4L299.0 109.5"/>
<path shape-rendering="crispEdges" fill="#c8cbcc" d="M452.8 141.7L454.4 142.4L452.4 75.1L450.8 74.5Z"/>
<path class="l" stroke-width="1.35" d="M257.5 113.7L261.1 112.9"/>
<path shape-rendering="crispEdges" fill="#a7aaab" d="M259.5 116.9L262.8 116.2L264.7 115.8L263.6 113.4L255.7 114.9L256.9 117.5Z"/>
<path class="l" stroke-width="0.8" stroke-opacity="0.6" d="M413.1 141.2L416.3 141.8"/>
<path shape-rendering="crispEdges" fill="#636667" d="M462.8 143.1L463.6 141.2L461.9 74.0L461.1 75.8Z"/>
<path class="l" stroke-width="0.8" stroke-opacity="0.6" d="M379.8 143.8L381.2 142.8"/>
<path shape-rendering="crispEdges" fill="#a3a6a7" d="M440.4 143.1L442.6 142.3L440.2 75.0L437.9 75.9Z"/>
<path class="l" stroke-width="1.35" d="M299.0 109.5L302.7 109.6"/>
<path shape-rendering="crispEdges" fill="#636667" d="M378.0 146.2L378.7 145.0L373.9 77.7L373.2 78.8Z"/>
<path shape-rendering="crispEdges" fill="#979a9b" d="M576.5 141.8L577.0 143.5L579.4 76.2L578.9 74.6Z"/>
<path shape-rendering="crispEdges" fill="#a7aaab" d="M291.1 113.0L294.6 113.0L297.7 113.0L296.8 111.2L289.0 112.8L289.2 113.1Z"/>
<path class="l" stroke-width="1.35" d="M253.9 114.6L257.5 113.7"/>
<path shape-rendering="crispEdges" fill="#a7aaab" d="M298.1 113.0L301.5 113.1L304.8 113.2L306.5 113.4L304.6 109.7L296.8 111.2L297.7 113.0ZM287.5 113.1L289.2 113.1L289.0 112.8L286.8 113.2Z"/>
<path class="l" stroke-width="1.35" d="M364.8 106.1L366.1 103.9"/>
<path shape-rendering="crispEdges" fill="#a7aaab" d="M589.4 105.2L588.9 103.4L588.2 101.7L588.1 101.2L581.9 102.5L582.4 103.9L582.4 104.0L584.4 106.5L589.5 105.4Z"/>
<path class="l" stroke-width="0.8" stroke-opacity="0.6" d="M463.6 141.2L464.4 139.5"/>
<path shape-rendering="crispEdges" fill="#cccfd0" d="M422.2 143.3L424.9 144.1L421.8 76.8L419.0 76.1Z"/>
<path class="l" stroke-width="1.35" d="M302.7 109.6L306.3 109.7"/>
<path class="l" stroke-width="0.8" stroke-opacity="0.6" d="M575.9 140.2L576.5 141.8"/>
<path shape-rendering="crispEdges" fill="#a7aaab" d="M313.3 110.3L309.9 110.0L306.3 109.7L304.8 109.7L304.6 109.7L306.5 113.4L307.6 113.4L314.4 112.1L313.5 110.3Z"/>
<path class="l" stroke-width="0.8" stroke-opacity="0.6" d="M416.3 141.8L419.3 142.6"/>
<path class="l" stroke-width="1.35" d="M250.4 115.6L253.9 114.6"/>
<path shape-rendering="crispEdges" fill="#b9bcbd" d="M454.4 142.4L456.2 143.9L454.3 76.6L452.4 75.1Z"/>
<path shape-rendering="crispEdges" fill="#a7aaab" d="M250.2 119.6L253.2 118.6L256.3 117.7L256.9 117.5L255.7 114.9L247.8 116.5L249.4 119.8ZM316.8 110.7L313.5 110.3L314.4 112.1L319.6 111.1Z"/>
<path shape-rendering="crispEdges" fill="#858889" d="M438.9 144.1L440.4 143.1L437.9 75.9L436.3 76.8Z"/>
<path class="l" stroke-width="1.35" d="M306.3 109.7L309.9 110.0"/>
<path class="l" stroke-width="0.8" stroke-opacity="0.6" d="M448.1 141.4L450.7 141.4"/>
<path class="l" stroke-width="1.35" d="M588.2 101.7L588.9 103.4"/>
<path class="l" stroke-width="0.8" stroke-opacity="0.6" d="M378.7 145.0L379.8 143.8M445.3 141.7L448.1 141.4"/>
<path shape-rendering="crispEdges" fill="#636667" d="M377.8 147.4L378.0 146.2L373.2 78.8L373.0 80.0Z"/>
<path class="l" stroke-width="0.8" stroke-opacity="0.6" d="M450.7 141.4L452.8 141.7"/>
<path shape-rendering="crispEdges" fill="#cacdce" d="M424.9 144.1L427.4 145.0L424.4 77.6L421.8 76.8Z"/>
<path class="l" stroke-width="0.8" stroke-opacity="0.6" d="M442.6 142.3L445.3 141.7"/>
<path class="l" stroke-width="1.35" d="M247.1 116.6L250.4 115.6"/>
<path shape-rendering="crispEdges" fill="#a7aaab" d="M364.3 108.3L364.5 109.6L365.2 110.8L371.2 109.6L371.0 108.1L371.3 106.7L370.5 105.4L364.7 106.5Z"/>
<path class="l" stroke-width="1.35" d="M309.9 110.0L313.3 110.3"/>
<path class="l" stroke-width="0.8" stroke-opacity="0.6" d="M419.3 142.6L422.2 143.3"/>
<path shape-rendering="crispEdges" fill="#949798" d="M577.0 143.5L577.5 145.2L580.0 77.9L579.4 76.2Z"/>
<path class="l" stroke-width="0.8" stroke-opacity="0.6" d="M452.8 141.7L454.4 142.4"/>
<path shape-rendering="crispEdges" fill="#636667" d="M462.1 145.0L462.8 143.1L461.1 75.8L460.3 77.7Z"/>
<path class="l" stroke-width="0.8" stroke-opacity="0.6" d="M462.8 143.1L463.6 141.2M440.4 143.1L442.6 142.3M378.0 146.2L378.7 145.0M576.5 141.8L577.0 143.5"/>
<path shape-rendering="crispEdges" fill="#a7aaab" d="M247.1 116.6L243.8 117.8L240.7 119.1L240.4 119.2L241.7 122.0L245.8 121.2L247.3 120.6L249.4 119.8L247.8 116.5L247.2 116.6Z"/>
<path shape-rendering="crispEdges" fill="#c9cccd" d="M427.4 145.0L429.7 145.8L426.8 78.4L424.4 77.6Z"/>
<path class="l" stroke-width="1.35" d="M243.8 117.8L247.1 116.6M313.3 110.3L316.8 110.7"/>
<path shape-rendering="crispEdges" fill="#c0c3c4" d="M282.0 155.6L285.4 155.3L277.1 87.6L273.7 87.9Z"/>
<path class="l" stroke-width="1.35" d="M377.8 147.4L373.0 80.0"/>
<path shape-rendering="crispEdges" fill="#c3c6c7" d="M285.4 155.3L288.7 155.0L280.6 87.3L277.1 87.6Z"/>
<path shape-rendering="crispEdges" fill="#bec1c2" d="M278.7 156.0L282.0 155.6L273.7 87.9L270.2 88.3Z"/>
<path shape-rendering="crispEdges" fill="#636667" d="M437.3 146.1L438.9 144.1L436.3 76.8L434.7 78.7Z"/>
<path shape-rendering="crispEdges" fill="#a7aaab" d="M582.9 105.6L583.2 106.7L584.4 106.5L582.4 104.0Z"/>
<path shape-rendering="crispEdges" fill="#c6c9ca" d="M288.7 155.0L292.1 154.8L284.1 87.1L280.6 87.3Z"/>
<path shape-rendering="crispEdges" fill="#bbbebf" d="M275.4 156.5L278.7 156.0L270.2 88.3L266.8 88.8Z"/>
<path shape-rendering="crispEdges" fill="#b9bcbd" d="M456.2 143.9L458.0 145.5L456.1 78.2L454.3 76.6Z"/>
<path class="l" stroke-width="1.35" d="M364.3 108.3L364.8 106.1"/>
<path class="l" stroke-width="0.8" stroke-opacity="0.6" d="M422.2 143.3L424.9 144.1"/>
<path shape-rendering="crispEdges" fill="#c9cccd" d="M292.1 154.8L295.4 154.7L287.5 87.0L284.1 87.1Z"/>
<path shape-rendering="crispEdges" fill="#919495" d="M371.2 109.8L371.0 108.1L368.9 80.1L369.1 81.8Z"/>
<path shape-rendering="crispEdges" fill="#b9bcbd" d="M272.2 157.1L275.4 156.5L266.8 88.8L263.4 89.4Z"/>
<path shape-rendering="crispEdges" fill="#919495" d="M367.0 141.7L366.7 139.4L364.3 108.3L364.6 110.6Z"/>
<path shape-rendering="crispEdges" fill="#a7aaab" d="M308.1 113.5L311.4 113.8L314.6 114.1L315.6 114.3L314.4 112.1L307.6 113.4Z"/>
<path shape-rendering="crispEdges" fill="#cccfd0" d="M295.4 154.7L298.7 154.6L291.0 87.0L287.5 87.0Z"/>
<path class="l" stroke-width="1.35" d="M588.9 103.4L589.4 105.2"/>
<path shape-rendering="crispEdges" fill="#b6b9ba" d="M269.0 157.7L272.2 157.1L263.4 89.4L260.2 90.0Z"/>
<path class="l" stroke-width="0.8" stroke-opacity="0.6" d="M454.4 142.4L456.2 143.9"/>
<path class="l" stroke-width="1.35" d="M316.8 110.7L320.1 111.2"/>
<path class="l" stroke-width="0.8" stroke-opacity="0.6" d="M438.9 144.1L440.4 143.1"/>
<path shape-rendering="crispEdges" fill="#cfd2d3" d="M298.7 154.6L301.9 154.6L294.3 87.0L291.0 87.0Z"/>
<path class="l" stroke-width="1.35" d="M240.7 119.1L243.8 117.8"/>
<path shape-rendering="crispEdges" fill="#a7aaab" d="M320.1 111.2L319.6 111.1L314.4 112.1L315.6 114.3L317.7 114.6L320.8 115.1L321.2 115.1L324.3 114.5L322.7 111.6Z"/>
<path shape-rendering="crispEdges" fill="#b4b7b8" d="M266.0 158.4L269.0 157.7L260.2 90.0L257.0 90.7Z"/>
<path shape-rendering="crispEdges" fill="#c8cbcc" d="M429.7 145.8L432.7 146.9L429.9 79.5L426.8 78.4Z"/>
<path class="l" stroke-width="0.8" stroke-opacity="0.6" d="M377.8 147.4L378.0 146.2"/>
<path shape-rendering="crispEdges" fill="#909394" d="M577.5 145.2L578.0 146.9L580.4 79.5L580.0 77.9Z"/>
<path shape-rendering="crispEdges" fill="#d1d4d5" d="M301.9 154.6L305.1 154.7L297.6 87.1L294.3 87.0Z"/>
<path class="l" stroke-width="0.8" stroke-opacity="0.6" d="M424.9 144.1L427.4 145.0"/>
<path shape-rendering="crispEdges" fill="#b1b4b5" d="M263.0 159.2L266.0 158.4L257.0 90.7L253.9 91.4Z"/>
<path shape-rendering="crispEdges" fill="#a7aaab" d="M329.9 112.9L326.7 112.3L323.4 111.7L322.7 111.6L324.3 114.5L331.1 113.2Z"/>
<path class="l" stroke-width="1.35" d="M371.0 108.1L368.9 80.1"/>
<path shape-rendering="crispEdges" fill="#a7aaab" d="M364.6 110.6L364.7 110.9L365.2 110.8L364.5 109.6ZM237.8 120.5L235.0 122.0L233.5 123.0L233.8 123.6L241.7 122.0L240.4 119.2Z"/>
<path class="l" stroke-width="1.35" d="M320.1 111.2L323.4 111.7M366.7 139.4L364.3 108.3"/>
<path shape-rendering="crispEdges" fill="#636667" d="M461.3 146.9L462.1 145.0L460.3 77.7L459.5 79.6Z"/>
<path shape-rendering="crispEdges" fill="#d3d6d7" d="M305.1 154.7L308.3 154.9L300.9 87.2L297.6 87.1Z"/>
<path class="l" stroke-width="0.8" stroke-opacity="0.6" d="M577.0 143.5L577.5 145.2M462.1 145.0L462.8 143.1"/>
<path shape-rendering="crispEdges" fill="#adb0b1" d="M260.2 160.0L263.0 159.2L253.9 91.4L251.0 92.2Z"/>
<path shape-rendering="crispEdges" fill="#b9bcbd" d="M458.0 145.5L459.9 147.1L458.0 79.7L456.1 78.2Z"/>
<path class="l" stroke-width="1.35" d="M237.8 120.5L240.7 119.1"/>
<path shape-rendering="crispEdges" fill="#636667" d="M435.8 148.1L437.3 146.1L434.7 78.7L433.1 80.7Z"/>
<path shape-rendering="crispEdges" fill="#a3a6a7" d="M372.0 111.5L371.2 109.8L369.1 81.8L369.9 83.4Z"/>
<path shape-rendering="crispEdges" fill="#d4d7d8" d="M308.3 154.9L311.3 155.1L304.1 87.5L300.9 87.2Z"/>
<path shape-rendering="crispEdges" fill="#a7aaab" d="M590.3 108.8L589.9 107.0L589.5 105.4L584.4 106.5L587.6 110.4L590.5 109.8Z"/>
<path class="l" stroke-width="0.8" stroke-opacity="0.6" d="M427.4 145.0L429.7 145.8M282.0 155.6L285.4 155.3M285.4 155.3L288.7 155.0M278.7 156.0L282.0 155.6M437.3 146.1L438.9 144.1M288.7 155.0L292.1 154.8M275.4 156.5L278.7 156.0"/>
<path class="l" stroke-width="1.35" d="M323.4 111.7L326.7 112.3"/>
<path class="l" stroke-width="0.8" stroke-opacity="0.6" d="M456.2 143.9L458.0 145.5"/>
<path class="l" stroke-width="1.35" d="M589.4 105.2L589.9 107.0"/>
<path shape-rendering="crispEdges" fill="#c8cbcc" d="M432.7 146.9L435.8 148.1L433.1 80.7L429.9 79.5Z"/>
<path shape-rendering="crispEdges" fill="#a8abac" d="M257.5 161.0L260.2 160.0L251.0 92.2L248.2 93.1Z"/>
<path class="l" stroke-width="0.8" stroke-opacity="0.6" d="M292.1 154.8L295.4 154.7"/>
<path shape-rendering="crispEdges" fill="#a7aaab" d="M244.6 121.7L245.8 121.2L241.7 122.0L242.1 122.9Z"/>
<path class="l" stroke-width="1.35" d="M371.2 109.8L371.0 108.1"/>
<path class="l" stroke-width="0.8" stroke-opacity="0.6" d="M272.2 157.1L275.4 156.5"/>
<path class="l" stroke-width="1.35" d="M367.0 141.7L366.7 139.4M364.6 110.6L364.3 108.3"/>
<path shape-rendering="crispEdges" fill="#d5d8d9" d="M311.3 155.1L314.4 155.4L307.2 87.7L304.1 87.5Z"/>
<path shape-rendering="crispEdges" fill="#bec1c2" d="M459.9 147.1L461.3 146.9L459.5 79.6L458.0 79.7Z"/>
<path class="l" stroke-width="0.8" stroke-opacity="0.6" d="M295.4 154.7L298.7 154.6"/>
<path shape-rendering="crispEdges" fill="#a2a5a6" d="M368.0 143.9L367.0 141.7L364.6 110.6L365.6 112.7Z"/>
<path shape-rendering="crispEdges" fill="#a7aaab" d="M232.5 123.6L232.0 123.9L233.8 123.6L233.5 123.0Z"/>
<path class="l" stroke-width="0.8" stroke-opacity="0.6" d="M269.0 157.7L272.2 157.1"/>
<path shape-rendering="crispEdges" fill="#8d9091" d="M578.0 146.9L578.3 148.6L580.8 81.1L580.4 79.5Z"/>
<path class="l" stroke-width="0.8" stroke-opacity="0.6" d="M298.7 154.6L301.9 154.6"/>
<path class="l" stroke-width="1.35" d="M235.0 122.0L237.8 120.5"/>
<path shape-rendering="crispEdges" fill="#a1a4a5" d="M254.9 161.9L257.5 161.0L248.2 93.1L245.5 94.1Z"/>
<path class="l" stroke-width="0.8" stroke-opacity="0.6" d="M266.0 158.4L269.0 157.7"/>
<path shape-rendering="crispEdges" fill="#d4d7d8" d="M314.4 155.4L317.4 155.8L310.3 88.1L307.2 87.7Z"/>
<path class="l" stroke-width="1.35" d="M326.7 112.3L329.9 112.9"/>
<path class="l" stroke-width="0.8" stroke-opacity="0.6" d="M429.7 145.8L432.7 146.9"/>
<path shape-rendering="crispEdges" fill="#a7aaab" d="M323.9 115.6L325.0 115.8L324.3 114.5L321.2 115.1Z"/>
<path class="l" stroke-width="0.8" stroke-opacity="0.6" d="M577.5 145.2L578.0 146.9M301.9 154.6L305.1 154.7"/>
<path shape-rendering="crispEdges" fill="#a7aaab" d="M583.3 107.3L583.7 109.0L584.0 110.7L584.1 111.1L587.6 110.4L584.4 106.5L583.2 106.7Z"/>
<path class="l" stroke-width="1.35" d="M435.8 148.1L433.1 80.7"/>
<path shape-rendering="crispEdges" fill="#a7aaab" d="M373.2 113.2L372.0 111.5L371.2 109.8L371.2 109.6L365.2 110.8L367.5 114.7L373.5 113.5Z"/>
<path class="l" stroke-width="0.8" stroke-opacity="0.6" d="M263.0 159.2L266.0 158.4"/>
<path class="l" stroke-width="1.35" d="M459.9 147.1L458.0 79.7M461.3 146.9L459.5 79.6"/>
<path class="l" stroke-width="0.8" stroke-opacity="0.6" d="M461.3 146.9L462.1 145.0"/>
<path shape-rendering="crispEdges" fill="#9a9d9e" d="M252.5 163.0L254.9 161.9L245.5 94.1L243.0 95.1Z"/>
<path class="l" stroke-width="0.8" stroke-opacity="0.6" d="M305.1 154.7L308.3 154.9"/>
<path shape-rendering="crispEdges" fill="#d4d7d8" d="M317.4 155.8L320.3 156.2L313.4 88.5L310.3 88.1Z"/>
<path shape-rendering="crispEdges" fill="#adb0b1" d="M373.2 113.2L372.0 111.5L369.9 83.4L371.2 85.1Z"/>
<path shape-rendering="crispEdges" fill="#a7aaab" d="M331.1 113.2L324.3 114.5L325.0 115.8L326.9 116.2L329.9 116.9L332.0 117.4L334.3 116.9L332.3 113.4ZM235.7 126.9L237.6 125.5L239.8 124.2L242.1 122.9L242.1 122.9L241.7 122.0L233.8 123.6L235.4 127.2ZM365.6 112.7L367.0 114.8L367.0 114.8L367.5 114.7L365.2 110.8L364.7 110.9Z"/>
<path class="l" stroke-width="0.8" stroke-opacity="0.6" d="M260.2 160.0L263.0 159.2M458.0 145.5L459.9 147.1"/>
<path class="l" stroke-width="1.35" d="M329.9 112.9L333.0 113.6"/>
<path class="l" stroke-width="0.8" stroke-opacity="0.6" d="M435.8 148.1L437.3 146.1"/>
<path class="l" stroke-width="1.35" d="M589.9 107.0L590.3 108.8M372.0 111.5L371.2 109.8"/>
<path class="l" stroke-width="0.8" stroke-opacity="0.6" d="M308.3 154.9L311.3 155.1"/>
<path class="l" stroke-width="1.35" d="M232.5 123.6L235.0 122.0"/>
<path shape-rendering="crispEdges" fill="#a7aaab" d="M339.2 115.1L336.1 114.3L333.0 113.6L332.3 113.4L334.3 116.9L340.9 115.6Z"/>
<path class="l" stroke-width="0.8" stroke-opacity="0.6" d="M432.7 146.9L435.8 148.1"/>
<path shape-rendering="crispEdges" fill="#919495" d="M250.3 164.1L252.5 163.0L243.0 95.1L240.7 96.1Z"/>
<path shape-rendering="crispEdges" fill="#d2d5d6" d="M320.3 156.2L323.3 156.7L316.4 89.0L313.4 88.5Z"/>
<path class="l" stroke-width="0.8" stroke-opacity="0.6" d="M257.5 161.0L260.2 160.0"/>
<path shape-rendering="crispEdges" fill="#898c8d" d="M578.3 148.6L578.6 150.3L581.1 82.8L580.8 81.1Z"/>
<path class="l" stroke-width="0.8" stroke-opacity="0.6" d="M311.3 155.1L314.4 155.4M459.9 147.1L461.3 146.9"/>
<path class="l" stroke-width="1.35" d="M368.0 143.9L367.0 141.7M365.6 112.7L364.6 110.6"/>
<path shape-rendering="crispEdges" fill="#adb0b1" d="M369.4 146.0L368.0 143.9L365.6 112.7L367.0 114.8Z"/>
<path class="l" stroke-width="0.8" stroke-opacity="0.6" d="M578.0 146.9L578.3 148.6"/>
<path class="l" stroke-width="1.35" d="M333.0 113.6L336.1 114.3"/>
<path class="l" stroke-width="0.8" stroke-opacity="0.6" d="M254.9 161.9L257.5 161.0"/>
<path shape-rendering="crispEdges" fill="#d1d4d5" d="M323.3 156.7L326.1 157.2L319.4 89.5L316.4 89.0Z"/>
<path class="l" stroke-width="0.8" stroke-opacity="0.6" d="M314.4 155.4L317.4 155.8"/>
<path shape-rendering="crispEdges" fill="#888b8c" d="M248.3 165.2L250.3 164.1L240.7 96.1L238.6 97.2Z"/>
<path class="l" stroke-width="1.35" d="M230.2 125.3L232.5 123.6"/>
<path shape-rendering="crispEdges" fill="#b3b6b7" d="M374.7 114.9L373.2 113.2L371.2 85.1L372.7 86.8Z"/>
<path shape-rendering="crispEdges" fill="#a7aaab" d="M230.2 125.3L228.1 127.1L227.1 128.2L227.5 129.2L234.8 127.8L235.4 127.2L233.8 123.6L232.0 123.9Z"/>
<path class="l" stroke-width="0.8" stroke-opacity="0.6" d="M252.5 163.0L254.9 161.9"/>
<path shape-rendering="crispEdges" fill="#a7aaab" d="M590.9 112.4L590.7 110.6L590.5 109.8L587.6 110.4L590.8 114.3L591.1 114.2Z"/>
<path class="l" stroke-width="0.8" stroke-opacity="0.6" d="M317.4 155.8L320.3 156.2"/>
<path class="l" stroke-width="1.35" d="M373.2 113.2L372.0 111.5M590.3 108.8L590.7 110.6"/>
<path shape-rendering="crispEdges" fill="#d0d3d4" d="M326.1 157.2L329.0 157.8L322.3 90.1L319.4 89.5Z"/>
<path class="l" stroke-width="1.35" d="M336.1 114.3L339.2 115.1"/>
<path shape-rendering="crispEdges" fill="#86898a" d="M578.6 150.3L578.8 152.0L581.3 84.5L581.1 82.8Z"/>
<path shape-rendering="crispEdges" fill="#7e8182" d="M246.5 166.4L248.3 165.2L238.6 97.2L236.7 98.4Z"/>
<path shape-rendering="crispEdges" fill="#a7aaab" d="M332.8 117.6L334.9 118.1L334.3 116.9L332.0 117.4ZM368.4 116.3L367.5 114.7L367.0 114.8Z"/>
<path class="l" stroke-width="0.8" stroke-opacity="0.6" d="M250.3 164.1L252.5 163.0M320.3 156.2L323.3 156.7M578.3 148.6L578.6 150.3"/>
<path shape-rendering="crispEdges" fill="#ced1d2" d="M329.0 157.8L331.8 158.4L325.2 90.7L322.3 90.1Z"/>
<path shape-rendering="crispEdges" fill="#b3b6b7" d="M371.1 147.9L369.4 146.0L367.0 114.8L368.7 116.7Z"/>
<path class="l" stroke-width="1.35" d="M369.4 146.0L368.0 143.9M367.0 114.8L365.6 112.7M228.1 127.1L230.2 125.3M339.2 115.1L342.2 116.0"/>
<path shape-rendering="crispEdges" fill="#a7aaab" d="M342.2 116.0L340.9 115.6L334.3 116.9L334.9 118.1L335.7 118.3L338.5 119.1L341.3 119.9L344.2 119.4L342.4 116.0Z"/>
<path shape-rendering="crispEdges" fill="#727576" d="M244.9 167.7L246.5 166.4L236.7 98.4L235.0 99.6Z"/>
<path class="l" stroke-width="0.8" stroke-opacity="0.6" d="M323.3 156.7L326.1 157.2"/>
<path shape-rendering="crispEdges" fill="#b7babb" d="M376.5 116.5L374.7 114.9L372.7 86.8L374.5 88.4Z"/>
<path shape-rendering="crispEdges" fill="#a7aaab" d="M584.3 112.5L584.5 114.3L584.5 115.6L590.8 114.3L587.6 110.4L584.1 111.1ZM226.4 129.0L226.1 129.5L227.5 129.2L227.1 128.2Z"/>
<path class="l" stroke-width="0.8" stroke-opacity="0.6" d="M248.3 165.2L250.3 164.1"/>
<path shape-rendering="crispEdges" fill="#a7aaab" d="M368.7 116.7L370.6 118.5L370.7 118.5L377.3 117.2L376.5 116.5L374.7 114.9L373.5 113.5L367.5 114.7L368.4 116.3ZM348.0 117.8L345.1 116.8L342.4 116.0L344.2 119.4L349.6 118.3Z"/>
<path class="l" stroke-width="1.35" d="M374.7 114.9L373.2 113.2"/>
<path shape-rendering="crispEdges" fill="#cdd0d1" d="M331.8 158.4L334.6 159.1L328.1 91.3L325.2 90.7Z"/>
<path class="l" stroke-width="1.35" d="M590.7 110.6L590.9 112.4"/>
<path shape-rendering="crispEdges" fill="#828586" d="M578.8 152.0L579.0 153.8L581.5 86.2L581.3 84.5Z"/>
<path class="l" stroke-width="0.8" stroke-opacity="0.6" d="M326.1 157.2L329.0 157.8"/>
<path class="l" stroke-width="1.35" d="M342.2 116.0L345.1 116.8"/>
<path shape-rendering="crispEdges" fill="#66696a" d="M243.4 169.0L244.9 167.7L235.0 99.6L233.5 100.9Z"/>
<path class="l" stroke-width="0.8" stroke-opacity="0.6" d="M578.6 150.3L578.8 152.0M246.5 166.4L248.3 165.2"/>
<path shape-rendering="crispEdges" fill="#cccfd0" d="M334.6 159.1L337.3 159.9L330.9 92.1L328.1 91.3Z"/>
<path shape-rendering="crispEdges" fill="#a7aaab" d="M591.1 114.3L591.1 114.2L590.8 114.3L591.2 114.8Z"/>
<path class="l" stroke-width="1.35" d="M226.4 129.0L228.1 127.1"/>
<path shape-rendering="crispEdges" fill="#b7babb" d="M373.0 149.7L371.1 147.9L368.7 116.7L370.6 118.5Z"/>
<path class="l" stroke-width="0.8" stroke-opacity="0.6" d="M329.0 157.8L331.8 158.4"/>
<path class="l" stroke-width="1.35" d="M371.1 147.9L369.4 146.0M368.7 116.7L367.0 114.8"/>
<path shape-rendering="crispEdges" fill="#a7aaab" d="M231.5 131.7L232.7 130.0L234.1 128.4L234.8 127.8L227.5 129.2L229.3 133.3L230.8 133.0Z"/>
<path shape-rendering="crispEdges" fill="#b9bcbd" d="M378.4 118.2L376.5 116.5L374.5 88.4L376.5 90.1Z"/>
<path class="l" stroke-width="1.35" d="M345.1 116.8L348.0 117.8"/>
<path class="l" stroke-width="0.8" stroke-opacity="0.6" d="M244.9 167.7L246.5 166.4"/>
<path shape-rendering="crispEdges" fill="#636667" d="M242.2 170.4L243.4 169.0L233.5 100.9L232.3 102.3Z"/>
<path class="l" stroke-width="1.35" d="M376.5 116.5L374.7 114.9"/>
<path shape-rendering="crispEdges" fill="#cbcecf" d="M337.3 159.9L340.0 160.7L333.7 92.8L330.9 92.1Z"/>
<path class="l" stroke-width="1.35" d="M590.9 112.4L591.1 114.3"/>
<path shape-rendering="crispEdges" fill="#7d8081" d="M579.0 153.8L579.1 155.5L581.6 87.9L581.5 86.2Z"/>
<path shape-rendering="crispEdges" fill="#a7aaab" d="M341.4 120.0L344.1 120.8L345.3 121.2L344.2 119.4L341.3 119.9Z"/>
<path class="l" stroke-width="0.8" stroke-opacity="0.6" d="M331.8 158.4L334.6 159.1M578.8 152.0L579.0 153.8"/>
<path shape-rendering="crispEdges" fill="#a7aaab" d="M225.0 131.0L223.9 133.1L223.3 134.5L229.3 133.3L227.5 129.2L226.1 129.5Z"/>
<path class="l" stroke-width="1.35" d="M348.0 117.8L350.9 118.7M225.0 131.0L226.4 129.0"/>
<path class="l" stroke-width="0.8" stroke-opacity="0.6" d="M243.4 169.0L244.9 167.7"/>
<path shape-rendering="crispEdges" fill="#a7aaab" d="M350.9 118.7L349.6 118.3L344.2 119.4L345.3 121.2L346.9 121.8L349.6 122.7L349.7 122.7L354.3 121.8L352.9 119.4Z"/>
<path shape-rendering="crispEdges" fill="#cacdce" d="M340.0 160.7L342.7 161.5L336.5 93.6L333.7 92.8Z"/>
<path shape-rendering="crispEdges" fill="#636667" d="M241.3 171.9L242.2 170.4L232.3 102.3L231.3 103.7Z"/>
<path class="l" stroke-width="0.8" stroke-opacity="0.6" d="M334.6 159.1L337.3 159.9"/>
<path shape-rendering="crispEdges" fill="#b9bcbd" d="M374.9 151.5L373.0 149.7L370.6 118.5L372.6 120.2Z"/>
<path shape-rendering="crispEdges" fill="#babdbe" d="M380.4 119.8L378.4 118.2L376.5 90.1L378.4 91.6Z"/>
<path class="l" stroke-width="1.35" d="M373.0 149.7L371.1 147.9M370.6 118.5L368.7 116.7"/>
<path shape-rendering="crispEdges" fill="#a7aaab" d="M356.5 120.7L353.7 119.7L352.9 119.4L354.3 121.8L357.6 121.1Z"/>
<path class="l" stroke-width="1.35" d="M378.4 118.2L376.5 116.5"/>
<path shape-rendering="crispEdges" fill="#a7aaab" d="M372.6 120.2L374.6 121.9L374.9 122.1L379.9 121.1L377.8 117.7L377.3 117.2L370.7 118.5ZM591.2 118.0L591.2 116.1L591.2 114.8L590.8 114.3L584.5 115.6L584.5 116.1L584.5 117.3L586.6 119.8L591.2 118.9Z"/>
<path shape-rendering="crispEdges" fill="#787b7c" d="M579.1 155.5L579.0 157.3L581.5 89.6L581.6 87.9Z"/>
<path class="l" stroke-width="1.35" d="M591.1 114.3L591.2 116.1M350.9 118.7L353.7 119.7"/>
<path class="l" stroke-width="0.8" stroke-opacity="0.6" d="M242.2 170.4L243.4 169.0"/>
<path shape-rendering="crispEdges" fill="#cacdce" d="M342.7 161.5L345.4 162.4L339.3 94.5L336.5 93.6Z"/>
<path class="l" stroke-width="0.8" stroke-opacity="0.6" d="M337.3 159.9L340.0 160.7"/>
<path shape-rendering="crispEdges" fill="#a7aaab" d="M380.4 119.8L378.4 118.2L377.8 117.7L379.9 121.1L381.6 120.8Z"/>
<path class="l" stroke-width="0.8" stroke-opacity="0.6" d="M579.0 153.8L579.1 155.5"/>
<path shape-rendering="crispEdges" fill="#636667" d="M240.5 173.5L241.3 171.9L231.3 103.7L230.4 105.3Z"/>
<path class="l" stroke-width="1.35" d="M223.9 133.1L225.0 131.0"/>
<path shape-rendering="crispEdges" fill="#a7aaab" d="M230.6 133.4L230.8 133.0L229.3 133.3L230.0 134.8Z"/>
<path class="l" stroke-width="1.35" d="M579.0 157.3L581.5 89.6"/>
<path shape-rendering="crispEdges" fill="#babdbe" d="M382.3 121.4L380.4 119.8L378.4 91.6L380.3 93.2ZM376.9 153.2L374.9 151.5L372.6 120.2L374.6 121.9Z"/>
<path shape-rendering="crispEdges" fill="#c9cccd" d="M345.4 162.4L348.0 163.3L342.0 95.4L339.3 94.5Z"/>
<path class="l" stroke-width="0.8" stroke-opacity="0.6" d="M340.0 160.7L342.7 161.5"/>
<path class="l" stroke-width="1.35" d="M353.7 119.7L356.5 120.7"/>
<path class="l" stroke-width="0.8" stroke-opacity="0.6" d="M241.3 171.9L242.2 170.4"/>
<path class="l" stroke-width="1.35" d="M374.9 151.5L373.0 149.7M372.6 120.2L370.6 118.5M380.4 119.8L378.4 118.2"/>
<path shape-rendering="crispEdges" fill="#4b6478" d="M584.5 117.8L584.4 119.6L585.5 91.5L585.6 89.7Z"/>
<path shape-rendering="crispEdges" fill="#636667" d="M589.9 149.3L589.8 151.2L591.1 119.9L591.2 118.0Z"/>
<path class="l" stroke-width="1.35" d="M591.2 116.1L591.2 118.0"/>
<path shape-rendering="crispEdges" fill="#a7aaab" d="M352.3 123.7L355.0 124.7L356.2 125.2L354.3 121.8L349.7 122.7Z"/>
<path class="l" stroke-width="0.8" stroke-opacity="0.6" d="M579.1 155.5L579.0 157.3"/>
<path shape-rendering="crispEdges" fill="#a7aaab" d="M584.5 117.8L584.4 119.6L584.3 120.3L586.6 119.8L584.5 117.3Z"/>
<path shape-rendering="crispEdges" fill="#636667" d="M239.9 175.1L240.5 173.5L230.4 105.3L229.8 106.9Z"/>
<path class="l" stroke-width="0.8" stroke-opacity="0.6" d="M342.7 161.5L345.4 162.4"/>
<path shape-rendering="crispEdges" fill="#c8cbcc" d="M348.0 163.3L350.6 164.2L344.7 96.3L342.0 95.4Z"/>
<path class="l" stroke-width="1.35" d="M356.5 120.7L359.3 121.8"/>
<path shape-rendering="crispEdges" fill="#a7aaab" d="M362.0 122.9L359.3 121.8L357.6 121.1L354.3 121.8L356.2 125.2L357.3 125.7L364.4 124.3L364.0 123.7Z"/>
<path class="l" stroke-width="1.35" d="M223.1 135.1L223.9 133.1"/>
<path shape-rendering="crispEdges" fill="#b9bcbd" d="M384.0 122.9L382.3 121.4L380.3 93.2L382.1 94.7Z"/>
<path class="l" stroke-width="1.35" d="M584.5 117.8L585.6 89.7M589.9 149.3L591.2 118.0"/>
<path class="l" stroke-width="0.8" stroke-opacity="0.6" d="M240.5 173.5L241.3 171.9"/>
<path shape-rendering="crispEdges" fill="#babdbe" d="M378.7 154.7L376.9 153.2L374.6 121.9L376.4 123.4Z"/>
<path shape-rendering="crispEdges" fill="#a7aaab" d="M223.1 135.1L222.5 137.2L222.5 137.7L223.0 139.0L229.3 137.8L229.4 137.0L229.9 135.2L230.0 134.8L229.3 133.3L223.3 134.5Z"/>
<path class="l" stroke-width="1.35" d="M382.3 121.4L380.4 119.8M376.9 153.2L374.9 151.5M374.6 121.9L372.6 120.2"/>
<path class="l" stroke-width="0.8" stroke-opacity="0.6" d="M345.4 162.4L348.0 163.3"/>
<path shape-rendering="crispEdges" fill="#c8cbcc" d="M350.6 164.2L353.2 165.2L347.4 97.3L344.7 96.3Z"/>
<path shape-rendering="crispEdges" fill="#4b6478" d="M584.4 119.6L584.2 121.4L585.3 93.3L585.5 91.5Z"/>
<path shape-rendering="crispEdges" fill="#a7aaab" d="M364.7 124.0L364.0 123.7L364.4 124.3L365.1 124.1Z"/>
<path shape-rendering="crispEdges" fill="#636667" d="M589.8 151.2L589.6 153.2L590.9 121.9L591.1 119.9Z"/>
<path shape-rendering="crispEdges" fill="#a7aaab" d="M385.4 124.3L384.0 122.9L382.3 121.4L381.6 120.8L379.9 121.1L382.3 125.2L385.6 124.5Z"/>
<path shape-rendering="crispEdges" fill="#636667" d="M239.4 176.9L239.9 175.1L229.8 106.9L229.3 108.5Z"/>
<path class="l" stroke-width="1.35" d="M359.3 121.8L362.0 122.9"/>
<path shape-rendering="crispEdges" fill="#b9bcbd" d="M378.8 154.9L378.7 154.7L376.4 123.4L376.6 123.6Z"/>
<path shape-rendering="crispEdges" fill="#a7aaab" d="M590.9 121.9L591.1 119.9L591.2 118.9L586.6 119.8L589.8 123.8L590.6 123.7Z"/>
<path class="l" stroke-width="1.35" d="M584.5 117.8L584.4 119.6M589.9 149.3L589.8 151.2M591.2 118.0L591.1 119.9"/>
<path class="l" stroke-width="0.8" stroke-opacity="0.6" d="M239.9 175.1L240.5 173.5"/>
<path shape-rendering="crispEdges" fill="#b6b9ba" d="M385.4 124.3L384.0 122.9L382.1 94.7L383.5 96.1Z"/>
<path shape-rendering="crispEdges" fill="#a7aaab" d="M376.4 123.4L376.6 123.6L374.4 123.9L373.0 124.2L374.5 126.7L382.3 125.2L379.9 121.1L374.9 122.1Z"/>
<path class="l" stroke-width="0.8" stroke-opacity="0.6" d="M348.0 163.3L350.6 164.2"/>
<path class="l" stroke-width="1.35" d="M222.5 137.2L223.1 135.1"/>
<path shape-rendering="crispEdges" fill="#c7cacb" d="M353.2 165.2L355.7 166.3L350.0 98.3L347.4 97.3Z"/>
<path class="l" stroke-width="1.35" d="M378.8 154.9L376.6 123.6"/>
<path shape-rendering="crispEdges" fill="#a7aaab" d="M222.2 139.2L223.0 139.0L222.5 137.7Z"/>
<path class="l" stroke-width="1.35" d="M384.0 122.9L382.3 121.4M378.7 154.7L376.9 153.2M376.4 123.4L374.6 121.9M362.0 122.9L364.7 124.0"/>
<path shape-rendering="crispEdges" fill="#4b6478" d="M584.2 121.4L583.9 123.2L585.0 95.0L585.3 93.3Z"/>
<path shape-rendering="crispEdges" fill="#636667" d="M239.2 178.6L239.4 176.9L229.3 108.5L229.0 110.2Z"/>
<path shape-rendering="crispEdges" fill="#a7aaab" d="M584.2 121.4L583.9 123.2L583.4 125.0L583.4 125.2L589.8 123.8L586.6 119.8L584.3 120.3Z"/>
<path shape-rendering="crispEdges" fill="#636667" d="M589.6 153.2L589.2 155.1L590.6 123.8L590.9 121.9Z"/>
<path class="l" stroke-width="0.8" stroke-opacity="0.6" d="M350.6 164.2L353.2 165.2"/>
<path class="l" stroke-width="1.35" d="M584.4 119.6L584.2 121.4"/>
<path shape-rendering="crispEdges" fill="#b0b3b4" d="M386.5 125.6L385.4 124.3L383.5 96.1L384.6 97.4Z"/>
<path class="l" stroke-width="1.35" d="M589.8 151.2L589.6 153.2M591.1 119.9L590.9 121.9"/>
<path shape-rendering="crispEdges" fill="#a7aaab" d="M357.6 125.8L360.2 126.9L362.8 128.0L364.6 128.7L366.7 128.3L364.4 124.3L357.3 125.7Z"/>
<path class="l" stroke-width="0.8" stroke-opacity="0.6" d="M239.4 176.9L239.9 175.1"/>
<path shape-rendering="crispEdges" fill="#c7cacb" d="M355.7 166.3L358.3 167.3L352.6 99.3L350.0 98.3Z"/>
<path shape-rendering="crispEdges" fill="#a7aaab" d="M370.9 124.5L367.4 125.1L367.3 125.1L365.1 124.1L364.4 124.3L366.7 128.3L374.5 126.7L373.0 124.2Z"/>
<path class="l" stroke-width="1.35" d="M378.8 154.9L378.7 154.7M376.6 123.6L376.4 123.4"/>
<path shape-rendering="crispEdges" fill="#a7aaab" d="M383.0 126.2L386.5 125.6L385.6 124.5L382.3 125.2L382.9 126.2Z"/>
<path class="l" stroke-width="1.35" d="M374.4 123.9L376.6 123.6M364.7 124.0L367.3 125.1M370.9 124.5L374.4 123.9M385.4 124.3L384.0 122.9M222.2 139.2L222.5 137.2M367.4 125.1L370.9 124.5"/>
<path shape-rendering="crispEdges" fill="#a7aaab" d="M375.9 127.4L379.5 126.8L382.9 126.2L382.3 125.2L374.5 126.7L375.0 127.5ZM590.6 123.8L590.6 123.7L589.8 123.8L590.4 124.6Z"/>
<path class="l" stroke-width="0.8" stroke-opacity="0.6" d="M353.2 165.2L355.7 166.3"/>
<path class="l" stroke-width="1.35" d="M386.5 125.6L384.6 97.4M367.3 125.1L367.4 125.1"/>
<path shape-rendering="crispEdges" fill="#636667" d="M239.1 180.4L239.2 178.6L229.0 110.2L228.9 112.0Z"/>
<path shape-rendering="crispEdges" fill="#c6c9ca" d="M358.3 167.3L360.8 168.4L355.2 100.3L352.6 99.3Z"/>
<path shape-rendering="crispEdges" fill="#a7aaab" d="M229.0 140.8L229.1 138.9L229.3 137.8L223.0 139.0L224.8 143.2L229.0 142.3Z"/>
<path shape-rendering="crispEdges" fill="#4b6478" d="M583.9 123.2L583.4 125.0L584.5 96.8L585.0 95.0Z"/>
<path class="l" stroke-width="1.35" d="M584.2 121.4L583.9 123.2"/>
<path class="l" stroke-width="0.8" stroke-opacity="0.6" d="M239.2 178.6L239.4 176.9"/>
<path shape-rendering="crispEdges" fill="#636667" d="M589.2 155.1L588.8 157.1L590.1 125.7L590.6 123.8Z"/>
<path shape-rendering="crispEdges" fill="#a7aaab" d="M368.9 128.5L372.4 127.9L375.0 127.5L374.5 126.7L366.7 128.3L367.0 128.8Z"/>
<path class="l" stroke-width="1.35" d="M589.6 153.2L589.2 155.1M590.9 121.9L590.6 123.8"/>
<path shape-rendering="crispEdges" fill="#a7aaab" d="M222.2 139.2L222.1 141.3L222.1 143.3L222.1 143.7L224.8 143.2L223.0 139.0L222.2 139.2Z"/>
<path class="l" stroke-width="1.35" d="M386.5 125.6L385.4 124.3"/>
<path class="l" stroke-width="0.8" stroke-opacity="0.6" d="M355.7 166.3L358.3 167.3"/>
<path shape-rendering="crispEdges" fill="#b9bcbd" d="M390.6 167.4L394.5 166.7L390.3 98.7L386.1 99.4Z"/>
<path shape-rendering="crispEdges" fill="#c6c9ca" d="M360.8 168.4L363.3 169.5L357.8 101.4L355.2 100.3Z"/>
<path shape-rendering="crispEdges" fill="#a7aaab" d="M365.4 129.1L367.0 128.8L366.7 128.3L364.6 128.7Z"/>
<path class="l" stroke-width="1.35" d="M222.1 141.3L222.2 139.2"/>
<path shape-rendering="crispEdges" fill="#b9bcbd" d="M386.6 168.1L390.6 167.4L386.1 99.4L382.0 100.0Z"/>
<path shape-rendering="crispEdges" fill="#636667" d="M239.2 182.3L239.1 180.4L228.9 112.0L229.0 113.8Z"/>
<path shape-rendering="crispEdges" fill="#4b6478" d="M583.4 125.0L582.9 126.8L584.0 98.6L584.5 96.8Z"/>
<path shape-rendering="crispEdges" fill="#b9bcbd" d="M383.1 168.7L386.6 168.1L382.0 100.0L378.4 100.6Z"/>
<path class="l" stroke-width="0.8" stroke-opacity="0.6" d="M239.1 180.4L239.2 178.6M358.3 167.3L360.8 168.4"/>
<path class="l" stroke-width="1.35" d="M583.9 123.2L583.4 125.0M394.5 166.7L390.3 98.7"/>
<path shape-rendering="crispEdges" fill="#a7aaab" d="M589.5 127.6L590.1 125.7L590.4 124.6L589.8 123.8L583.4 125.2L583.0 126.2L585.6 129.5L589.1 128.7Z"/>
<path shape-rendering="crispEdges" fill="#66696a" d="M588.8 157.1L588.2 159.0L589.5 127.6L590.1 125.7Z"/>
<path shape-rendering="crispEdges" fill="#b9bcbd" d="M379.7 169.2L383.1 168.7L378.4 100.6L374.9 101.1Z"/>
<path class="l" stroke-width="1.35" d="M589.2 155.1L588.8 157.1M590.6 123.8L590.1 125.7"/>
<path shape-rendering="crispEdges" fill="#b9bcbd" d="M376.3 169.8L379.7 169.2L374.9 101.1L371.3 101.7Z"/>
<path shape-rendering="crispEdges" fill="#c6c9ca" d="M363.3 169.5L367.3 171.4L362.0 103.2L357.8 101.4Z"/>
<path shape-rendering="crispEdges" fill="#b9bcbd" d="M372.8 170.4L376.3 169.8L371.3 101.7L367.7 102.3Z"/>
<path class="l" stroke-width="0.8" stroke-opacity="0.6" d="M390.6 167.4L394.5 166.7M360.8 168.4L363.3 169.5"/>
<path shape-rendering="crispEdges" fill="#636667" d="M239.4 184.1L239.2 182.3L229.0 113.8L229.2 115.6Z"/>
<path class="l" stroke-width="1.35" d="M222.1 143.3L222.1 141.3"/>
<path shape-rendering="crispEdges" fill="#4b6478" d="M582.9 126.8L582.2 128.6L583.2 100.3L584.0 98.6Z"/>
<path shape-rendering="crispEdges" fill="#b9bcbd" d="M367.3 171.4L372.8 170.4L367.7 102.3L362.0 103.2Z"/>
<path class="l" stroke-width="0.8" stroke-opacity="0.6" d="M386.6 168.1L390.6 167.4M239.2 182.3L239.1 180.4"/>
<path class="l" stroke-width="1.35" d="M583.4 125.0L582.9 126.8"/>
<path class="l" stroke-width="0.8" stroke-opacity="0.6" d="M383.1 168.7L386.6 168.1"/>
<path shape-rendering="crispEdges" fill="#6a6d6e" d="M588.2 159.0L587.5 160.9L588.8 129.5L589.5 127.6Z"/>
<path shape-rendering="crispEdges" fill="#a7aaab" d="M229.6 146.5L229.2 144.6L229.1 142.7L229.0 142.3L224.8 143.2L226.6 147.4L229.6 146.8Z"/>
<path class="l" stroke-width="1.35" d="M588.8 157.1L588.2 159.0M590.1 125.7L589.5 127.6M239.4 184.1L229.2 115.6"/>
<path class="l" stroke-width="0.8" stroke-opacity="0.6" d="M379.7 169.2L383.1 168.7"/>
<path shape-rendering="crispEdges" fill="#a7aaab" d="M582.9 126.8L582.2 128.6L581.3 130.3L581.3 130.4L585.6 129.5L583.0 126.2Z"/>
<path class="l" stroke-width="1.35" d="M367.3 171.4L362.0 103.2"/>
<path shape-rendering="crispEdges" fill="#a7aaab" d="M222.3 145.4L222.6 147.4L222.8 148.2L226.6 147.4L224.8 143.2L222.1 143.7Z"/>
<path class="l" stroke-width="0.8" stroke-opacity="0.6" d="M376.3 169.8L379.7 169.2M363.3 169.5L367.3 171.4"/>
<path shape-rendering="crispEdges" fill="#949798" d="M229.6 146.5L229.2 144.6L224.9 116.1L225.3 117.9Z"/>
<path class="l" stroke-width="0.8" stroke-opacity="0.6" d="M372.8 170.4L376.3 169.8"/>
<path shape-rendering="crispEdges" fill="#949798" d="M227.5 179.1L227.2 177.0L222.3 145.4L222.6 147.4Z"/>
<path shape-rendering="crispEdges" fill="#4b6478" d="M582.2 128.6L581.3 130.3L582.4 102.0L583.2 100.3Z"/>
<path class="l" stroke-width="1.35" d="M222.3 145.4L222.1 143.3"/>
<path class="l" stroke-width="0.8" stroke-opacity="0.6" d="M239.4 184.1L239.2 182.3"/>
<path class="l" stroke-width="1.35" d="M582.9 126.8L582.2 128.6"/>
<path class="l" stroke-width="0.8" stroke-opacity="0.6" d="M367.3 171.4L372.8 170.4"/>
<path shape-rendering="crispEdges" fill="#a7aaab" d="M587.9 131.4L588.8 129.5L589.1 128.7L585.6 129.5L587.6 131.9Z"/>
<path shape-rendering="crispEdges" fill="#6f7273" d="M587.5 160.9L586.6 162.9L587.9 131.4L588.8 129.5Z"/>
<path class="l" stroke-width="1.35" d="M229.2 144.6L224.9 116.1M227.2 177.0L222.3 145.4M588.2 159.0L587.5 160.9M589.5 127.6L588.8 129.5"/>
<path shape-rendering="crispEdges" fill="#4b6478" d="M581.3 130.3L580.3 132.0L581.4 103.7L582.4 102.0Z"/>
<path shape-rendering="crispEdges" fill="#989b9c" d="M230.0 148.4L229.6 146.5L225.3 117.9L225.7 119.8ZM228.0 181.1L227.5 179.1L222.6 147.4L223.1 149.5Z"/>
<path class="l" stroke-width="1.35" d="M229.6 146.5L229.2 144.6M227.5 179.1L227.2 177.0M222.6 147.4L222.3 145.4M582.2 128.6L581.3 130.3"/>
<path shape-rendering="crispEdges" fill="#747778" d="M586.6 162.9L585.5 164.8L586.8 133.3L587.9 131.4Z"/>
<path shape-rendering="crispEdges" fill="#a7aaab" d="M586.8 133.3L587.6 131.9L585.6 129.5L581.3 130.4L580.3 132.0L579.7 133.0L581.4 135.2L586.3 134.1Z"/>
<path class="l" stroke-width="1.35" d="M587.5 160.9L586.6 162.9M588.8 129.5L587.9 131.4"/>
<path shape-rendering="crispEdges" fill="#a7aaab" d="M230.6 150.2L230.0 148.4L229.6 146.8L226.6 147.4L228.5 151.6L230.9 151.1Z"/>
<path shape-rendering="crispEdges" fill="#4b6478" d="M580.3 132.0L579.2 133.7L580.2 105.4L581.4 103.7Z"/>
<path shape-rendering="crispEdges" fill="#9c9fa0" d="M230.6 150.2L230.0 148.4L225.7 119.8L226.3 121.7Z"/>
<path shape-rendering="crispEdges" fill="#a7aaab" d="M223.1 149.5L223.7 151.5L224.1 152.5L228.5 151.6L226.6 147.4L222.8 148.2Z"/>
<path class="l" stroke-width="1.35" d="M581.3 130.3L580.3 132.0"/>
<path shape-rendering="crispEdges" fill="#9c9fa0" d="M228.6 183.2L228.0 181.1L223.1 149.5L223.7 151.5Z"/>
<path class="l" stroke-width="1.35" d="M230.0 148.4L229.6 146.5M228.0 181.1L227.5 179.1M223.1 149.5L222.6 147.4"/>
<path shape-rendering="crispEdges" fill="#797c7d" d="M585.5 164.8L584.3 166.7L585.5 135.2L586.8 133.3Z"/>
<path class="l" stroke-width="1.35" d="M586.6 162.9L585.5 164.8M587.9 131.4L586.8 133.3"/>
<path shape-rendering="crispEdges" fill="#4b6478" d="M579.2 133.7L577.9 135.4L578.9 107.0L580.2 105.4Z"/>
<path shape-rendering="crispEdges" fill="#a7aaab" d="M579.2 133.7L577.9 135.4L577.3 136.0L581.4 135.2L579.7 133.0Z"/>
<path shape-rendering="crispEdges" fill="#a0a3a4" d="M231.3 152.1L230.6 150.2L226.3 121.7L227.0 123.5Z"/>
<path class="l" stroke-width="1.35" d="M580.3 132.0L579.2 133.7M230.6 150.2L230.0 148.4"/>
<path shape-rendering="crispEdges" fill="#9fa2a3" d="M229.3 185.2L228.6 183.2L223.7 151.5L224.4 153.5Z"/>
<path shape-rendering="crispEdges" fill="#a7aaab" d="M584.1 137.0L585.5 135.2L586.3 134.1L581.4 135.2L583.4 137.8Z"/>
<path class="l" stroke-width="1.35" d="M228.6 183.2L228.0 181.1M223.7 151.5L223.1 149.5"/>
<path shape-rendering="crispEdges" fill="#7f8283" d="M584.3 166.7L582.9 168.5L584.1 137.0L585.5 135.2Z"/>
<path class="l" stroke-width="1.35" d="M585.5 164.8L584.3 166.7M586.8 133.3L585.5 135.2"/>
<path shape-rendering="crispEdges" fill="#4b6478" d="M577.9 135.4L576.4 137.0L577.4 108.6L578.9 107.0Z"/>
<path class="l" stroke-width="1.35" d="M579.2 133.7L577.9 135.4"/>
<path shape-rendering="crispEdges" fill="#a3a6a7" d="M232.1 154.0L231.3 152.1L227.0 123.5L227.8 125.4Z"/>
<path class="l" stroke-width="1.35" d="M231.3 152.1L230.6 150.2"/>
<path shape-rendering="crispEdges" fill="#a7aaab" d="M232.1 154.0L231.3 152.1L230.9 151.1L228.5 151.6L230.3 155.9L232.8 155.4Z"/>
<path shape-rendering="crispEdges" fill="#a3a6a7" d="M230.2 187.2L229.3 185.2L224.4 153.5L225.3 155.4Z"/>
<path shape-rendering="crispEdges" fill="#a7aaab" d="M224.4 153.5L225.3 155.4L226.0 156.8L230.3 155.9L228.5 151.6L224.1 152.5Z"/>
<path class="l" stroke-width="1.35" d="M229.3 185.2L228.6 183.2M224.4 153.5L223.7 151.5"/>
<path shape-rendering="crispEdges" fill="#848788" d="M582.9 168.5L581.3 170.4L582.5 138.8L584.1 137.0Z"/>
<path shape-rendering="crispEdges" fill="#4b6478" d="M576.4 137.0L574.7 138.6L575.7 110.2L577.4 108.6Z"/>
<path shape-rendering="crispEdges" fill="#a7aaab" d="M582.5 138.8L583.4 137.8L581.4 135.2L577.3 136.0L576.4 137.0L575.0 138.3L577.1 140.9L581.3 140.0Z"/>
<path class="l" stroke-width="1.35" d="M584.3 166.7L582.9 168.5M585.5 135.2L584.1 137.0M577.9 135.4L576.4 137.0"/>
<path shape-rendering="crispEdges" fill="#a6a9aa" d="M233.1 155.8L232.1 154.0L227.8 125.4L228.8 127.2Z"/>
<path class="l" stroke-width="1.35" d="M232.1 154.0L231.3 152.1"/>
<path shape-rendering="crispEdges" fill="#a6a9aa" d="M231.1 189.2L230.2 187.2L225.3 155.4L226.3 157.4Z"/>
<path shape-rendering="crispEdges" fill="#4b6478" d="M574.7 138.6L572.9 140.2L573.9 111.7L575.7 110.2Z"/>
<path class="l" stroke-width="1.35" d="M230.2 187.2L229.3 185.2M225.3 155.4L224.4 153.5"/>
<path shape-rendering="crispEdges" fill="#898c8d" d="M581.3 170.4L579.5 172.2L580.6 140.6L582.5 138.8Z"/>
<path class="l" stroke-width="1.35" d="M582.9 168.5L581.3 170.4M584.1 137.0L582.5 138.8M576.4 137.0L574.7 138.6"/>
<path shape-rendering="crispEdges" fill="#a7aaab" d="M574.7 138.6L572.9 140.2L570.9 141.7L571.5 142.1L577.1 140.9L575.0 138.3Z"/>
<path shape-rendering="crispEdges" fill="#a9acad" d="M234.1 157.7L233.1 155.8L228.8 127.2L229.8 129.0Z"/>
<path class="l" stroke-width="1.35" d="M233.1 155.8L232.1 154.0"/>
<path shape-rendering="crispEdges" fill="#8e9192" d="M579.5 172.2L578.3 173.2L579.4 141.6L580.6 140.6Z"/>
<path shape-rendering="crispEdges" fill="#4b6478" d="M572.9 140.2L570.9 141.7L571.8 113.2L573.9 111.7Z"/>
<path shape-rendering="crispEdges" fill="#a8abac" d="M232.2 191.1L231.1 189.2L226.3 157.4L227.3 159.3Z"/>
<path shape-rendering="crispEdges" fill="#a7aaab" d="M235.2 159.5L234.1 157.7L233.1 155.8L232.8 155.4L230.3 155.9L232.2 160.2L235.3 159.6Z"/>
<path class="l" stroke-width="1.35" d="M231.1 189.2L230.2 187.2M226.3 157.4L225.3 155.4M574.7 138.6L572.9 140.2"/>
<path shape-rendering="crispEdges" fill="#a7aaab" d="M226.3 157.4L227.3 159.3L228.4 161.0L232.2 160.2L230.3 155.9L226.0 156.8Z"/>
<path class="l" stroke-width="1.35" d="M581.3 170.4L579.5 172.2M582.5 138.8L580.6 140.6M578.3 173.2L579.4 141.6M570.9 141.7L571.8 113.2"/>
<path shape-rendering="crispEdges" fill="#abaeaf" d="M235.2 159.5L234.1 157.7L229.8 129.0L231.0 130.8Z"/>
<path shape-rendering="crispEdges" fill="#a7aaab" d="M582.8 144.0L580.6 142.5L579.4 141.6L580.6 140.6L581.3 140.0L577.1 140.9L580.3 145.1L583.3 144.4Z"/>
<path shape-rendering="crispEdges" fill="#bec1c2" d="M564.5 181.7L566.5 183.1L568.6 114.6L566.5 113.2Z"/>
<path class="l" stroke-width="1.35" d="M234.1 157.7L233.1 155.8M579.5 172.2L578.3 173.2M580.6 140.6L579.4 141.6M572.9 140.2L570.9 141.7"/>
<path shape-rendering="crispEdges" fill="#a7aaab" d="M573.1 143.1L575.2 144.7L576.8 145.8L580.3 145.1L577.1 140.9L571.5 142.1Z"/>
<path shape-rendering="crispEdges" fill="#abaeaf" d="M233.4 193.1L232.2 191.1L227.3 159.3L228.5 161.2Z"/>
<path class="l" stroke-width="1.35" d="M232.2 191.1L231.1 189.2M227.3 159.3L226.3 157.4M564.5 181.7L566.5 113.2"/>
<path shape-rendering="crispEdges" fill="#bec1c2" d="M566.5 183.1L568.5 184.5L570.7 116.0L568.6 114.6Z"/>
<path class="l" stroke-width="1.35" d="M579.4 141.6L580.6 142.5"/>
<path shape-rendering="crispEdges" fill="#aeb1b2" d="M236.5 161.2L235.2 159.5L231.0 130.8L232.2 132.5Z"/>
<path class="l" stroke-width="1.35" d="M235.2 159.5L234.1 157.7"/>
<path class="l" stroke-width="0.8" stroke-opacity="0.6" d="M564.5 181.7L566.5 183.1"/>
<path class="l" stroke-width="1.35" d="M580.6 142.5L582.8 144.0"/>
<path shape-rendering="crispEdges" fill="#bdc0c1" d="M568.5 184.5L570.6 186.0L572.9 117.5L570.7 116.0Z"/>
<path shape-rendering="crispEdges" fill="#adb0b1" d="M234.7 195.0L233.4 193.1L228.5 161.2L229.8 163.1Z"/>
<path class="l" stroke-width="1.35" d="M233.4 193.1L232.2 191.1M228.5 161.2L227.3 159.3"/>
<path shape-rendering="crispEdges" fill="#a7aaab" d="M237.8 163.0L236.5 161.2L235.3 159.6L232.2 160.2L234.0 164.5L238.4 163.7ZM228.5 161.2L229.8 163.1L231.2 165.0L231.3 165.1L234.0 164.5L232.2 160.2L228.4 161.0Z"/>
<path class="l" stroke-width="0.8" stroke-opacity="0.6" d="M566.5 183.1L568.5 184.5"/>
<path shape-rendering="crispEdges" fill="#b0b3b4" d="M237.8 163.0L236.5 161.2L232.2 132.5L233.6 134.3Z"/>
<path shape-rendering="crispEdges" fill="#a7aaab" d="M587.0 147.3L584.9 145.7L583.3 144.4L580.3 145.1L583.6 149.3L588.2 148.3Z"/>
<path class="l" stroke-width="1.35" d="M236.5 161.2L235.2 159.5"/>
<path shape-rendering="crispEdges" fill="#bdc0c1" d="M570.6 186.0L572.6 187.6L574.9 118.9L572.9 117.5Z"/>
<path class="l" stroke-width="1.35" d="M582.8 144.0L584.9 145.7"/>
<path shape-rendering="crispEdges" fill="#a7aaab" d="M577.3 146.2L579.3 147.7L581.3 149.3L581.8 149.7L583.6 149.3L580.3 145.1L576.8 145.8Z"/>
<path shape-rendering="crispEdges" fill="#b0b3b4" d="M236.1 196.9L234.7 195.0L229.8 163.1L231.2 165.0Z"/>
<path class="l" stroke-width="0.8" stroke-opacity="0.6" d="M568.5 184.5L570.6 186.0"/>
<path class="l" stroke-width="1.35" d="M234.7 195.0L233.4 193.1M229.8 163.1L228.5 161.2"/>
<path shape-rendering="crispEdges" fill="#b2b5b6" d="M239.3 164.7L237.8 163.0L233.6 134.3L235.0 136.0Z"/>
<path shape-rendering="crispEdges" fill="#bcbfc0" d="M572.6 187.6L574.5 189.1L577.0 120.5L574.9 118.9Z"/>
<path class="l" stroke-width="1.35" d="M584.9 145.7L587.0 147.3M237.8 163.0L236.5 161.2"/>
<path class="l" stroke-width="0.8" stroke-opacity="0.6" d="M570.6 186.0L572.6 187.6"/>
<path shape-rendering="crispEdges" fill="#b2b5b6" d="M237.6 198.7L236.1 196.9L231.2 165.0L232.7 166.8Z"/>
<path class="l" stroke-width="1.35" d="M236.1 196.9L234.7 195.0M231.2 165.0L229.8 163.1"/>
<path shape-rendering="crispEdges" fill="#bbbebf" d="M574.5 189.1L576.4 190.7L578.9 122.0L577.0 120.5Z"/>
<path class="l" stroke-width="1.35" d="M587.0 147.3L589.0 149.0"/>
<path shape-rendering="crispEdges" fill="#b4b7b8" d="M240.8 166.5L239.3 164.7L235.0 136.0L236.6 137.7Z"/>
<path shape-rendering="crispEdges" fill="#a7aaab" d="M232.7 166.8L234.3 168.6L234.8 169.1L235.9 168.9L234.0 164.5L231.3 165.1ZM240.8 166.5L239.3 164.7L238.4 163.7L234.0 164.5L235.9 168.9L242.0 167.7Z"/>
<path class="l" stroke-width="1.35" d="M239.3 164.7L237.8 163.0"/>
<path shape-rendering="crispEdges" fill="#a7aaab" d="M591.0 150.6L589.0 149.0L588.2 148.3L583.6 149.3L586.9 153.5L592.8 152.3Z"/>
<path class="l" stroke-width="0.8" stroke-opacity="0.6" d="M572.6 187.6L574.5 189.1"/>
<path shape-rendering="crispEdges" fill="#a7aaab" d="M583.3 150.9L585.2 152.6L586.4 153.7L586.9 153.5L583.6 149.3L581.8 149.7Z"/>
<path shape-rendering="crispEdges" fill="#babdbe" d="M576.4 190.7L578.3 192.3L580.9 123.5L578.9 122.0Z"/>
<path shape-rendering="crispEdges" fill="#b4b7b8" d="M239.1 200.6L237.6 198.7L232.7 166.8L234.3 168.6Z"/>
<path class="l" stroke-width="1.35" d="M589.0 149.0L591.0 150.6M237.6 198.7L236.1 196.9M232.7 166.8L231.2 165.0"/>
<path shape-rendering="crispEdges" fill="#b6b9ba" d="M242.4 168.1L240.8 166.5L236.6 137.7L238.2 139.3Z"/>
<path class="l" stroke-width="0.8" stroke-opacity="0.6" d="M574.5 189.1L576.4 190.7"/>
<path class="l" stroke-width="1.35" d="M240.8 166.5L239.3 164.7"/>
<path shape-rendering="crispEdges" fill="#b9bcbd" d="M578.3 192.3L580.1 193.9L582.8 125.1L580.9 123.5Z"/>
<path class="l" stroke-width="1.35" d="M591.0 150.6L592.9 152.4"/>
<path shape-rendering="crispEdges" fill="#b5b8b9" d="M240.8 202.3L239.1 200.6L234.3 168.6L236.0 170.4Z"/>
<path class="l" stroke-width="0.8" stroke-opacity="0.6" d="M576.4 190.7L578.3 192.3"/>
<path class="l" stroke-width="1.35" d="M239.1 200.6L237.6 198.7M234.3 168.6L232.7 166.8"/>
<path shape-rendering="crispEdges" fill="#a7aaab" d="M236.0 170.4L236.9 171.3L235.9 168.9L234.8 169.1Z"/>
<path shape-rendering="crispEdges" fill="#b7babb" d="M244.1 169.8L242.4 168.1L238.2 139.3L239.9 141.0Z"/>
<path shape-rendering="crispEdges" fill="#a7aaab" d="M587.0 154.2L588.4 155.5L586.9 153.5L586.4 153.7Z"/>
<path class="l" stroke-width="1.35" d="M242.4 168.1L240.8 166.5"/>
<path shape-rendering="crispEdges" fill="#b8bbbc" d="M580.1 193.9L581.9 195.6L584.6 126.7L582.8 125.1Z"/>
<path shape-rendering="crispEdges" fill="#a7aaab" d="M596.7 155.8L594.8 154.1L592.9 152.4L592.8 152.3L586.9 153.5L588.4 155.5L588.9 155.9L590.6 157.6L590.7 157.7L597.2 156.3ZM237.8 172.1L238.9 173.1L246.1 171.6L245.8 171.4L244.1 169.8L242.4 168.1L242.0 167.7L235.9 168.9L236.9 171.3Z"/>
<path class="l" stroke-width="1.35" d="M592.9 152.4L594.8 154.1"/>
<path class="l" stroke-width="0.8" stroke-opacity="0.6" d="M578.3 192.3L580.1 193.9"/>
<path shape-rendering="crispEdges" fill="#b7babb" d="M242.5 204.1L240.8 202.3L236.0 170.4L237.8 172.1Z"/>
<path shape-rendering="crispEdges" fill="#b9bcbd" d="M245.8 171.4L244.1 169.8L239.9 141.0L241.7 142.6Z"/>
<path class="l" stroke-width="1.35" d="M240.8 202.3L239.1 200.6M236.0 170.4L234.3 168.6"/>
<path shape-rendering="crispEdges" fill="#b7babb" d="M581.9 195.6L583.6 197.3L586.4 128.4L584.6 126.7Z"/>
<path class="l" stroke-width="1.35" d="M244.1 169.8L242.4 168.1M594.8 154.1L596.7 155.8"/>
<path class="l" stroke-width="0.8" stroke-opacity="0.6" d="M580.1 193.9L581.9 195.6"/>
<path shape-rendering="crispEdges" fill="#b9bcbd" d="M244.3 205.8L242.5 204.1L237.8 172.1L239.6 173.8Z"/>
<path shape-rendering="crispEdges" fill="#babdbe" d="M247.7 173.0L245.8 171.4L241.7 142.6L243.5 144.1Z"/>
<path class="l" stroke-width="1.35" d="M242.5 204.1L240.8 202.3M237.8 172.1L236.0 170.4"/>
<path shape-rendering="crispEdges" fill="#b6b9ba" d="M583.6 197.3L585.3 199.0L588.2 130.0L586.4 128.4Z"/>
<path class="l" stroke-width="1.35" d="M245.8 171.4L244.1 169.8"/>
<path class="l" stroke-width="0.8" stroke-opacity="0.6" d="M581.9 195.6L583.6 197.3"/>
<path class="l" stroke-width="1.35" d="M596.7 155.8L598.5 157.6"/>
<path shape-rendering="crispEdges" fill="#a7aaab" d="M600.2 159.4L598.5 157.6L597.2 156.3L590.7 157.7L592.4 159.3L594.0 161.1L594.8 161.9L601.2 160.5Z"/>
<path shape-rendering="crispEdges" fill="#babdbe" d="M246.2 207.5L244.3 205.8L239.6 173.8L241.5 175.5Z"/>
<path shape-rendering="crispEdges" fill="#bcbfc0" d="M249.6 174.5L247.7 173.0L243.5 144.1L245.5 145.6Z"/>
<path shape-rendering="crispEdges" fill="#a7aaab" d="M239.6 173.8L241.5 175.5L243.4 177.0L248.1 176.0L246.2 171.7L246.1 171.6L238.9 173.1Z"/>
<path shape-rendering="crispEdges" fill="#b5b8b9" d="M585.3 199.0L587.0 200.7L589.9 131.7L588.2 130.0Z"/>
<path class="l" stroke-width="1.35" d="M244.3 205.8L242.5 204.1M239.6 173.8L237.8 172.1M247.7 173.0L245.8 171.4"/>
<path shape-rendering="crispEdges" fill="#a7aaab" d="M249.6 174.5L247.7 173.0L246.2 171.7L248.1 176.0L250.9 175.5Z"/>
<path class="l" stroke-width="0.8" stroke-opacity="0.6" d="M583.6 197.3L585.3 199.0"/>
<path class="l" stroke-width="1.35" d="M598.5 157.6L600.2 159.4"/>
<path shape-rendering="crispEdges" fill="#bdc0c1" d="M251.5 176.0L249.6 174.5L245.5 145.6L247.5 147.1Z"/>
<path shape-rendering="crispEdges" fill="#b4b7b8" d="M587.0 200.7L588.6 202.4L591.6 133.4L589.9 131.7Z"/>
<path shape-rendering="crispEdges" fill="#bbbebf" d="M248.2 209.1L246.2 207.5L241.5 175.5L243.5 177.1Z"/>
<path class="l" stroke-width="1.35" d="M246.2 207.5L244.3 205.8M241.5 175.5L239.6 173.8M249.6 174.5L247.7 173.0"/>
<path class="l" stroke-width="0.8" stroke-opacity="0.6" d="M585.3 199.0L587.0 200.7"/>
<path class="l" stroke-width="1.35" d="M600.2 159.4L601.9 161.3"/>
<path shape-rendering="crispEdges" fill="#bec1c2" d="M253.6 177.5L251.5 176.0L247.5 147.1L249.5 148.5Z"/>
<path shape-rendering="crispEdges" fill="#b3b6b7" d="M588.6 202.4L590.1 204.2L593.2 135.1L591.6 133.4Z"/>
<path shape-rendering="crispEdges" fill="#a7aaab" d="M601.2 160.5L594.8 161.9L595.7 162.9L597.2 164.7L598.5 166.2L604.7 164.8L601.9 161.2ZM603.5 163.1L601.9 161.3L601.9 161.2L604.7 164.8L604.9 164.8Z"/>
<path shape-rendering="crispEdges" fill="#bdc0c1" d="M250.2 210.7L248.2 209.1L243.5 177.1L245.6 178.7Z"/>
<path class="l" stroke-width="1.35" d="M251.5 176.0L249.6 174.5"/>
<path class="l" stroke-width="0.8" stroke-opacity="0.6" d="M587.0 200.7L588.6 202.4"/>
<path class="l" stroke-width="1.35" d="M248.2 209.1L246.2 207.5M243.5 177.1L241.5 175.5"/>
<path shape-rendering="crispEdges" fill="#a7aaab" d="M243.5 177.1L245.6 178.7L247.7 180.2L248.6 180.8L250.1 180.5L248.1 176.0L243.4 177.0Z"/>
<path class="l" stroke-width="1.35" d="M601.9 161.3L603.5 163.1"/>
<path shape-rendering="crispEdges" fill="#a7aaab" d="M255.7 178.9L253.6 177.5L251.5 176.0L250.9 175.5L248.1 176.0L250.1 180.5L256.2 179.2Z"/>
<path shape-rendering="crispEdges" fill="#bfc2c3" d="M255.7 178.9L253.6 177.5L249.5 148.5L251.6 149.9Z"/>
<path shape-rendering="crispEdges" fill="#b1b4b5" d="M590.1 204.2L591.6 206.0L594.7 136.8L593.2 135.1Z"/>
<path shape-rendering="crispEdges" fill="#bec1c2" d="M252.3 212.3L250.2 210.7L245.6 178.7L247.7 180.2Z"/>
<path class="l" stroke-width="1.35" d="M253.6 177.5L251.5 176.0"/>
<path class="l" stroke-width="0.8" stroke-opacity="0.6" d="M588.6 202.4L590.1 204.2"/>
<path class="l" stroke-width="1.35" d="M250.2 210.7L248.2 209.1M245.6 178.7L243.5 177.1M603.5 163.1L605.1 165.0"/>
<path shape-rendering="crispEdges" fill="#c0c3c4" d="M257.8 180.3L255.7 178.9L251.6 149.9L253.8 151.3Z"/>
<path shape-rendering="crispEdges" fill="#a7aaab" d="M608.1 168.8L606.7 166.9L605.1 165.0L604.9 164.8L604.7 164.8L608.1 169.2L608.4 169.1Z"/>
<path shape-rendering="crispEdges" fill="#b0b3b4" d="M591.6 206.0L593.1 207.8L596.3 138.6L594.7 136.8Z"/>
<path shape-rendering="crispEdges" fill="#bfc2c3" d="M254.5 213.8L252.3 212.3L247.7 180.2L249.9 181.7Z"/>
<path class="l" stroke-width="1.35" d="M255.7 178.9L253.6 177.5"/>
<path class="l" stroke-width="0.8" stroke-opacity="0.6" d="M590.1 204.2L591.6 206.0"/>
<path shape-rendering="crispEdges" fill="#a7aaab" d="M249.9 181.7L250.9 182.3L250.1 180.5L248.6 180.8ZM598.8 166.5L600.2 168.3L601.6 170.1L602.0 170.6L608.1 169.2L604.7 164.8L598.5 166.2Z"/>
<path class="l" stroke-width="1.35" d="M252.3 212.3L250.2 210.7M247.7 180.2L245.6 178.7M605.1 165.0L606.7 166.9"/>
<path shape-rendering="crispEdges" fill="#c1c4c5" d="M260.1 181.6L257.8 180.3L253.8 151.3L256.1 152.7Z"/>
<path shape-rendering="crispEdges" fill="#afb2b3" d="M593.1 207.8L594.5 209.6L597.7 140.3L596.3 138.6Z"/>
<path shape-rendering="crispEdges" fill="#a7aaab" d="M252.2 183.2L254.4 184.5L260.5 183.3L259.6 181.4L257.8 180.3L256.2 179.2L250.1 180.5L250.9 182.3Z"/>
<path shape-rendering="crispEdges" fill="#c0c3c4" d="M256.7 215.3L254.5 213.8L249.9 181.7L252.2 183.2Z"/>
<path class="l" stroke-width="1.35" d="M257.8 180.3L255.7 178.9"/>
<path class="l" stroke-width="0.8" stroke-opacity="0.6" d="M591.6 206.0L593.1 207.8"/>
<path class="l" stroke-width="1.35" d="M254.5 213.8L252.3 212.3M249.9 181.7L247.7 180.2"/>
<path shape-rendering="crispEdges" fill="#c2c5c6" d="M262.4 182.9L260.1 181.6L256.1 152.7L258.4 154.0Z"/>
<path class="l" stroke-width="1.35" d="M606.7 166.9L608.1 168.8"/>
<path shape-rendering="crispEdges" fill="#a7aaab" d="M260.1 181.6L259.6 181.4L260.5 183.3L262.3 182.9Z"/>
<path shape-rendering="crispEdges" fill="#aeb1b2" d="M594.5 209.6L595.8 211.4L599.1 142.1L597.7 140.3Z"/>
<path shape-rendering="crispEdges" fill="#a7aaab" d="M610.9 172.7L609.6 170.7L608.4 169.1L608.1 169.2L611.3 173.2Z"/>
<path shape-rendering="crispEdges" fill="#c1c4c5" d="M259.1 216.7L256.7 215.3L252.2 183.2L254.5 184.6Z"/>
<path class="l" stroke-width="1.35" d="M260.1 181.6L257.8 180.3"/>
<path class="l" stroke-width="0.8" stroke-opacity="0.6" d="M593.1 207.8L594.5 209.6"/>
<path class="l" stroke-width="1.35" d="M256.7 215.3L254.5 213.8M252.2 183.2L249.9 181.7"/>
<path shape-rendering="crispEdges" fill="#c3c6c7" d="M264.7 184.2L262.4 182.9L258.4 154.0L260.8 155.2Z"/>
<path class="l" stroke-width="1.35" d="M608.1 168.8L609.6 170.7"/>
<path shape-rendering="crispEdges" fill="#a7aaab" d="M611.3 173.2L608.1 169.2L602.0 170.6L603.0 172.0L604.3 173.9L605.1 175.1L611.6 173.6Z"/>
<path shape-rendering="crispEdges" fill="#acafb0" d="M595.8 211.4L597.1 213.3L600.5 143.9L599.1 142.1Z"/>
<path shape-rendering="crispEdges" fill="#c2c5c6" d="M261.4 218.1L259.1 216.7L254.5 184.6L256.9 186.0Z"/>
<path class="l" stroke-width="1.35" d="M262.4 182.9L260.1 181.6"/>
<path class="l" stroke-width="0.8" stroke-opacity="0.6" d="M594.5 209.6L595.8 211.4"/>
<path shape-rendering="crispEdges" fill="#a7aaab" d="M254.5 184.6L256.9 186.0L259.4 187.3L261.0 188.1L262.5 187.8L260.5 183.3L254.4 184.5Z"/>
<path class="l" stroke-width="1.35" d="M259.1 216.7L256.7 215.3M254.5 184.6L252.2 183.2"/>
<path shape-rendering="crispEdges" fill="#c4c7c8" d="M267.2 185.5L264.7 184.2L260.8 155.2L263.3 156.5Z"/>
<path shape-rendering="crispEdges" fill="#a7aaab" d="M267.2 185.5L264.7 184.2L262.4 182.9L262.3 182.9L260.5 183.3L262.5 187.8L269.2 186.4Z"/>
<path class="l" stroke-width="1.35" d="M609.6 170.7L610.9 172.7M264.7 184.2L262.4 182.9"/>
<path shape-rendering="crispEdges" fill="#c3c6c7" d="M263.9 219.5L261.4 218.1L256.9 186.0L259.4 187.3Z"/>
<path shape-rendering="crispEdges" fill="#abaeaf" d="M597.1 213.3L598.4 215.2L601.8 145.8L600.5 143.9Z"/>
<path shape-rendering="crispEdges" fill="#c5c8c9" d="M269.7 186.7L267.2 185.5L263.3 156.5L265.8 157.7Z"/>
<path class="l" stroke-width="0.8" stroke-opacity="0.6" d="M595.8 211.4L597.1 213.3"/>
<path class="l" stroke-width="1.35" d="M261.4 218.1L259.1 216.7M256.9 186.0L254.5 184.6M267.2 185.5L264.7 184.2"/>
<path shape-rendering="crispEdges" fill="#c4c7c8" d="M266.4 220.8L263.9 219.5L259.4 187.3L262.0 188.7Z"/>
<path class="l" stroke-width="1.35" d="M610.9 172.7L612.2 174.6"/>
<path shape-rendering="crispEdges" fill="#aaadae" d="M598.4 215.2L599.6 217.1L603.0 147.6L601.8 145.8Z"/>
<path shape-rendering="crispEdges" fill="#c5c8c9" d="M272.2 187.9L269.7 186.7L265.8 157.7L268.4 158.8Z"/>
<path shape-rendering="crispEdges" fill="#a7aaab" d="M262.0 188.7L263.2 189.3L262.5 187.8L261.0 188.1Z"/>
<path class="l" stroke-width="1.35" d="M263.9 219.5L261.4 218.1M259.4 187.3L256.9 186.0"/>
<path class="l" stroke-width="0.8" stroke-opacity="0.6" d="M597.1 213.3L598.4 215.2"/>
<path shape-rendering="crispEdges" fill="#a7aaab" d="M613.5 176.6L612.2 174.6L611.6 173.6L605.1 175.1L605.6 175.8L606.8 177.7L607.9 179.7L607.9 179.7L614.5 178.2Z"/>
<path class="l" stroke-width="1.35" d="M269.7 186.7L267.2 185.5"/>
<path shape-rendering="crispEdges" fill="#c4c7c8" d="M268.9 222.1L266.4 220.8L262.0 188.7L264.6 189.9Z"/>
<path shape-rendering="crispEdges" fill="#a7aaab" d="M264.6 189.9L267.3 191.2L268.2 191.6L273.1 190.6L271.7 187.6L269.7 186.7L269.2 186.4L262.5 187.8L263.2 189.3Z"/>
<path shape-rendering="crispEdges" fill="#c6c9ca" d="M274.9 189.0L272.2 187.9L268.4 158.8L271.1 160.0Z"/>
<path shape-rendering="crispEdges" fill="#a8abac" d="M599.6 217.1L600.7 219.0L604.2 149.5L603.0 147.6Z"/>
<path class="l" stroke-width="1.35" d="M612.2 174.6L613.5 176.6M266.4 220.8L263.9 219.5M262.0 188.7L259.4 187.3"/>
<path class="l" stroke-width="0.8" stroke-opacity="0.6" d="M598.4 215.2L599.6 217.1"/>
<path shape-rendering="crispEdges" fill="#a7aaab" d="M274.9 189.0L272.2 187.9L271.7 187.6L273.1 190.6L276.8 189.8Z"/>
<path class="l" stroke-width="1.35" d="M272.2 187.9L269.7 186.7"/>
<path shape-rendering="crispEdges" fill="#c5c8c9" d="M271.6 223.4L268.9 222.1L264.6 189.9L267.3 191.2Z"/>
<path shape-rendering="crispEdges" fill="#c6c9ca" d="M277.6 190.2L274.9 189.0L271.1 160.0L273.8 161.1Z"/>
<path shape-rendering="crispEdges" fill="#a7aaab" d="M600.7 219.0L601.8 220.9L605.3 151.4L604.2 149.5Z"/>
<path class="l" stroke-width="1.35" d="M268.9 222.1L266.4 220.8M264.6 189.9L262.0 188.7M613.5 176.6L614.7 178.6M274.9 189.0L272.2 187.9"/>
<path class="l" stroke-width="0.8" stroke-opacity="0.6" d="M599.6 217.1L600.7 219.0"/>
<path shape-rendering="crispEdges" fill="#c6c9ca" d="M274.3 224.6L271.6 223.4L267.3 191.2L270.0 192.4Z"/>
<path shape-rendering="crispEdges" fill="#c7cacb" d="M280.3 191.3L277.6 190.2L273.8 161.1L276.6 162.2Z"/>
<path shape-rendering="crispEdges" fill="#a7aaab" d="M270.0 192.4L272.8 193.6L274.8 194.4L273.1 190.6L268.2 191.6ZM616.9 182.7L615.8 180.6L614.7 178.6L614.5 178.2L607.9 179.7L609.0 181.6L609.6 182.7L610.8 184.3L617.0 182.9Z"/>
<path class="l" stroke-width="1.35" d="M271.6 223.4L268.9 222.1M267.3 191.2L264.6 189.9M277.6 190.2L274.9 189.0"/>
<path shape-rendering="crispEdges" fill="#a5a8a9" d="M601.8 220.9L602.8 222.9L606.4 153.2L605.3 151.4Z"/>
<path class="l" stroke-width="1.35" d="M614.7 178.6L615.8 180.6"/>
<path shape-rendering="crispEdges" fill="#c8cbcc" d="M283.1 192.4L280.3 191.3L276.6 162.2L279.5 163.3Z"/>
<path shape-rendering="crispEdges" fill="#c6c9ca" d="M277.0 225.8L274.3 224.6L270.0 192.4L272.8 193.6Z"/>
<path shape-rendering="crispEdges" fill="#a7aaab" d="M275.7 194.8L276.3 195.0L283.6 193.4L283.1 192.4L280.3 191.3L277.6 190.2L276.8 189.8L273.1 190.6L274.8 194.4Z"/>
<path class="l" stroke-width="0.8" stroke-opacity="0.6" d="M600.7 219.0L601.8 220.9"/>
<path class="l" stroke-width="1.35" d="M274.3 224.6L271.6 223.4M270.0 192.4L267.3 191.2M280.3 191.3L277.6 190.2"/>
<path shape-rendering="crispEdges" fill="#c8cbcc" d="M286.0 193.4L283.1 192.4L279.5 163.3L282.4 164.3Z"/>
<path shape-rendering="crispEdges" fill="#a7aaab" d="M283.1 192.4L283.1 192.4L283.6 193.4L285.2 193.1Z"/>
<path shape-rendering="crispEdges" fill="#c7cacb" d="M279.9 227.0L277.0 225.8L272.8 193.6L275.7 194.8Z"/>
<path shape-rendering="crispEdges" fill="#a4a7a8" d="M602.8 222.9L603.8 224.8L607.4 155.2L606.4 153.2Z"/>
<path class="l" stroke-width="1.35" d="M615.8 180.6L616.9 182.7"/>
<path shape-rendering="crispEdges" fill="#a7aaab" d="M610.0 183.6L610.4 184.4L610.8 184.3L609.6 182.7Z"/>
<path class="l" stroke-width="0.8" stroke-opacity="0.6" d="M601.8 220.9L602.8 222.9"/>
<path class="l" stroke-width="1.35" d="M283.1 192.4L280.3 191.3M277.0 225.8L274.3 224.6M272.8 193.6L270.0 192.4"/>
<path shape-rendering="crispEdges" fill="#c9cccd" d="M289.0 194.4L286.0 193.4L282.4 164.3L285.4 165.3Z"/>
<path shape-rendering="crispEdges" fill="#c7cacb" d="M282.8 228.1L279.9 227.0L275.7 194.8L278.6 195.9Z"/>
<path shape-rendering="crispEdges" fill="#a2a5a6" d="M603.8 224.8L604.7 226.8L608.4 157.1L607.4 155.2Z"/>
<path shape-rendering="crispEdges" fill="#a7aaab" d="M278.6 195.9L281.6 197.0L284.7 198.1L285.1 198.2L285.8 198.0L283.6 193.4L276.3 195.0Z"/>
<path class="l" stroke-width="1.35" d="M286.0 193.4L283.1 192.4"/>
<path shape-rendering="crispEdges" fill="#a7aaab" d="M618.9 186.8L617.9 184.7L617.0 182.9L610.8 184.3L614.4 188.9L619.3 187.7Z"/>
<path class="l" stroke-width="1.35" d="M279.9 227.0L277.0 225.8M275.7 194.8L272.8 193.6M616.9 182.7L617.9 184.7"/>
<path shape-rendering="crispEdges" fill="#c9cccd" d="M292.0 195.5L289.0 194.4L285.4 165.3L288.5 166.3Z"/>
<path class="l" stroke-width="0.8" stroke-opacity="0.6" d="M602.8 222.9L603.8 224.8"/>
<path shape-rendering="crispEdges" fill="#c8cbcc" d="M285.7 229.3L282.8 228.1L278.6 195.9L281.6 197.0Z"/>
<path shape-rendering="crispEdges" fill="#a7aaab" d="M292.0 195.5L289.0 194.4L286.0 193.4L285.2 193.1L283.6 193.4L285.8 198.0L294.3 196.2L294.2 196.2Z"/>
<path class="l" stroke-width="1.35" d="M289.0 194.4L286.0 193.4"/>
<path shape-rendering="crispEdges" fill="#a7aaab" d="M611.0 185.6L611.9 187.6L612.6 189.3L614.4 188.9L610.8 184.3L610.4 184.4Z"/>
<path shape-rendering="crispEdges" fill="#cacdce" d="M295.1 196.4L292.0 195.5L288.5 166.3L291.6 167.3Z"/>
<path class="l" stroke-width="1.35" d="M282.8 228.1L279.9 227.0M278.6 195.9L275.7 194.8"/>
<path shape-rendering="crispEdges" fill="#a0a3a4" d="M604.7 226.8L605.6 228.8L609.3 159.0L608.4 157.1Z"/>
<path shape-rendering="crispEdges" fill="#a7aaab" d="M294.2 196.2L294.3 196.2L294.4 196.2Z"/>
<path shape-rendering="crispEdges" fill="#c9cccd" d="M288.7 230.4L285.7 229.3L281.6 197.0L284.7 198.1Z"/>
<path class="l" stroke-width="0.8" stroke-opacity="0.6" d="M603.8 224.8L604.7 226.8"/>
<path class="l" stroke-width="1.35" d="M617.9 184.7L618.9 186.8M292.0 195.5L289.0 194.4"/>
<path shape-rendering="crispEdges" fill="#cacdce" d="M298.3 197.4L295.1 196.4L291.6 167.3L294.8 168.3Z"/>
<path shape-rendering="crispEdges" fill="#a7aaab" d="M286.0 198.5L285.8 198.0L285.1 198.2Z"/>
<path class="l" stroke-width="1.35" d="M285.7 229.3L282.8 228.1M281.6 197.0L278.6 195.9"/>
<path shape-rendering="crispEdges" fill="#c9cccd" d="M291.8 231.4L288.7 230.4L284.7 198.1L287.8 199.1Z"/>
<path shape-rendering="crispEdges" fill="#9fa2a3" d="M605.6 228.8L606.3 230.8L610.1 161.0L609.3 159.0Z"/>
<path class="l" stroke-width="1.35" d="M295.1 196.4L292.0 195.5"/>
<path class="l" stroke-width="0.8" stroke-opacity="0.6" d="M604.7 226.8L605.6 228.8"/>
<path shape-rendering="crispEdges" fill="#cbcecf" d="M301.5 198.4L298.3 197.4L294.8 168.3L298.1 169.2Z"/>
<path shape-rendering="crispEdges" fill="#a7aaab" d="M287.8 199.1L291.0 200.1L293.8 201.0L293.8 201.5L296.5 200.9L294.3 196.2L285.8 198.0L286.0 198.5Z"/>
<path class="l" stroke-width="1.35" d="M618.9 186.8L619.8 188.9M288.7 230.4L285.7 229.3M284.7 198.1L281.6 197.0"/>
<path shape-rendering="crispEdges" fill="#a7aaab" d="M620.6 191.0L619.8 188.9L619.3 187.7L614.4 188.9L617.9 193.4L621.2 192.7ZM295.1 196.4L294.4 196.2L294.3 196.2L296.5 200.9L301.3 199.9L301.5 198.4L298.3 197.4Z"/>
<path shape-rendering="crispEdges" fill="#cacdce" d="M294.9 232.5L291.8 231.4L287.8 199.1L291.0 200.1Z"/>
<path class="l" stroke-width="1.35" d="M298.3 197.4L295.1 196.4M301.5 198.4L298.1 169.2"/>
<path shape-rendering="crispEdges" fill="#636667" d="M310.2 241.3L310.7 237.7L302.7 167.6L302.2 171.2Z"/>
<path shape-rendering="crispEdges" fill="#9da0a1" d="M606.3 230.8L607.1 232.8L610.9 162.9L610.1 161.0Z"/>
<path class="l" stroke-width="1.35" d="M291.8 231.4L288.7 230.4M287.8 199.1L284.7 198.1"/>
<path shape-rendering="crispEdges" fill="#a7aaab" d="M612.8 189.6L613.5 191.6L614.3 193.7L614.5 194.2L617.9 193.4L614.4 188.9L612.6 189.3Z"/>
<path shape-rendering="crispEdges" fill="#cacdce" d="M297.7 233.3L294.9 232.5L291.0 200.1L293.8 201.0Z"/>
<path class="l" stroke-width="0.8" stroke-opacity="0.6" d="M605.6 228.8L606.3 230.8"/>
<path class="l" stroke-width="1.35" d="M619.8 188.9L620.6 191.0M301.5 198.4L298.3 197.4M310.7 237.7L302.7 167.6M294.9 232.5L291.8 231.4M291.0 200.1L287.8 199.1M297.7 233.3L293.8 201.0"/>
<path shape-rendering="crispEdges" fill="#9b9e9f" d="M607.1 232.8L607.8 234.8L611.6 164.9L610.9 162.9Z"/>
<path class="l" stroke-width="0.8" stroke-opacity="0.6" d="M310.2 241.3L310.7 237.7M606.3 230.8L607.1 232.8"/>
<path shape-rendering="crispEdges" fill="#636667" d="M310.0 243.5L310.2 241.3L302.2 171.2L302.0 173.3Z"/>
<path class="l" stroke-width="1.35" d="M620.6 191.0L621.4 193.1M297.7 233.3L294.9 232.5M293.8 201.0L291.0 200.1"/>
<path shape-rendering="crispEdges" fill="#a7aaab" d="M300.8 204.8L301.0 202.7L301.2 200.5L301.3 199.9L296.5 200.9L298.7 205.6L300.8 205.1ZM622.7 197.4L622.1 195.2L621.4 193.1L621.2 192.7L617.9 193.4L621.5 198.1L622.8 197.8Z"/>
<path shape-rendering="crispEdges" fill="#999c9d" d="M607.8 234.8L608.4 236.9L612.3 166.9L611.6 164.9Z"/>
<path shape-rendering="crispEdges" fill="#a7aaab" d="M293.5 205.1L293.4 206.7L298.7 205.6L296.5 200.9L293.8 201.5L293.6 202.9Z"/>
<path class="l" stroke-width="0.8" stroke-opacity="0.6" d="M607.1 232.8L607.8 234.8"/>
<path class="l" stroke-width="1.35" d="M293.6 202.9L293.8 201.0"/>
<path shape-rendering="crispEdges" fill="#636667" d="M309.9 245.6L310.0 243.5L302.0 173.3L301.9 175.4Z"/>
<path class="l" stroke-width="1.35" d="M621.4 193.1L622.1 195.2"/>
<path shape-rendering="crispEdges" fill="#a7aaab" d="M614.9 195.7L615.5 197.8L615.9 199.3L621.5 198.1L617.9 193.4L614.5 194.2Z"/>
<path class="l" stroke-width="0.8" stroke-opacity="0.6" d="M310.0 243.5L310.2 241.3"/>
<path shape-rendering="crispEdges" fill="#979a9b" d="M608.4 236.9L608.9 238.9L612.8 168.9L612.3 166.9Z"/>
<path class="l" stroke-width="0.8" stroke-opacity="0.6" d="M607.8 234.8L608.4 236.9"/>
<path class="l" stroke-width="1.35" d="M293.5 205.1L293.6 202.9"/>
<path shape-rendering="crispEdges" fill="#636667" d="M309.8 247.7L309.9 245.6L301.9 175.4L301.8 177.4Z"/>
<path class="l" stroke-width="1.35" d="M622.1 195.2L622.7 197.4"/>
<path shape-rendering="crispEdges" fill="#a7aaab" d="M623.2 199.5L622.8 197.8L621.5 198.1L623.5 200.6Z"/>
<path class="l" stroke-width="0.8" stroke-opacity="0.6" d="M309.9 245.6L310.0 243.5"/>
<path shape-rendering="crispEdges" fill="#a7aaab" d="M300.7 209.1L300.7 206.9L300.8 205.1L298.7 205.6L300.7 209.9Z"/>
<path shape-rendering="crispEdges" fill="#959899" d="M608.9 238.9L609.4 241.0L613.4 170.9L612.8 168.9Z"/>
<path class="l" stroke-width="0.8" stroke-opacity="0.6" d="M608.4 236.9L608.9 238.9"/>
<path class="l" stroke-width="1.35" d="M293.4 207.4L293.5 205.1"/>
<path shape-rendering="crispEdges" fill="#636667" d="M309.8 249.8L309.8 247.7L301.8 177.4L301.8 179.5Z"/>
<path shape-rendering="crispEdges" fill="#a7aaab" d="M293.4 207.4L293.3 209.6L293.4 211.8L293.4 211.9L300.7 210.4L300.7 209.9L298.7 205.6L293.4 206.7Z"/>
<path class="l" stroke-width="1.35" d="M622.7 197.4L623.2 199.5"/>
<path class="l" stroke-width="0.8" stroke-opacity="0.6" d="M309.8 247.7L309.9 245.6"/>
<path shape-rendering="crispEdges" fill="#a7aaab" d="M623.7 201.7L623.5 200.6L621.5 198.1L615.9 199.3L616.1 199.9L616.5 201.9L616.9 204.0L616.9 204.2L617.2 204.6L624.0 203.0Z"/>
<path shape-rendering="crispEdges" fill="#939697" d="M609.4 241.0L609.9 243.0L613.8 172.9L613.4 170.9Z"/>
<path class="l" stroke-width="0.8" stroke-opacity="0.6" d="M608.9 238.9L609.4 241.0"/>
<path class="l" stroke-width="1.35" d="M293.3 209.6L293.4 207.4"/>
<path shape-rendering="crispEdges" fill="#636667" d="M309.9 251.9L309.8 249.8L301.8 179.5L301.8 181.6Z"/>
<path class="l" stroke-width="1.35" d="M623.2 199.5L623.7 201.7"/>
<path class="l" stroke-width="0.8" stroke-opacity="0.6" d="M309.8 249.8L309.8 247.7"/>
<path shape-rendering="crispEdges" fill="#919495" d="M609.9 243.0L610.2 245.1L614.2 174.9L613.8 172.9Z"/>
<path class="l" stroke-width="0.8" stroke-opacity="0.6" d="M609.4 241.0L609.9 243.0"/>
<path shape-rendering="crispEdges" fill="#636667" d="M310.0 254.1L309.9 251.9L301.8 181.6L301.9 183.6Z"/>
<path shape-rendering="crispEdges" fill="#a7aaab" d="M617.0 204.6L617.2 204.6L616.9 204.2Z"/>
<path class="l" stroke-width="1.35" d="M293.4 211.8L293.3 209.6"/>
<path class="l" stroke-width="0.8" stroke-opacity="0.6" d="M309.9 251.9L309.8 249.8"/>
<path class="l" stroke-width="1.35" d="M623.7 201.7L624.2 203.8"/>
<path shape-rendering="crispEdges" fill="#a7aaab" d="M293.5 214.0L293.5 214.7L294.6 217.0L301.1 215.5L301.1 215.5L300.9 213.4L300.7 211.2L300.7 210.4L293.4 211.9Z"/>
<path shape-rendering="crispEdges" fill="#909394" d="M610.2 245.1L610.6 247.2L614.6 177.0L614.2 174.9Z"/>
<path shape-rendering="crispEdges" fill="#a7aaab" d="M624.9 208.2L624.5 206.0L624.2 203.8L624.0 203.0L617.2 204.6L620.8 209.3L624.9 208.3Z"/>
<path class="l" stroke-width="0.8" stroke-opacity="0.6" d="M609.9 243.0L610.2 245.1"/>
<path shape-rendering="crispEdges" fill="#636667" d="M310.2 256.2L310.0 254.1L301.9 183.6L302.1 185.7Z"/>
<path class="l" stroke-width="1.35" d="M293.5 214.0L293.4 211.8"/>
<path class="l" stroke-width="0.8" stroke-opacity="0.6" d="M310.0 254.1L309.9 251.9"/>
<path class="l" stroke-width="1.35" d="M624.2 203.8L624.5 206.0"/>
<path shape-rendering="crispEdges" fill="#8e9192" d="M610.6 247.2L610.8 249.4L614.8 179.1L614.6 177.0Z"/>
<path shape-rendering="crispEdges" fill="#a7aaab" d="M293.7 216.2L293.8 217.1L294.6 217.0L293.5 214.7Z"/>
<path class="l" stroke-width="1.35" d="M310.2 256.2L302.1 185.7"/>
<path shape-rendering="crispEdges" fill="#a7aaab" d="M617.3 206.1L617.6 208.3L617.8 210.0L620.8 209.3L617.2 204.6L617.0 204.6Z"/>
<path class="l" stroke-width="0.8" stroke-opacity="0.6" d="M610.2 245.1L610.6 247.2"/>
<path shape-rendering="crispEdges" fill="#919495" d="M301.3 217.6L301.1 215.5L297.6 186.1L297.9 188.2Z"/>
<path class="l" stroke-width="1.35" d="M293.7 216.2L293.5 214.0"/>
<path class="l" stroke-width="0.8" stroke-opacity="0.6" d="M310.2 256.2L310.0 254.1"/>
<path class="l" stroke-width="1.35" d="M624.5 206.0L624.9 208.2"/>
<path shape-rendering="crispEdges" fill="#8d9091" d="M610.8 249.4L611.1 251.5L615.1 181.1L614.8 179.1Z"/>
<path class="l" stroke-width="1.35" d="M301.1 215.5L297.6 186.1"/>
<path class="l" stroke-width="0.8" stroke-opacity="0.6" d="M610.6 247.2L610.8 249.4"/>
<path shape-rendering="crispEdges" fill="#a7aaab" d="M301.7 219.7L301.3 217.6L301.1 215.5L294.6 217.0L296.8 221.8L301.8 220.7ZM625.4 212.5L625.1 210.3L624.9 208.3L620.8 209.3L624.5 214.0L625.5 213.8Z"/>
<path shape-rendering="crispEdges" fill="#939697" d="M301.7 219.7L301.3 217.6L297.9 188.2L298.2 190.3Z"/>
<path shape-rendering="crispEdges" fill="#929596" d="M298.2 253.2L297.9 251.0L293.9 218.4L294.3 220.7Z"/>
<path class="l" stroke-width="1.35" d="M301.3 217.6L301.1 215.5M293.9 218.4L293.7 216.2"/>
<path shape-rendering="crispEdges" fill="#a7aaab" d="M293.9 218.4L294.3 220.7L294.6 222.3L296.8 221.8L294.6 217.0L293.8 217.1Z"/>
<path class="l" stroke-width="1.35" d="M624.9 208.2L625.1 210.3"/>
<path shape-rendering="crispEdges" fill="#8c8f90" d="M611.1 251.5L611.3 253.6L615.3 183.2L615.1 181.1Z"/>
<path class="l" stroke-width="1.35" d="M297.9 251.0L293.9 218.4"/>
<path class="l" stroke-width="0.8" stroke-opacity="0.6" d="M610.8 249.4L611.1 251.5"/>
<path shape-rendering="crispEdges" fill="#a7aaab" d="M617.8 210.4L618.0 212.5L618.2 214.7L618.3 215.5L624.5 214.0L620.8 209.3L617.8 210.0Z"/>
<path shape-rendering="crispEdges" fill="#959899" d="M302.1 221.9L301.7 219.7L298.2 190.3L298.6 192.4ZM298.6 255.4L298.2 253.2L294.3 220.7L294.7 222.9Z"/>
<path class="l" stroke-width="1.35" d="M301.7 219.7L301.3 217.6M298.2 253.2L297.9 251.0M294.3 220.7L293.9 218.4M625.1 210.3L625.4 212.5"/>
<path shape-rendering="crispEdges" fill="#8b8e8f" d="M611.3 253.6L611.4 255.8L615.5 185.3L615.3 183.2Z"/>
<path shape-rendering="crispEdges" fill="#a7aaab" d="M625.6 214.7L625.5 213.8L624.5 214.0L625.7 215.6Z"/>
<path class="l" stroke-width="0.8" stroke-opacity="0.6" d="M611.1 251.5L611.3 253.6"/>
<path shape-rendering="crispEdges" fill="#979a9b" d="M302.5 224.0L302.1 221.9L298.6 192.4L299.1 194.5ZM299.1 257.7L298.6 255.4L294.7 222.9L295.1 225.1Z"/>
<path class="l" stroke-width="1.35" d="M302.1 221.9L301.7 219.7"/>
<path shape-rendering="crispEdges" fill="#a7aaab" d="M302.5 224.0L302.1 221.9L301.8 220.7L296.8 221.8L299.1 226.7L303.0 225.8Z"/>
<path class="l" stroke-width="1.35" d="M298.6 255.4L298.2 253.2M294.7 222.9L294.3 220.7M625.4 212.5L625.6 214.7"/>
<path shape-rendering="crispEdges" fill="#8a8d8e" d="M611.4 255.8L611.6 257.9L615.7 187.4L615.5 185.3Z"/>
<path shape-rendering="crispEdges" fill="#a7aaab" d="M294.7 222.9L295.1 225.1L295.7 227.3L295.7 227.4L299.1 226.7L296.8 221.8L294.6 222.3Z"/>
<path class="l" stroke-width="0.8" stroke-opacity="0.6" d="M611.3 253.6L611.4 255.8"/>
<path shape-rendering="crispEdges" fill="#a7aaab" d="M626.0 219.0L625.8 216.8L625.7 215.6L624.5 214.0L618.3 215.5L618.4 216.8L618.6 218.7L620.1 220.7L626.0 219.4Z"/>
<path shape-rendering="crispEdges" fill="#999c9d" d="M303.1 226.1L302.5 224.0L299.1 194.5L299.6 196.6ZM299.6 259.9L299.1 257.7L295.1 225.1L295.7 227.3Z"/>
<path class="l" stroke-width="1.35" d="M302.5 224.0L302.1 221.9M299.1 257.7L298.6 255.4M295.1 225.1L294.7 222.9M625.6 214.7L625.8 216.8"/>
<path shape-rendering="crispEdges" fill="#8a8d8e" d="M611.6 257.9L611.8 260.1L615.9 189.6L615.7 187.4Z"/>
<path class="l" stroke-width="0.8" stroke-opacity="0.6" d="M611.4 255.8L611.6 257.9"/>
<path shape-rendering="crispEdges" fill="#9b9e9f" d="M303.7 228.2L303.1 226.1L299.6 196.6L300.3 198.7ZM300.2 262.1L299.6 259.9L295.7 227.3L296.3 229.4Z"/>
<path class="l" stroke-width="1.35" d="M303.1 226.1L302.5 224.0M625.8 216.8L626.0 219.0"/>
<path shape-rendering="crispEdges" fill="#a7aaab" d="M618.6 219.0L618.7 221.0L620.1 220.7L618.6 218.7Z"/>
<path class="l" stroke-width="1.35" d="M299.6 259.9L299.1 257.7M295.7 227.3L295.1 225.1"/>
<path shape-rendering="crispEdges" fill="#8a8d8e" d="M611.8 260.1L611.9 262.3L616.0 191.7L615.9 189.6Z"/>
<path class="l" stroke-width="0.8" stroke-opacity="0.6" d="M611.6 257.9L611.8 260.1"/>
<path shape-rendering="crispEdges" fill="#a7aaab" d="M304.4 230.3L303.7 228.2L303.1 226.1L303.0 225.8L299.1 226.7L301.4 231.6L304.6 230.9ZM296.3 229.4L297.0 231.6L297.3 232.5L301.4 231.6L299.1 226.7L295.7 227.4Z"/>
<path shape-rendering="crispEdges" fill="#9da0a1" d="M304.4 230.3L303.7 228.2L300.3 198.7L301.0 200.8Z"/>
<path class="l" stroke-width="1.35" d="M303.7 228.2L303.1 226.1"/>
<path shape-rendering="crispEdges" fill="#9da0a1" d="M300.9 264.3L300.2 262.1L296.3 229.4L297.0 231.6Z"/>
<path shape-rendering="crispEdges" fill="#a7aaab" d="M626.3 223.3L626.2 221.2L626.0 219.4L620.1 220.7L623.8 225.6L626.5 225.0Z"/>
<path class="l" stroke-width="1.35" d="M626.0 219.0L626.2 221.2M300.2 262.1L299.6 259.9M296.3 229.4L295.7 227.3"/>
<path shape-rendering="crispEdges" fill="#8a8d8e" d="M611.9 262.3L612.1 264.5L616.2 193.8L616.0 191.7Z"/>
<path class="l" stroke-width="0.8" stroke-opacity="0.6" d="M611.8 260.1L611.9 262.3"/>
<path shape-rendering="crispEdges" fill="#9fa2a3" d="M305.1 232.4L304.4 230.3L301.0 200.8L301.7 202.9Z"/>
<path shape-rendering="crispEdges" fill="#a7aaab" d="M618.8 221.1L618.9 223.3L619.1 225.5L619.2 226.7L623.8 225.6L620.1 220.7L618.7 221.0Z"/>
<path class="l" stroke-width="1.35" d="M304.4 230.3L303.7 228.2"/>
<path shape-rendering="crispEdges" fill="#9fa2a3" d="M301.7 266.5L300.9 264.3L297.0 231.6L297.8 233.8Z"/>
<path class="l" stroke-width="1.35" d="M626.2 221.2L626.3 223.3"/>
<path shape-rendering="crispEdges" fill="#8b8e8f" d="M612.1 264.5L612.2 266.7L616.4 196.0L616.2 193.8Z"/>
<path class="l" stroke-width="1.35" d="M300.9 264.3L300.2 262.1M297.0 231.6L296.3 229.4"/>
<path class="l" stroke-width="0.8" stroke-opacity="0.6" d="M611.9 262.3L612.1 264.5"/>
<path shape-rendering="crispEdges" fill="#a1a4a5" d="M305.9 234.5L305.1 232.4L301.7 202.9L302.5 204.9Z"/>
<path shape-rendering="crispEdges" fill="#a7aaab" d="M305.9 234.5L305.1 232.4L304.6 230.9L301.4 231.6L303.7 236.5L306.6 235.9Z"/>
<path class="l" stroke-width="1.35" d="M305.1 232.4L304.4 230.3"/>
<path shape-rendering="crispEdges" fill="#a7aaab" d="M627.0 229.8L626.8 227.6L626.5 225.5L626.5 225.0L623.8 225.6L627.0 229.8ZM297.8 233.8L298.6 236.0L299.3 237.5L303.7 236.5L301.4 231.6L297.3 232.5Z"/>
<path shape-rendering="crispEdges" fill="#a1a4a5" d="M302.5 268.7L301.7 266.5L297.8 233.8L298.6 236.0Z"/>
<path class="l" stroke-width="1.35" d="M626.3 223.3L626.5 225.5"/>
<path shape-rendering="crispEdges" fill="#8b8e8f" d="M612.2 266.7L612.4 268.9L616.6 198.2L616.4 196.0Z"/>
<path class="l" stroke-width="1.35" d="M301.7 266.5L300.9 264.3M297.8 233.8L297.0 231.6"/>
<path class="l" stroke-width="0.8" stroke-opacity="0.6" d="M612.1 264.5L612.2 266.7"/>
<path shape-rendering="crispEdges" fill="#a3a6a7" d="M306.8 236.6L305.9 234.5L302.5 204.9L303.4 207.0Z"/>
<path class="l" stroke-width="1.35" d="M305.9 234.5L305.1 232.4"/>
<path shape-rendering="crispEdges" fill="#a3a6a7" d="M303.4 270.9L302.5 268.7L298.6 236.0L299.5 238.1Z"/>
<path class="l" stroke-width="1.35" d="M626.5 225.5L626.8 227.6"/>
<path shape-rendering="crispEdges" fill="#a7aaab" d="M627.0 229.8L623.8 225.6L619.2 226.7L619.3 227.6L619.5 229.8L619.8 232.0L619.9 232.3L627.1 230.6Z"/>
<path shape-rendering="crispEdges" fill="#8c8f90" d="M612.4 268.9L612.6 271.2L616.8 200.3L616.6 198.2Z"/>
<path class="l" stroke-width="1.35" d="M302.5 268.7L301.7 266.5M298.6 236.0L297.8 233.8"/>
<path class="l" stroke-width="0.8" stroke-opacity="0.6" d="M612.2 266.7L612.4 268.9"/>
<path shape-rendering="crispEdges" fill="#a5a8a9" d="M307.8 238.6L306.8 236.6L303.4 207.0L304.4 209.0Z"/>
<path class="l" stroke-width="1.35" d="M306.8 236.6L305.9 234.5M626.8 227.6L627.0 229.8"/>
<path shape-rendering="crispEdges" fill="#a4a7a8" d="M304.4 273.0L303.4 270.9L299.5 238.1L300.5 240.3Z"/>
<path shape-rendering="crispEdges" fill="#a7aaab" d="M308.8 240.7L307.8 238.6L306.8 236.6L306.6 235.9L303.7 236.5L306.0 241.6L308.9 240.9Z"/>
<path shape-rendering="crispEdges" fill="#8d9091" d="M612.6 271.2L612.9 273.4L617.1 202.5L616.8 200.3Z"/>
<path class="l" stroke-width="1.35" d="M303.4 270.9L302.5 268.7M299.5 238.1L298.6 236.0"/>
<path shape-rendering="crispEdges" fill="#a7aaab" d="M299.5 238.1L300.5 240.3L301.5 242.4L301.6 242.5L306.0 241.6L303.7 236.5L299.3 237.5Z"/>
<path class="l" stroke-width="0.8" stroke-opacity="0.6" d="M612.4 268.9L612.6 271.2"/>
<path shape-rendering="crispEdges" fill="#a6a9aa" d="M308.8 240.7L307.8 238.6L304.4 209.0L305.4 211.1Z"/>
<path class="l" stroke-width="1.35" d="M307.8 238.6L306.8 236.6M627.0 229.8L627.3 231.9"/>
<path shape-rendering="crispEdges" fill="#a6a9aa" d="M305.4 275.2L304.4 273.0L300.5 240.3L301.5 242.4Z"/>
<path shape-rendering="crispEdges" fill="#8f9293" d="M612.9 273.4L613.2 275.7L617.4 204.7L617.1 202.5Z"/>
<path class="l" stroke-width="1.35" d="M304.4 273.0L303.4 270.9M300.5 240.3L299.5 238.1"/>
<path shape-rendering="crispEdges" fill="#a7aaab" d="M628.0 236.1L627.6 234.0L627.3 231.9L627.1 230.6L619.9 232.3L620.0 233.2L623.1 237.4L628.0 236.2Z"/>
<path class="l" stroke-width="0.8" stroke-opacity="0.6" d="M612.6 271.2L612.9 273.4"/>
<path shape-rendering="crispEdges" fill="#a8abac" d="M309.9 242.7L308.8 240.7L305.4 211.1L306.5 213.1Z"/>
<path class="l" stroke-width="1.35" d="M308.8 240.7L307.8 238.6M627.3 231.9L627.6 234.0"/>
<path shape-rendering="crispEdges" fill="#a8abac" d="M306.5 277.4L305.4 275.2L301.5 242.4L302.7 244.6Z"/>
<path shape-rendering="crispEdges" fill="#909394" d="M613.2 275.7L613.5 277.9L617.8 206.9L617.4 204.7Z"/>
<path class="l" stroke-width="1.35" d="M305.4 275.2L304.4 273.0M301.5 242.4L300.5 240.3"/>
<path class="l" stroke-width="0.8" stroke-opacity="0.6" d="M612.9 273.4L613.2 275.7"/>
<path shape-rendering="crispEdges" fill="#a7aaab" d="M620.1 234.2L620.5 236.4L620.8 237.9L623.1 237.4L620.0 233.2ZM311.1 244.8L309.9 242.7L308.9 240.9L306.0 241.6L308.4 246.6L311.7 245.9Z"/>
<path shape-rendering="crispEdges" fill="#aaadae" d="M311.1 244.8L309.9 242.7L306.5 213.1L307.7 215.1Z"/>
<path shape-rendering="crispEdges" fill="#a7aaab" d="M302.7 244.6L303.9 246.7L304.4 247.5L308.4 246.6L306.0 241.6L301.6 242.5Z"/>
<path class="l" stroke-width="1.35" d="M309.9 242.7L308.8 240.7M627.6 234.0L628.0 236.1"/>
<path shape-rendering="crispEdges" fill="#a9acad" d="M307.7 279.5L306.5 277.4L302.7 244.6L303.9 246.7Z"/>
<path shape-rendering="crispEdges" fill="#929596" d="M613.5 277.9L614.0 280.2L618.2 209.1L617.8 206.9Z"/>
<path class="l" stroke-width="1.35" d="M306.5 277.4L305.4 275.2M302.7 244.6L301.5 242.4"/>
<path class="l" stroke-width="0.8" stroke-opacity="0.6" d="M613.2 275.7L613.5 277.9"/>
<path shape-rendering="crispEdges" fill="#abaeaf" d="M312.3 246.8L311.1 244.8L307.7 215.1L309.0 217.1Z"/>
<path shape-rendering="crispEdges" fill="#a7aaab" d="M628.9 240.4L628.4 238.3L628.0 236.2L623.1 237.4L626.9 242.4L629.3 241.8Z"/>
<path class="l" stroke-width="1.35" d="M311.1 244.8L309.9 242.7M628.0 236.1L628.4 238.3"/>
<path shape-rendering="crispEdges" fill="#abaeaf" d="M309.0 281.6L307.7 279.5L303.9 246.7L305.1 248.8Z"/>
<path shape-rendering="crispEdges" fill="#949798" d="M614.0 280.2L614.4 282.5L618.7 211.4L618.2 209.1Z"/>
<path class="l" stroke-width="1.35" d="M307.7 279.5L306.5 277.4M303.9 246.7L302.7 244.6"/>
<path shape-rendering="crispEdges" fill="#a7aaab" d="M620.9 238.6L621.4 240.8L622.0 242.9L622.1 243.5L626.9 242.4L623.1 237.4L620.8 237.9Z"/>
<path class="l" stroke-width="0.8" stroke-opacity="0.6" d="M613.5 277.9L614.0 280.2"/>
<path shape-rendering="crispEdges" fill="#adb0b1" d="M313.6 248.8L312.3 246.8L309.0 217.1L310.3 219.1Z"/>
<path class="l" stroke-width="1.35" d="M312.3 246.8L311.1 244.8M628.4 238.3L628.9 240.4"/>
<path shape-rendering="crispEdges" fill="#a7aaab" d="M313.6 248.8L312.3 246.8L311.7 245.9L308.4 246.6L310.8 251.7L314.9 250.8ZM305.1 248.8L306.5 250.9L307.5 252.4L310.8 251.7L308.4 246.6L304.4 247.5Z"/>
<path shape-rendering="crispEdges" fill="#acafb0" d="M310.3 283.8L309.0 281.6L305.1 248.8L306.5 250.9Z"/>
<path shape-rendering="crispEdges" fill="#96999a" d="M614.4 282.5L615.0 284.7L619.3 213.6L618.7 211.4Z"/>
<path class="l" stroke-width="1.35" d="M309.0 281.6L307.7 279.5M305.1 248.8L303.9 246.7"/>
<path class="l" stroke-width="0.8" stroke-opacity="0.6" d="M614.0 280.2L614.4 282.5"/>
<path shape-rendering="crispEdges" fill="#aeb1b2" d="M315.0 250.8L313.6 248.8L310.3 219.1L311.7 221.1Z"/>
<path shape-rendering="crispEdges" fill="#a7aaab" d="M630.7 246.7L630.0 244.6L629.4 242.5L629.3 241.8L626.9 242.4L630.7 247.5L630.9 247.4Z"/>
<path class="l" stroke-width="1.35" d="M313.6 248.8L312.3 246.8M628.9 240.4L629.4 242.5"/>
<path shape-rendering="crispEdges" fill="#aeb1b2" d="M311.7 285.9L310.3 283.8L306.5 250.9L307.9 253.0Z"/>
<path shape-rendering="crispEdges" fill="#979a9b" d="M615.0 284.7L615.6 287.0L619.9 215.8L619.3 213.6Z"/>
<path class="l" stroke-width="1.35" d="M310.3 283.8L309.0 281.6M306.5 250.9L305.1 248.8"/>
<path class="l" stroke-width="0.8" stroke-opacity="0.6" d="M614.4 282.5L615.0 284.7"/>
<path shape-rendering="crispEdges" fill="#b0b3b4" d="M316.4 252.8L315.0 250.8L311.7 221.1L313.1 223.1Z"/>
<path shape-rendering="crispEdges" fill="#a7aaab" d="M622.6 245.1L623.2 247.3L623.8 249.1L630.7 247.5L626.9 242.4L622.1 243.5Z"/>
<path class="l" stroke-width="1.35" d="M629.4 242.5L630.0 244.6M315.0 250.8L313.6 248.8"/>
<path shape-rendering="crispEdges" fill="#afb2b3" d="M313.1 288.0L311.7 285.9L307.9 253.0L309.4 255.1Z"/>
<path shape-rendering="crispEdges" fill="#999c9d" d="M615.6 287.0L616.2 289.3L620.6 218.0L619.9 215.8Z"/>
<path shape-rendering="crispEdges" fill="#a7aaab" d="M630.9 247.4L630.7 247.5L631.1 248.0ZM317.9 254.8L316.4 252.8L315.0 250.8L314.9 250.8L310.8 251.7L313.1 256.9L318.6 255.6Z"/>
<path class="l" stroke-width="1.35" d="M311.7 285.9L310.3 283.8M307.9 253.0L306.5 250.9"/>
<path shape-rendering="crispEdges" fill="#a7aaab" d="M307.9 253.0L309.4 255.1L310.9 257.1L311.1 257.3L313.1 256.9L310.8 251.7L307.5 252.4Z"/>
<path class="l" stroke-width="0.8" stroke-opacity="0.6" d="M615.0 284.7L615.6 287.0"/>
<path shape-rendering="crispEdges" fill="#b1b4b5" d="M317.9 254.8L316.4 252.8L313.1 223.1L314.7 225.1Z"/>
<path class="l" stroke-width="1.35" d="M630.0 244.6L630.7 246.7M316.4 252.8L315.0 250.8"/>
<path shape-rendering="crispEdges" fill="#b1b4b5" d="M314.7 290.0L313.1 288.0L309.4 255.1L310.9 257.1Z"/>
<path shape-rendering="crispEdges" fill="#9a9d9e" d="M616.2 289.3L616.9 291.5L621.4 220.2L620.6 218.0Z"/>
<path class="l" stroke-width="1.35" d="M313.1 288.0L311.7 285.9M309.4 255.1L307.9 253.0"/>
<path shape-rendering="crispEdges" fill="#b2b5b6" d="M319.5 256.8L317.9 254.8L314.7 225.1L316.3 227.0Z"/>
<path class="l" stroke-width="0.8" stroke-opacity="0.6" d="M615.6 287.0L616.2 289.3"/>
<path class="l" stroke-width="1.35" d="M630.7 246.7L631.4 248.9M317.9 254.8L316.4 252.8"/>
<path shape-rendering="crispEdges" fill="#a7aaab" d="M632.2 251.0L631.4 248.9L631.1 248.0L630.7 247.5L623.8 249.1L624.0 249.6L624.8 251.8L625.4 253.4L626.2 254.6L632.9 253.0Z"/>
<path shape-rendering="crispEdges" fill="#b2b5b6" d="M316.3 292.1L314.7 290.0L310.9 257.1L312.5 259.2Z"/>
<path shape-rendering="crispEdges" fill="#9c9fa0" d="M616.9 291.5L617.7 293.8L622.2 222.5L621.4 220.2Z"/>
<path shape-rendering="crispEdges" fill="#b4b7b8" d="M321.2 258.8L319.5 256.8L316.3 227.0L317.9 229.0Z"/>
<path class="l" stroke-width="1.35" d="M314.7 290.0L313.1 288.0M310.9 257.1L309.4 255.1"/>
<path class="l" stroke-width="0.8" stroke-opacity="0.6" d="M616.2 289.3L616.9 291.5"/>
<path class="l" stroke-width="1.35" d="M631.4 248.9L632.2 251.0"/>
<path shape-rendering="crispEdges" fill="#a7aaab" d="M312.5 259.2L314.2 261.2L315.1 262.2L315.6 262.0L313.1 256.9L311.1 257.3Z"/>
<path class="l" stroke-width="1.35" d="M319.5 256.8L317.9 254.8"/>
<path shape-rendering="crispEdges" fill="#a7aaab" d="M321.2 258.8L319.5 256.8L318.6 255.6L313.1 256.9L315.6 262.0L322.6 260.4Z"/>
<path shape-rendering="crispEdges" fill="#b3b6b7" d="M317.9 294.2L316.3 292.1L312.5 259.2L314.2 261.2Z"/>
<path shape-rendering="crispEdges" fill="#9da0a1" d="M617.7 293.8L618.5 296.1L623.0 224.7L622.2 222.5Z"/>
<path shape-rendering="crispEdges" fill="#b5b8b9" d="M322.9 260.7L321.2 258.8L317.9 229.0L319.7 230.9Z"/>
<path class="l" stroke-width="1.35" d="M316.3 292.1L314.7 290.0M312.5 259.2L310.9 257.1"/>
<path class="l" stroke-width="0.8" stroke-opacity="0.6" d="M616.9 291.5L617.7 293.8"/>
<path shape-rendering="crispEdges" fill="#a7aaab" d="M625.6 254.0L625.9 254.7L626.2 254.6L625.4 253.4Z"/>
<path class="l" stroke-width="1.35" d="M632.2 251.0L633.0 253.2M321.2 258.8L319.5 256.8"/>
<path shape-rendering="crispEdges" fill="#b4b7b8" d="M319.7 296.2L317.9 294.2L314.2 261.2L316.0 263.2Z"/>
<path shape-rendering="crispEdges" fill="#9ea1a2" d="M618.5 296.1L619.4 298.4L623.9 227.0L623.0 224.7Z"/>
<path shape-rendering="crispEdges" fill="#a7aaab" d="M634.8 257.6L633.9 255.4L633.0 253.2L632.9 253.0L626.2 254.6L630.1 259.7L635.2 258.5Z"/>
<path shape-rendering="crispEdges" fill="#b6b9ba" d="M324.6 262.6L322.9 260.7L319.7 230.9L321.5 232.8Z"/>
<path shape-rendering="crispEdges" fill="#a7aaab" d="M316.0 263.2L316.3 263.5L315.6 262.0L315.1 262.2Z"/>
<path class="l" stroke-width="1.35" d="M317.9 294.2L316.3 292.1M314.2 261.2L312.5 259.2"/>
<path class="l" stroke-width="0.8" stroke-opacity="0.6" d="M617.7 293.8L618.5 296.1"/>
<path class="l" stroke-width="1.35" d="M633.0 253.2L633.9 255.4M322.9 260.7L321.2 258.8"/>
<path shape-rendering="crispEdges" fill="#a7aaab" d="M626.5 256.2L627.4 258.5L628.2 260.2L630.1 259.7L626.2 254.6L625.9 254.7ZM317.8 265.2L319.5 267.0L327.0 265.2L326.8 264.8L326.5 264.5L324.6 262.6L322.9 260.7L322.6 260.4L315.6 262.0L316.3 263.5Z"/>
<path shape-rendering="crispEdges" fill="#b6b9ba" d="M321.5 298.2L319.7 296.2L316.0 263.2L317.8 265.2Z"/>
<path shape-rendering="crispEdges" fill="#9fa2a3" d="M619.4 298.4L620.3 300.7L624.9 229.2L623.9 227.0Z"/>
<path shape-rendering="crispEdges" fill="#b7babb" d="M326.5 264.5L324.6 262.6L321.5 232.8L323.3 234.7Z"/>
<path class="l" stroke-width="1.35" d="M319.7 296.2L317.9 294.2M316.0 263.2L314.2 261.2"/>
<path class="l" stroke-width="0.8" stroke-opacity="0.6" d="M618.5 296.1L619.4 298.4"/>
<path class="l" stroke-width="1.35" d="M633.9 255.4L634.8 257.6M324.6 262.6L322.9 260.7"/>
<path shape-rendering="crispEdges" fill="#a7aaab" d="M326.8 264.8L327.0 265.2L327.2 265.2Z"/>
<path shape-rendering="crispEdges" fill="#b7babb" d="M323.3 300.3L321.5 298.2L317.8 265.2L319.7 267.2Z"/>
<path shape-rendering="crispEdges" fill="#b8bbbc" d="M328.4 266.4L326.5 264.5L323.3 234.7L325.3 236.6Z"/>
<path shape-rendering="crispEdges" fill="#a1a4a5" d="M620.3 300.7L621.2 303.0L625.9 231.5L624.9 229.2Z"/>
<path class="l" stroke-width="1.35" d="M321.5 298.2L319.7 296.2M317.8 265.2L316.0 263.2"/>
<path class="l" stroke-width="0.8" stroke-opacity="0.6" d="M619.4 298.4L620.3 300.7"/>
<path class="l" stroke-width="1.35" d="M634.8 257.6L635.8 259.8M326.5 264.5L324.6 262.6"/>
<path shape-rendering="crispEdges" fill="#a7aaab" d="M636.8 262.0L635.8 259.8L635.2 258.5L630.1 259.7L633.9 265.0L637.8 264.0Z"/>
<path shape-rendering="crispEdges" fill="#b8bbbc" d="M325.3 302.2L323.3 300.3L319.7 267.2L321.7 269.2Z"/>
<path shape-rendering="crispEdges" fill="#b9bcbd" d="M330.4 268.3L328.4 266.4L325.3 236.6L327.3 238.4Z"/>
<path shape-rendering="crispEdges" fill="#a1a4a5" d="M621.2 303.0L622.2 305.4L627.0 233.8L625.9 231.5Z"/>
<path shape-rendering="crispEdges" fill="#a7aaab" d="M628.4 260.7L629.4 263.0L630.5 265.3L630.7 265.7L633.9 265.0L630.1 259.7L628.2 260.2Z"/>
<path class="l" stroke-width="1.35" d="M323.3 300.3L321.5 298.2M319.7 267.2L317.8 265.2"/>
<path shape-rendering="crispEdges" fill="#a7aaab" d="M319.7 267.2L321.7 269.2L323.7 271.2L324.3 271.7L329.5 270.5L327.0 265.2L319.5 267.0Z"/>
<path class="l" stroke-width="1.35" d="M328.4 266.4L326.5 264.5M635.8 259.8L636.8 262.0"/>
<path class="l" stroke-width="0.8" stroke-opacity="0.6" d="M620.3 300.7L621.2 303.0"/>
<path shape-rendering="crispEdges" fill="#a7aaab" d="M330.4 268.3L328.4 266.4L327.2 265.2L327.0 265.2L329.5 270.5L332.1 269.9Z"/>
<path shape-rendering="crispEdges" fill="#babdbe" d="M332.4 270.2L330.4 268.3L327.3 238.4L329.4 240.3Z"/>
<path shape-rendering="crispEdges" fill="#b9bcbd" d="M327.3 304.2L325.3 302.2L321.7 269.2L323.7 271.2Z"/>
<path shape-rendering="crispEdges" fill="#a2a5a6" d="M622.2 305.4L623.3 307.7L628.1 236.1L627.0 233.8Z"/>
<path class="l" stroke-width="1.35" d="M325.3 302.2L323.3 300.3M321.7 269.2L319.7 267.2M330.4 268.3L328.4 266.4M636.8 262.0L637.9 264.3"/>
<path class="l" stroke-width="0.8" stroke-opacity="0.6" d="M621.2 303.0L622.2 305.4"/>
<path shape-rendering="crispEdges" fill="#a7aaab" d="M640.2 268.8L639.0 266.6L637.9 264.3L637.8 264.0L633.9 265.0L637.9 270.2L640.5 269.6Z"/>
<path shape-rendering="crispEdges" fill="#bbbebf" d="M334.5 272.0L332.4 270.2L329.4 240.3L331.5 242.1Z"/>
<path shape-rendering="crispEdges" fill="#babdbe" d="M329.4 306.2L327.3 304.2L323.7 271.2L325.9 273.1Z"/>
<path shape-rendering="crispEdges" fill="#a3a6a7" d="M623.3 307.7L624.4 310.1L629.2 238.4L628.1 236.1Z"/>
<path class="l" stroke-width="1.35" d="M332.4 270.2L330.4 268.3M327.3 304.2L325.3 302.2M323.7 271.2L321.7 269.2M637.9 264.3L639.0 266.6"/>
<path class="l" stroke-width="0.8" stroke-opacity="0.6" d="M622.2 305.4L623.3 307.7"/>
<path shape-rendering="crispEdges" fill="#a7aaab" d="M631.6 267.6L632.8 270.0L633.5 271.3L637.9 270.2L633.9 265.0L630.7 265.7ZM325.9 273.1L328.0 275.0L329.6 276.4L332.0 275.8L329.5 270.5L324.3 271.7ZM336.7 273.9L334.5 272.0L332.4 270.2L332.1 269.9L329.5 270.5L332.0 275.8L337.5 274.5Z"/>
<path shape-rendering="crispEdges" fill="#bcbfc0" d="M336.7 273.9L334.5 272.0L331.5 242.1L333.7 243.9Z"/>
<path shape-rendering="crispEdges" fill="#bbbebf" d="M331.5 308.1L329.4 306.2L325.9 273.1L328.0 275.0Z"/>
<path class="l" stroke-width="1.35" d="M334.5 272.0L332.4 270.2M329.4 306.2L327.3 304.2M325.9 273.1L323.7 271.2"/>
<path shape-rendering="crispEdges" fill="#a4a7a8" d="M624.4 310.1L625.5 312.5L630.4 240.7L629.2 238.4Z"/>
<path class="l" stroke-width="1.35" d="M639.0 266.6L640.2 268.8"/>
<path class="l" stroke-width="0.8" stroke-opacity="0.6" d="M623.3 307.7L624.4 310.1"/>
<path shape-rendering="crispEdges" fill="#bdc0c1" d="M338.9 275.7L336.7 273.9L333.7 243.9L336.0 245.7Z"/>
<path shape-rendering="crispEdges" fill="#bcbfc0" d="M333.7 310.0L331.5 308.1L328.0 275.0L330.3 276.9Z"/>
<path class="l" stroke-width="1.35" d="M336.7 273.9L334.5 272.0"/>
<path shape-rendering="crispEdges" fill="#a7aaab" d="M642.6 273.5L641.4 271.2L640.5 269.6L637.9 270.2L641.8 275.5L643.4 275.1Z"/>
<path class="l" stroke-width="1.35" d="M331.5 308.1L329.4 306.2M328.0 275.0L325.9 273.1"/>
<path shape-rendering="crispEdges" fill="#a4a7a8" d="M625.5 312.5L626.7 314.9L631.6 243.1L630.4 240.7Z"/>
<path class="l" stroke-width="1.35" d="M640.2 268.8L641.4 271.2"/>
<path class="l" stroke-width="0.8" stroke-opacity="0.6" d="M624.4 310.1L625.5 312.5"/>
<path shape-rendering="crispEdges" fill="#bdc0c1" d="M341.2 277.5L338.9 275.7L336.0 245.7L338.3 247.5Z"/>
<path shape-rendering="crispEdges" fill="#a7aaab" d="M330.3 276.9L332.5 278.8L333.9 279.9L332.0 275.8L329.6 276.4ZM634.0 272.3L635.2 274.7L636.3 276.9L641.8 275.5L637.9 270.2L633.5 271.3Z"/>
<path shape-rendering="crispEdges" fill="#bcbfc0" d="M335.9 311.9L333.7 310.0L330.3 276.9L332.5 278.8Z"/>
<path class="l" stroke-width="1.35" d="M338.9 275.7L336.7 273.9"/>
<path shape-rendering="crispEdges" fill="#a7aaab" d="M334.8 280.6L335.3 281.0L343.3 279.2L341.2 277.5L338.9 275.7L337.5 274.5L332.0 275.8L333.9 279.9Z"/>
<path class="l" stroke-width="1.35" d="M333.7 310.0L331.5 308.1M330.3 276.9L328.0 275.0"/>
<path shape-rendering="crispEdges" fill="#a5a8a9" d="M626.7 314.9L627.8 317.3L632.8 245.4L631.6 243.1Z"/>
<path class="l" stroke-width="1.35" d="M641.4 271.2L642.6 273.5"/>
<path shape-rendering="crispEdges" fill="#bec1c2" d="M343.5 279.3L341.2 277.5L338.3 247.5L340.6 249.3Z"/>
<path class="l" stroke-width="0.8" stroke-opacity="0.6" d="M625.5 312.5L626.7 314.9"/>
<path shape-rendering="crispEdges" fill="#bdc0c1" d="M338.2 313.8L335.9 311.9L332.5 278.8L334.8 280.6Z"/>
<path class="l" stroke-width="1.35" d="M341.2 277.5L338.9 275.7M335.9 311.9L333.7 310.0M332.5 278.8L330.3 276.9"/>
<path shape-rendering="crispEdges" fill="#a5a8a9" d="M627.8 317.3L629.0 319.7L634.1 247.8L632.8 245.4Z"/>
<path shape-rendering="crispEdges" fill="#bec1c2" d="M345.8 281.1L343.5 279.3L340.6 249.3L343.0 251.1Z"/>
<path shape-rendering="crispEdges" fill="#a7aaab" d="M646.3 280.7L645.1 278.3L643.8 275.9L643.4 275.1L641.8 275.5L645.8 280.9L646.3 280.8Z"/>
<path class="l" stroke-width="1.35" d="M642.6 273.5L643.8 275.9"/>
<path class="l" stroke-width="0.8" stroke-opacity="0.6" d="M626.7 314.9L627.8 317.3"/>
<path shape-rendering="crispEdges" fill="#bdc0c1" d="M340.5 315.6L338.2 313.8L334.8 280.6L337.2 282.5Z"/>
<path class="l" stroke-width="1.35" d="M343.5 279.3L341.2 277.5M338.2 313.8L335.9 311.9M334.8 280.6L332.5 278.8"/>
<path shape-rendering="crispEdges" fill="#a7aaab" d="M636.4 277.1L637.6 279.5L638.9 281.9L639.2 282.5L645.8 280.9L641.8 275.5L636.3 276.9ZM337.2 282.5L339.6 284.3L341.3 285.6L346.2 284.5L343.7 279.5L343.5 279.3L343.3 279.2L335.3 281.0Z"/>
<path shape-rendering="crispEdges" fill="#bec1c2" d="M348.2 282.9L345.8 281.1L343.0 251.1L345.4 252.8Z"/>
<path shape-rendering="crispEdges" fill="#a5a8a9" d="M629.0 319.7L630.2 322.1L635.3 250.2L634.1 247.8Z"/>
<path class="l" stroke-width="1.35" d="M643.8 275.9L645.1 278.3"/>
<path shape-rendering="crispEdges" fill="#a7aaab" d="M348.2 282.9L345.8 281.1L343.7 279.5L346.2 284.5L349.4 283.8Z"/>
<path shape-rendering="crispEdges" fill="#bec1c2" d="M342.9 317.5L340.5 315.6L337.2 282.5L339.6 284.3Z"/>
<path class="l" stroke-width="0.8" stroke-opacity="0.6" d="M627.8 317.3L629.0 319.7"/>
<path class="l" stroke-width="1.35" d="M345.8 281.1L343.5 279.3M340.5 315.6L338.2 313.8M337.2 282.5L334.8 280.6"/>
<path shape-rendering="crispEdges" fill="#a7aaab" d="M647.5 283.2L646.3 280.8L645.8 280.9L647.6 283.4Z"/>
<path shape-rendering="crispEdges" fill="#bfc2c3" d="M350.6 284.7L348.2 282.9L345.4 252.8L347.8 254.6Z"/>
<path shape-rendering="crispEdges" fill="#a4a7a8" d="M630.2 322.1L631.4 324.5L636.5 252.5L635.3 250.2Z"/>
<path shape-rendering="crispEdges" fill="#bec1c2" d="M345.2 319.3L342.9 317.5L339.6 284.3L341.9 286.1Z"/>
<path class="l" stroke-width="1.35" d="M645.1 278.3L646.3 280.7M348.2 282.9L345.8 281.1"/>
<path class="l" stroke-width="0.8" stroke-opacity="0.6" d="M629.0 319.7L630.2 322.1"/>
<path class="l" stroke-width="1.35" d="M342.9 317.5L340.5 315.6M339.6 284.3L337.2 282.5"/>
<path shape-rendering="crispEdges" fill="#bfc2c3" d="M353.0 286.5L350.6 284.7L347.8 254.6L350.3 256.4Z"/>
<path shape-rendering="crispEdges" fill="#bec1c2" d="M347.6 321.2L345.2 319.3L341.9 286.1L344.3 287.9Z"/>
<path shape-rendering="crispEdges" fill="#a4a7a8" d="M631.4 324.5L632.5 327.0L637.7 254.9L636.5 252.5Z"/>
<path class="l" stroke-width="1.35" d="M350.6 284.7L348.2 282.9"/>
<path shape-rendering="crispEdges" fill="#a7aaab" d="M648.8 285.6L647.6 283.4L645.8 280.9L639.2 282.5L640.1 284.3L641.2 286.7L642.0 288.3L649.2 286.5ZM341.9 286.1L344.3 287.9L346.8 289.8L347.4 290.3L348.8 290.0L346.2 284.5L341.3 285.6Z"/>
<path class="l" stroke-width="1.35" d="M646.3 280.7L647.5 283.2"/>
<path shape-rendering="crispEdges" fill="#a7aaab" d="M355.4 288.3L353.0 286.5L350.6 284.7L349.4 283.8L346.2 284.5L348.8 290.0L355.6 288.4Z"/>
<path class="l" stroke-width="0.8" stroke-opacity="0.6" d="M630.2 322.1L631.4 324.5"/>
<path class="l" stroke-width="1.35" d="M345.2 319.3L342.9 317.5M341.9 286.1L339.6 284.3"/>
<path shape-rendering="crispEdges" fill="#bfc2c3" d="M355.4 288.3L353.0 286.5L350.3 256.4L352.7 258.2Z"/>
<path shape-rendering="crispEdges" fill="#bec1c2" d="M349.9 323.0L347.6 321.2L344.3 287.9L346.8 289.8Z"/>
<path class="l" stroke-width="1.35" d="M353.0 286.5L350.6 284.7"/>
<path shape-rendering="crispEdges" fill="#a3a6a7" d="M632.5 327.0L633.6 329.4L638.9 257.3L637.7 254.9Z"/>
<path class="l" stroke-width="1.35" d="M647.5 283.2L648.8 285.6M347.6 321.2L345.2 319.3M344.3 287.9L341.9 286.1"/>
<path class="l" stroke-width="0.8" stroke-opacity="0.6" d="M631.4 324.5L632.5 327.0"/>
<path shape-rendering="crispEdges" fill="#bfc2c3" d="M357.8 290.1L355.4 288.3L352.7 258.2L355.2 260.0Z"/>
<path shape-rendering="crispEdges" fill="#bec1c2" d="M352.3 324.8L349.9 323.0L346.8 289.8L349.2 291.6Z"/>
<path shape-rendering="crispEdges" fill="#a7aaab" d="M349.2 291.6L349.8 292.1L348.8 290.0L347.4 290.3Z"/>
<path class="l" stroke-width="1.35" d="M355.4 288.3L353.0 286.5"/>
<path shape-rendering="crispEdges" fill="#a3a6a7" d="M633.6 329.4L634.7 331.8L640.1 259.7L638.9 257.3Z"/>
<path class="l" stroke-width="1.35" d="M349.9 323.0L347.6 321.2M346.8 289.8L344.3 287.9M648.8 285.6L649.9 288.1"/>
<path shape-rendering="crispEdges" fill="#bec1c2" d="M360.2 291.9L357.8 290.1L355.2 260.0L357.6 261.8Z"/>
<path class="l" stroke-width="0.8" stroke-opacity="0.6" d="M632.5 327.0L633.6 329.4"/>
<path shape-rendering="crispEdges" fill="#a7aaab" d="M351.6 293.4L353.6 294.9L360.6 293.3L359.7 291.5L357.8 290.1L355.6 288.4L348.8 290.0L349.8 292.1ZM651.1 290.6L649.9 288.1L649.2 286.5L642.0 288.3L642.4 289.2L643.3 291.1L645.3 293.9L651.8 292.3Z"/>
<path shape-rendering="crispEdges" fill="#bec1c2" d="M354.6 326.6L352.3 324.8L349.2 291.6L351.6 293.4Z"/>
<path class="l" stroke-width="1.35" d="M357.8 290.1L355.4 288.3M352.3 324.8L349.9 323.0M349.2 291.6L346.8 289.8"/>
<path shape-rendering="crispEdges" fill="#a7aaab" d="M360.2 291.9L359.7 291.5L360.6 293.3L361.7 293.0Z"/>
<path shape-rendering="crispEdges" fill="#a2a5a6" d="M634.7 331.8L635.8 334.3L641.2 262.1L640.1 259.7Z"/>
<path shape-rendering="crispEdges" fill="#bec1c2" d="M362.6 293.7L360.2 291.9L357.6 261.8L360.0 263.6Z"/>
<path class="l" stroke-width="1.35" d="M649.9 288.1L651.1 290.6"/>
<path class="l" stroke-width="0.8" stroke-opacity="0.6" d="M633.6 329.4L634.7 331.8"/>
<path shape-rendering="crispEdges" fill="#bec1c2" d="M357.0 328.5L354.6 326.6L351.6 293.4L353.9 295.2Z"/>
<path class="l" stroke-width="1.35" d="M360.2 291.9L357.8 290.1"/>
<path shape-rendering="crispEdges" fill="#a7aaab" d="M643.5 291.6L644.6 294.1L644.6 294.1L645.3 293.9L643.3 291.1Z"/>
<path class="l" stroke-width="1.35" d="M354.6 326.6L352.3 324.8M351.6 293.4L349.2 291.6"/>
<path shape-rendering="crispEdges" fill="#bec1c2" d="M365.0 295.6L362.6 293.7L360.0 263.6L362.5 265.5Z"/>
<path shape-rendering="crispEdges" fill="#a0a3a4" d="M635.8 334.3L636.8 336.7L642.2 264.5L641.2 262.1Z"/>
<path class="l" stroke-width="1.35" d="M651.1 290.6L652.2 293.2"/>
<path class="l" stroke-width="0.8" stroke-opacity="0.6" d="M634.7 331.8L635.8 334.3"/>
<path shape-rendering="crispEdges" fill="#bec1c2" d="M359.3 330.3L357.0 328.5L353.9 295.2L356.3 297.0Z"/>
<path class="l" stroke-width="1.35" d="M362.6 293.7L360.2 291.9"/>
<path shape-rendering="crispEdges" fill="#a7aaab" d="M353.9 295.2L356.3 297.0L358.6 298.9L359.7 299.7L363.3 298.8L360.6 293.3L353.6 294.9ZM367.4 297.5L365.0 295.6L362.6 293.7L361.7 293.0L360.6 293.3L363.3 298.8L367.7 297.8Z"/>
<path class="l" stroke-width="1.35" d="M357.0 328.5L354.6 326.6M353.9 295.2L351.6 293.4"/>
<path shape-rendering="crispEdges" fill="#a7aaab" d="M653.2 295.7L652.2 293.2L651.8 292.3L645.3 293.9L649.4 299.5L654.2 298.2Z"/>
<path shape-rendering="crispEdges" fill="#bdc0c1" d="M367.4 297.5L365.0 295.6L362.5 265.5L364.8 267.3Z"/>
<path shape-rendering="crispEdges" fill="#9fa2a3" d="M636.8 336.7L637.7 339.2L643.2 266.9L642.2 264.5Z"/>
<path shape-rendering="crispEdges" fill="#bec1c2" d="M361.6 332.2L359.3 330.3L356.3 297.0L358.6 298.9Z"/>
<path class="l" stroke-width="1.35" d="M365.0 295.6L362.6 293.7"/>
<path class="l" stroke-width="0.8" stroke-opacity="0.6" d="M635.8 334.3L636.8 336.7"/>
<path class="l" stroke-width="1.35" d="M652.2 293.2L653.2 295.7"/>
<path shape-rendering="crispEdges" fill="#a7aaab" d="M645.5 296.6L646.5 299.0L646.8 300.1L649.4 299.5L645.3 293.9L644.6 294.1Z"/>
<path class="l" stroke-width="1.35" d="M359.3 330.3L357.0 328.5M356.3 297.0L353.9 295.2"/>
<path shape-rendering="crispEdges" fill="#bdc0c1" d="M369.7 299.4L367.4 297.5L364.8 267.3L367.2 269.2Z"/>
<path shape-rendering="crispEdges" fill="#9da0a1" d="M637.7 339.2L638.6 341.6L644.1 269.3L643.2 266.9Z"/>
<path shape-rendering="crispEdges" fill="#bdc0c1" d="M363.8 334.0L361.6 332.2L358.6 298.9L360.9 300.7Z"/>
<path class="l" stroke-width="1.35" d="M367.4 297.5L365.0 295.6"/>
<path class="l" stroke-width="0.8" stroke-opacity="0.6" d="M636.8 336.7L637.7 339.2"/>
<path class="l" stroke-width="1.35" d="M653.2 295.7L654.2 298.3M361.6 332.2L359.3 330.3M358.6 298.9L356.3 297.0"/>
<path shape-rendering="crispEdges" fill="#bcbfc0" d="M372.0 301.3L369.7 299.4L367.2 269.2L369.5 271.2Z"/>
<path shape-rendering="crispEdges" fill="#a7aaab" d="M360.9 300.7L363.2 302.6L365.4 304.5L365.5 304.6L366.0 304.4L363.3 298.8L359.7 299.7ZM372.0 301.3L369.7 299.4L367.7 297.8L363.3 298.8L366.0 304.4L373.5 302.7Z"/>
<path shape-rendering="crispEdges" fill="#bdc0c1" d="M366.0 335.9L363.8 334.0L360.9 300.7L363.2 302.6Z"/>
<path shape-rendering="crispEdges" fill="#a7aaab" d="M655.9 303.5L655.1 300.9L654.2 298.3L654.2 298.2L649.4 299.5L653.5 305.0L656.1 304.4Z"/>
<path shape-rendering="crispEdges" fill="#9b9e9f" d="M638.6 341.6L639.3 344.1L645.0 271.7L644.1 269.3Z"/>
<path class="l" stroke-width="1.35" d="M369.7 299.4L367.4 297.5"/>
<path class="l" stroke-width="0.8" stroke-opacity="0.6" d="M637.7 339.2L638.6 341.6"/>
<path class="l" stroke-width="1.35" d="M363.8 334.0L361.6 332.2M360.9 300.7L358.6 298.9M654.2 298.3L655.1 300.9"/>
<path shape-rendering="crispEdges" fill="#bbbebf" d="M374.2 303.3L372.0 301.3L369.5 271.2L371.8 273.1Z"/>
<path shape-rendering="crispEdges" fill="#a7aaab" d="M647.3 301.5L648.0 304.0L648.6 306.3L653.5 305.0L649.4 299.5L646.8 300.1Z"/>
<path shape-rendering="crispEdges" fill="#bcbfc0" d="M368.2 337.8L366.0 335.9L363.2 302.6L365.4 304.5Z"/>
<path class="l" stroke-width="1.35" d="M372.0 301.3L369.7 299.4"/>
<path shape-rendering="crispEdges" fill="#999c9d" d="M639.3 344.1L640.0 346.5L645.7 274.1L645.0 271.7Z"/>
<path class="l" stroke-width="1.35" d="M366.0 335.9L363.8 334.0M363.2 302.6L360.9 300.7"/>
<path class="l" stroke-width="0.8" stroke-opacity="0.6" d="M638.6 341.6L639.3 344.1"/>
<path shape-rendering="crispEdges" fill="#a7aaab" d="M366.6 305.6L366.0 304.4L365.5 304.6Z"/>
<path shape-rendering="crispEdges" fill="#bbbebf" d="M376.4 305.3L374.2 303.3L371.8 273.1L374.0 275.1Z"/>
<path class="l" stroke-width="1.35" d="M655.1 300.9L655.9 303.5"/>
<path shape-rendering="crispEdges" fill="#bbbebf" d="M370.3 339.7L368.2 337.8L365.4 304.5L367.5 306.4Z"/>
<path class="l" stroke-width="1.35" d="M374.2 303.3L372.0 301.3"/>
<path shape-rendering="crispEdges" fill="#979a9b" d="M640.0 346.5L640.6 348.9L646.3 276.5L645.7 274.1Z"/>
<path class="l" stroke-width="1.35" d="M368.2 337.8L366.0 335.9M365.4 304.5L363.2 302.6"/>
<path shape-rendering="crispEdges" fill="#a7aaab" d="M657.2 308.7L656.6 306.1L656.1 304.4L653.5 305.0L657.5 310.5ZM367.5 306.4L369.6 308.3L370.9 309.6L378.0 307.9L377.1 306.0L376.4 305.3L374.2 303.3L373.5 302.7L366.0 304.4L366.6 305.6Z"/>
<path class="l" stroke-width="0.8" stroke-opacity="0.6" d="M639.3 344.1L640.0 346.5"/>
<path shape-rendering="crispEdges" fill="#b9bcbd" d="M378.5 307.3L376.4 305.3L374.0 275.1L376.1 277.1Z"/>
<path shape-rendering="crispEdges" fill="#babdbe" d="M372.4 341.7L370.3 339.7L367.5 306.4L369.6 308.3Z"/>
<path class="l" stroke-width="1.35" d="M655.9 303.5L656.6 306.1M376.4 305.3L374.2 303.3"/>
<path shape-rendering="crispEdges" fill="#a7aaab" d="M378.5 307.3L377.1 306.0L378.0 307.9L378.8 307.7Z"/>
<path class="l" stroke-width="1.35" d="M370.3 339.7L368.2 337.8M367.5 306.4L365.4 304.5"/>
<path shape-rendering="crispEdges" fill="#949798" d="M640.6 348.9L641.1 351.3L646.8 278.8L646.3 276.5Z"/>
<path shape-rendering="crispEdges" fill="#a7aaab" d="M657.5 310.5L653.5 305.0L648.6 306.3L648.7 306.5L649.2 308.9L649.6 311.4L649.8 312.7L657.5 310.7Z"/>
<path class="l" stroke-width="0.8" stroke-opacity="0.6" d="M640.0 346.5L640.6 348.9"/>
<path shape-rendering="crispEdges" fill="#b8bbbc" d="M380.5 309.4L378.5 307.3L376.1 277.1L378.2 279.2Z"/>
<path shape-rendering="crispEdges" fill="#b9bcbd" d="M374.4 343.7L372.4 341.7L369.6 308.3L371.6 310.3Z"/>
<path class="l" stroke-width="1.35" d="M656.6 306.1L657.2 308.7M378.5 307.3L376.4 305.3M372.4 341.7L370.3 339.7M369.6 308.3L367.5 306.4"/>
<path shape-rendering="crispEdges" fill="#909394" d="M641.1 351.3L641.5 353.7L647.2 281.2L646.8 278.8Z"/>
<path shape-rendering="crispEdges" fill="#b7babb" d="M382.5 311.5L380.5 309.4L378.2 279.2L380.2 281.3Z"/>
<path class="l" stroke-width="0.8" stroke-opacity="0.6" d="M640.6 348.9L641.1 351.3"/>
<path shape-rendering="crispEdges" fill="#b8bbbc" d="M376.3 345.7L374.4 343.7L371.6 310.3L373.6 312.3Z"/>
<path shape-rendering="crispEdges" fill="#a7aaab" d="M371.6 310.3L373.6 312.3L375.5 314.3L375.9 314.7L380.9 313.5L378.0 307.9L370.9 309.6ZM382.5 311.5L380.5 309.4L378.8 307.7L378.0 307.9L380.9 313.5L383.7 312.9Z"/>
<path class="l" stroke-width="1.35" d="M380.5 309.4L378.5 307.3M374.4 343.7L372.4 341.7M371.6 310.3L369.6 308.3M657.2 308.7L657.6 311.3"/>
<path shape-rendering="crispEdges" fill="#8d9091" d="M641.5 353.7L641.7 356.1L647.5 283.5L647.2 281.2Z"/>
<path shape-rendering="crispEdges" fill="#b6b9ba" d="M384.5 313.7L382.5 311.5L380.2 281.3L382.2 283.4Z"/>
<path shape-rendering="crispEdges" fill="#b7babb" d="M378.2 347.7L376.3 345.7L373.6 312.3L375.5 314.3Z"/>
<path class="l" stroke-width="0.8" stroke-opacity="0.6" d="M641.1 351.3L641.5 353.7"/>
<path shape-rendering="crispEdges" fill="#a7aaab" d="M658.1 316.7L657.9 314.0L657.6 311.3L657.5 310.7L649.8 312.7L649.9 313.9L649.9 314.2L653.1 318.6L658.1 317.3Z"/>
<path class="l" stroke-width="1.35" d="M382.5 311.5L380.5 309.4M376.3 345.7L374.4 343.7M373.6 312.3L371.6 310.3M657.6 311.3L657.9 314.0"/>
<path shape-rendering="crispEdges" fill="#888b8c" d="M641.7 356.1L641.8 358.5L647.6 285.9L647.5 283.5Z"/>
<path shape-rendering="crispEdges" fill="#b6b9ba" d="M380.0 349.8L378.2 347.7L375.5 314.3L377.4 316.4Z"/>
<path shape-rendering="crispEdges" fill="#b5b8b9" d="M386.3 315.9L384.5 313.7L382.2 283.4L384.1 285.6Z"/>
<path class="l" stroke-width="0.8" stroke-opacity="0.6" d="M641.5 353.7L641.7 356.1"/>
<path class="l" stroke-width="1.35" d="M384.5 313.7L382.5 311.5M378.2 347.7L376.3 345.7M375.5 314.3L373.6 312.3"/>
<path shape-rendering="crispEdges" fill="#a7aaab" d="M388.2 318.1L386.3 315.9L384.5 313.7L383.7 312.9L380.9 313.5L383.7 319.3L388.3 318.2ZM650.0 316.4L650.0 318.8L650.0 319.4L653.1 318.6L649.9 314.2ZM377.4 316.4L379.2 318.5L380.4 320.1L383.7 319.3L380.9 313.5L375.9 314.7Z"/>
<path shape-rendering="crispEdges" fill="#848788" d="M641.8 358.5L641.8 360.8L647.6 288.2L647.6 285.9Z"/>
<path class="l" stroke-width="1.35" d="M657.9 314.0L658.1 316.7"/>
<path shape-rendering="crispEdges" fill="#b5b8b9" d="M381.8 352.0L380.0 349.8L377.4 316.4L379.2 318.5Z"/>
<path shape-rendering="crispEdges" fill="#b4b7b8" d="M388.2 318.1L386.3 315.9L384.1 285.6L386.0 287.8Z"/>
<path class="l" stroke-width="0.8" stroke-opacity="0.6" d="M641.7 356.1L641.8 358.5"/>
<path class="l" stroke-width="1.35" d="M380.0 349.8L378.2 347.7M377.4 316.4L375.5 314.3M386.3 315.9L384.5 313.7"/>
<path shape-rendering="crispEdges" fill="#a7aaab" d="M657.9 322.0L658.1 319.3L658.1 317.3L653.1 318.6L657.3 324.4L657.6 324.3Z"/>
<path shape-rendering="crispEdges" fill="#7e8182" d="M641.8 360.8L641.6 363.2L647.4 290.5L647.6 288.2Z"/>
<path class="l" stroke-width="1.35" d="M658.1 316.7L658.1 319.3"/>
<path shape-rendering="crispEdges" fill="#b4b7b8" d="M383.6 354.2L381.8 352.0L379.2 318.5L381.0 320.7ZM390.0 320.3L388.2 318.1L386.0 287.8L387.9 290.0Z"/>
<path class="l" stroke-width="0.8" stroke-opacity="0.6" d="M641.8 358.5L641.8 360.8"/>
<path class="l" stroke-width="1.35" d="M381.8 352.0L380.0 349.8M379.2 318.5L377.4 316.4M388.2 318.1L386.3 315.9M641.6 363.2L647.4 290.5"/>
<path shape-rendering="crispEdges" fill="#636667" d="M649.8 321.3L649.5 323.7L652.0 293.4L652.3 290.9Z"/>
<path shape-rendering="crispEdges" fill="#a7aaab" d="M649.8 321.3L649.5 323.7L648.9 326.1L648.8 326.6L657.3 324.4L653.1 318.6L650.0 319.4Z"/>
<path shape-rendering="crispEdges" fill="#636667" d="M655.0 355.5L654.6 358.2L657.5 324.7L657.9 322.0Z"/>
<path shape-rendering="crispEdges" fill="#b3b6b7" d="M385.3 356.4L383.6 354.2L381.0 320.7L382.8 322.9Z"/>
<path shape-rendering="crispEdges" fill="#a7aaab" d="M391.8 322.6L390.0 320.3L388.3 318.2L383.7 319.3L386.6 325.0L392.6 323.6Z"/>
<path shape-rendering="crispEdges" fill="#b3b6b7" d="M391.8 322.6L390.0 320.3L387.9 290.0L389.7 292.2Z"/>
<path class="l" stroke-width="1.35" d="M658.1 319.3L657.9 322.0"/>
<path class="l" stroke-width="0.8" stroke-opacity="0.6" d="M641.8 360.8L641.6 363.2"/>
<path shape-rendering="crispEdges" fill="#a7aaab" d="M381.0 320.7L382.8 322.9L384.6 325.1L384.8 325.5L386.6 325.0L383.7 319.3L380.4 320.1Z"/>
<path class="l" stroke-width="1.35" d="M383.6 354.2L381.8 352.0M381.0 320.7L379.2 318.5M390.0 320.3L388.2 318.1"/>
<path shape-rendering="crispEdges" fill="#a7aaab" d="M657.5 324.7L657.6 324.3L657.3 324.4L657.5 324.7Z"/>
<path class="l" stroke-width="1.35" d="M649.8 321.3L652.3 290.9M655.0 355.5L657.9 322.0"/>
<path shape-rendering="crispEdges" fill="#636667" d="M649.5 323.7L648.9 326.1L651.4 295.8L652.0 293.4Z"/>
<path shape-rendering="crispEdges" fill="#b3b6b7" d="M387.1 358.7L385.3 356.4L382.8 322.9L384.6 325.1ZM393.6 324.8L391.8 322.6L389.7 292.2L391.5 294.5Z"/>
<path shape-rendering="crispEdges" fill="#636667" d="M654.6 358.2L654.0 360.9L656.9 327.4L657.5 324.7Z"/>
<path class="l" stroke-width="1.35" d="M649.8 321.3L649.5 323.7M655.0 355.5L654.6 358.2M657.9 322.0L657.5 324.7M385.3 356.4L383.6 354.2M382.8 322.9L381.0 320.7M391.8 322.6L390.0 320.3"/>
<path shape-rendering="crispEdges" fill="#b2b5b6" d="M388.8 360.9L387.1 358.7L384.6 325.1L386.3 327.4Z"/>
<path shape-rendering="crispEdges" fill="#686b6c" d="M648.9 326.1L648.2 328.6L650.7 298.2L651.4 295.8Z"/>
<path shape-rendering="crispEdges" fill="#b3b6b7" d="M395.4 327.1L393.6 324.8L391.5 294.5L393.3 296.7Z"/>
<path shape-rendering="crispEdges" fill="#a7aaab" d="M656.2 330.0L656.9 327.4L657.5 324.7L657.3 324.4L648.8 326.6L648.7 326.9L652.7 332.5L655.5 331.8Z"/>
<path class="l" stroke-width="1.35" d="M649.5 323.7L648.9 326.1"/>
<path shape-rendering="crispEdges" fill="#686b6c" d="M654.0 360.9L653.2 363.6L656.2 330.0L656.9 327.4Z"/>
<path class="l" stroke-width="1.35" d="M387.1 358.7L385.3 356.4M384.6 325.1L382.8 322.9M393.6 324.8L391.8 322.6M654.6 358.2L654.0 360.9M657.5 324.7L656.9 327.4"/>
<path shape-rendering="crispEdges" fill="#a7aaab" d="M386.3 327.4L388.1 329.7L389.1 331.0L389.5 330.9L386.6 325.0L384.8 325.5ZM395.4 327.1L393.6 324.8L392.6 323.6L386.6 325.0L389.5 330.9L396.9 329.1Z"/>
<path shape-rendering="crispEdges" fill="#b2b5b6" d="M390.5 363.2L388.8 360.9L386.3 327.4L388.1 329.7Z"/>
<path shape-rendering="crispEdges" fill="#6d7071" d="M648.2 328.6L647.3 331.0L649.8 300.6L650.7 298.2Z"/>
<path shape-rendering="crispEdges" fill="#b3b6b7" d="M397.2 329.4L395.4 327.1L393.3 296.7L395.2 299.0Z"/>
<path class="l" stroke-width="1.35" d="M388.8 360.9L387.1 358.7M386.3 327.4L384.6 325.1M648.9 326.1L648.2 328.6"/>
<path shape-rendering="crispEdges" fill="#6d7071" d="M653.2 363.6L652.3 366.2L655.2 332.7L656.2 330.0Z"/>
<path class="l" stroke-width="1.35" d="M395.4 327.1L393.6 324.8M654.0 360.9L653.2 363.6M656.9 327.4L656.2 330.0"/>
<path shape-rendering="crispEdges" fill="#a7aaab" d="M648.2 328.6L647.3 331.0L646.2 333.4L645.7 334.3L652.7 332.5L648.7 326.9Z"/>
<path shape-rendering="crispEdges" fill="#b2b5b6" d="M392.3 365.6L390.5 363.2L388.1 329.7L389.9 332.0Z"/>
<path shape-rendering="crispEdges" fill="#727576" d="M647.3 331.0L646.2 333.4L648.7 302.9L649.8 300.6Z"/>
<path shape-rendering="crispEdges" fill="#b3b6b7" d="M399.0 331.7L397.2 329.4L395.2 299.0L397.0 301.3Z"/>
<path shape-rendering="crispEdges" fill="#a7aaab" d="M655.2 332.7L655.5 331.8L652.7 332.5L654.3 334.7Z"/>
<path class="l" stroke-width="1.35" d="M390.5 363.2L388.8 360.9M388.1 329.7L386.3 327.4"/>
<path shape-rendering="crispEdges" fill="#a7aaab" d="M389.9 332.0L390.5 332.8L389.5 330.9L389.1 331.0Z"/>
<path class="l" stroke-width="1.35" d="M648.2 328.6L647.3 331.0M397.2 329.4L395.4 327.1"/>
<path shape-rendering="crispEdges" fill="#727576" d="M652.3 366.2L651.1 368.8L654.0 335.3L655.2 332.7Z"/>
<path class="l" stroke-width="1.35" d="M653.2 363.6L652.3 366.2M656.2 330.0L655.2 332.7"/>
<path shape-rendering="crispEdges" fill="#a7aaab" d="M391.7 334.3L393.4 336.5L401.3 334.6L400.8 334.0L399.0 331.7L397.2 329.4L396.9 329.1L389.5 330.9L390.5 332.8Z"/>
<path shape-rendering="crispEdges" fill="#b2b5b6" d="M394.1 367.9L392.3 365.6L389.9 332.0L391.7 334.3Z"/>
<path shape-rendering="crispEdges" fill="#777a7b" d="M646.2 333.4L644.9 335.7L647.4 305.3L648.7 302.9Z"/>
<path shape-rendering="crispEdges" fill="#b3b6b7" d="M400.8 334.0L399.0 331.7L397.0 301.3L398.8 303.6Z"/>
<path class="l" stroke-width="1.35" d="M392.3 365.6L390.5 363.2M389.9 332.0L388.1 329.7M647.3 331.0L646.2 333.4M399.0 331.7L397.2 329.4"/>
<path shape-rendering="crispEdges" fill="#777a7b" d="M651.1 368.8L649.8 371.4L652.7 337.8L654.0 335.3Z"/>
<path shape-rendering="crispEdges" fill="#a7aaab" d="M652.7 337.8L654.0 335.3L654.3 334.7L652.7 332.5L645.7 334.3L644.9 335.7L644.7 336.1L648.0 340.7L651.5 339.8Z"/>
<path class="l" stroke-width="1.35" d="M652.3 366.2L651.1 368.8M655.2 332.7L654.0 335.3"/>
<path shape-rendering="crispEdges" fill="#b2b5b6" d="M395.9 370.2L394.1 367.9L391.7 334.3L393.5 336.7Z"/>
<path shape-rendering="crispEdges" fill="#7b7e7f" d="M644.9 335.7L643.5 338.1L646.0 307.6L647.4 305.3Z"/>
<path shape-rendering="crispEdges" fill="#b3b6b7" d="M402.7 336.3L400.8 334.0L398.8 303.6L400.7 305.9Z"/>
<path class="l" stroke-width="1.35" d="M394.1 367.9L392.3 365.6M391.7 334.3L389.9 332.0M646.2 333.4L644.9 335.7M400.8 334.0L399.0 331.7"/>
<path shape-rendering="crispEdges" fill="#7b7e7f" d="M649.8 371.4L648.3 374.0L651.2 340.4L652.7 337.8Z"/>
<path class="l" stroke-width="1.35" d="M651.1 368.8L649.8 371.4M654.0 335.3L652.7 337.8"/>
<path shape-rendering="crispEdges" fill="#b3b6b7" d="M397.7 372.6L395.9 370.2L393.5 336.7L395.4 339.0Z"/>
<path shape-rendering="crispEdges" fill="#7f8283" d="M643.5 338.1L642.0 340.4L644.4 309.9L646.0 307.6Z"/>
<path shape-rendering="crispEdges" fill="#b4b7b8" d="M404.6 338.6L402.7 336.3L400.7 305.9L402.6 308.2Z"/>
<path shape-rendering="crispEdges" fill="#a7aaab" d="M643.5 338.1L642.0 340.4L640.2 342.7L640.2 342.8L648.0 340.7L644.7 336.1Z"/>
<path class="l" stroke-width="1.35" d="M395.9 370.2L394.1 367.9M393.5 336.7L391.7 334.3"/>
<path shape-rendering="crispEdges" fill="#a7aaab" d="M393.5 336.7L395.4 339.0L397.3 341.4L397.9 342.1L404.9 340.4L403.0 336.7L402.7 336.3L401.3 334.6L393.4 336.5Z"/>
<path class="l" stroke-width="1.35" d="M644.9 335.7L643.5 338.1M402.7 336.3L400.8 334.0"/>
<path shape-rendering="crispEdges" fill="#a7aaab" d="M651.2 340.4L651.5 339.8L648.0 340.7L649.5 342.9ZM404.6 338.6L403.0 336.7L404.9 340.4L405.8 340.2Z"/>
<path shape-rendering="crispEdges" fill="#7f8283" d="M648.3 374.0L646.7 376.5L649.5 342.9L651.2 340.4Z"/>
<path class="l" stroke-width="1.35" d="M649.8 371.4L648.3 374.0M652.7 337.8L651.2 340.4"/>
<path shape-rendering="crispEdges" fill="#b3b6b7" d="M399.5 375.0L397.7 372.6L395.4 339.0L397.3 341.4Z"/>
<path shape-rendering="crispEdges" fill="#838687" d="M642.0 340.4L640.2 342.7L642.6 312.2L644.4 309.9Z"/>
<path shape-rendering="crispEdges" fill="#b5b8b9" d="M406.5 340.9L404.6 338.6L402.6 308.2L404.6 310.4Z"/>
<path class="l" stroke-width="1.35" d="M397.7 372.6L395.9 370.2M395.4 339.0L393.5 336.7M643.5 338.1L642.0 340.4M404.6 338.6L402.7 336.3"/>
<path shape-rendering="crispEdges" fill="#838687" d="M646.7 376.5L644.9 379.0L647.6 345.4L649.5 342.9Z"/>
<path shape-rendering="crispEdges" fill="#b4b7b8" d="M401.5 377.3L399.5 375.0L397.3 341.4L399.2 343.7Z"/>
<path shape-rendering="crispEdges" fill="#878a8b" d="M640.2 342.7L638.4 345.0L640.7 314.5L642.6 312.2Z"/>
<path shape-rendering="crispEdges" fill="#b5b8b9" d="M408.5 343.2L406.5 340.9L404.6 310.4L406.6 312.7Z"/>
<path class="l" stroke-width="1.35" d="M648.3 374.0L646.7 376.5M651.2 340.4L649.5 342.9"/>
<path shape-rendering="crispEdges" fill="#a7aaab" d="M645.6 347.8L647.6 345.4L649.5 342.9L649.5 342.9L648.0 340.7L640.2 342.8L639.5 343.6L643.3 349.1L644.9 348.6Z"/>
<path class="l" stroke-width="1.35" d="M399.5 375.0L397.7 372.6M397.3 341.4L395.4 339.0M642.0 340.4L640.2 342.7M406.5 340.9L404.6 338.6"/>
<path shape-rendering="crispEdges" fill="#a7aaab" d="M410.5 345.5L408.5 343.2L406.5 340.9L405.8 340.2L404.9 340.4L407.9 346.4L410.7 345.7ZM399.2 343.7L401.2 346.1L402.7 347.7L407.9 346.4L404.9 340.4L397.9 342.1Z"/>
<path shape-rendering="crispEdges" fill="#86898a" d="M644.9 379.0L642.9 381.5L645.6 347.8L647.6 345.4Z"/>
<path shape-rendering="crispEdges" fill="#8a8d8e" d="M638.4 345.0L636.3 347.2L638.7 316.7L640.7 314.5Z"/>
<path shape-rendering="crispEdges" fill="#b5b8b9" d="M403.4 379.7L401.5 377.3L399.2 343.7L401.2 346.1Z"/>
<path shape-rendering="crispEdges" fill="#b6b9ba" d="M410.5 345.5L408.5 343.2L406.6 312.7L408.6 314.9Z"/>
<path class="l" stroke-width="1.35" d="M646.7 376.5L644.9 379.0M649.5 342.9L647.6 345.4M401.5 377.3L399.5 375.0M399.2 343.7L397.3 341.4M640.2 342.7L638.4 345.0M408.5 343.2L406.5 340.9"/>
<path shape-rendering="crispEdges" fill="#a7aaab" d="M638.4 345.0L636.3 347.2L634.2 349.4L633.4 350.1L634.3 351.4L643.3 349.1L639.5 343.6Z"/>
<path shape-rendering="crispEdges" fill="#8d9091" d="M636.3 347.2L634.2 349.4L636.5 318.9L638.7 316.7Z"/>
<path shape-rendering="crispEdges" fill="#898c8d" d="M642.9 381.5L640.8 383.9L643.5 350.3L645.6 347.8Z"/>
<path shape-rendering="crispEdges" fill="#b7babb" d="M412.6 347.7L410.5 345.5L408.6 314.9L410.8 317.2Z"/>
<path shape-rendering="crispEdges" fill="#b6b9ba" d="M405.5 382.1L403.4 379.7L401.2 346.1L403.3 348.4Z"/>
<path shape-rendering="crispEdges" fill="#a7aaab" d="M644.9 348.6L643.3 349.1L643.8 349.8Z"/>
<path class="l" stroke-width="1.35" d="M644.9 379.0L642.9 381.5M647.6 345.4L645.6 347.8M638.4 345.0L636.3 347.2M403.4 379.7L401.5 377.3M401.2 346.1L399.2 343.7M410.5 345.5L408.5 343.2"/>
<path shape-rendering="crispEdges" fill="#909394" d="M634.2 349.4L631.9 351.6L634.1 321.0L636.5 318.9Z"/>
<path shape-rendering="crispEdges" fill="#b9bcbd" d="M414.7 349.9L412.6 347.7L410.8 317.2L413.0 319.3Z"/>
<path shape-rendering="crispEdges" fill="#8d9091" d="M640.8 383.9L638.5 386.3L641.2 352.6L643.5 350.3Z"/>
<path shape-rendering="crispEdges" fill="#b7babb" d="M407.6 384.4L405.5 382.1L403.3 348.4L405.5 350.7Z"/>
<path shape-rendering="crispEdges" fill="#a7aaab" d="M414.7 349.9L412.6 347.7L410.7 345.7L407.9 346.4L411.0 352.4L416.1 351.2ZM403.3 348.4L405.5 350.7L407.7 353.0L407.9 353.2L411.0 352.4L407.9 346.4L402.7 347.7ZM631.9 351.6L631.1 352.2L634.3 351.4L633.4 350.1Z"/>
<path class="l" stroke-width="1.35" d="M636.3 347.2L634.2 349.4M642.9 381.5L640.8 383.9M645.6 347.8L643.5 350.3M412.6 347.7L410.5 345.5M405.5 382.1L403.4 379.7M403.3 348.4L401.2 346.1"/>
<path shape-rendering="crispEdges" fill="#a7aaab" d="M638.7 355.0L641.2 352.6L643.5 350.3L643.8 349.8L643.3 349.1L634.3 351.4L637.5 356.0Z"/>
<path shape-rendering="crispEdges" fill="#939697" d="M631.9 351.6L629.4 353.7L631.6 323.2L634.1 321.0Z"/>
<path shape-rendering="crispEdges" fill="#babdbe" d="M417.0 352.1L414.7 349.9L413.0 319.3L415.3 321.5Z"/>
<path shape-rendering="crispEdges" fill="#b8bbbc" d="M409.8 386.7L407.6 384.4L405.5 350.7L407.7 353.0Z"/>
<path shape-rendering="crispEdges" fill="#909394" d="M638.5 386.3L636.1 388.7L638.7 355.0L641.2 352.6Z"/>
<path class="l" stroke-width="1.35" d="M634.2 349.4L631.9 351.6M414.7 349.9L412.6 347.7M640.8 383.9L638.5 386.3M643.5 350.3L641.2 352.6M407.6 384.4L405.5 382.1M405.5 350.7L403.3 348.4"/>
<path shape-rendering="crispEdges" fill="#959899" d="M629.4 353.7L626.9 355.8L629.0 325.2L631.6 323.2Z"/>
<path shape-rendering="crispEdges" fill="#bbbebf" d="M419.3 354.2L417.0 352.1L415.3 321.5L417.6 323.6Z"/>
<path shape-rendering="crispEdges" fill="#b9bcbd" d="M412.1 389.1L409.8 386.7L407.7 353.0L410.1 355.3Z"/>
<path shape-rendering="crispEdges" fill="#929596" d="M636.1 388.7L633.6 391.0L636.1 357.2L638.7 355.0Z"/>
<path shape-rendering="crispEdges" fill="#a7aaab" d="M636.1 357.2L637.5 356.0L634.3 351.4L631.1 352.2L629.4 353.7L626.9 355.8L626.7 355.9L629.4 359.9L634.5 358.6Z"/>
<path class="l" stroke-width="1.35" d="M631.9 351.6L629.4 353.7M417.0 352.1L414.7 349.9M409.8 386.7L407.6 384.4M407.7 353.0L405.5 350.7M638.5 386.3L636.1 388.7M641.2 352.6L638.7 355.0"/>
<path shape-rendering="crispEdges" fill="#a7aaab" d="M410.1 355.3L412.5 357.6L413.7 358.6L414.1 358.6L411.0 352.4L407.9 353.2ZM421.8 356.3L419.3 354.2L417.0 352.1L416.1 351.2L411.0 352.4L414.1 358.6L422.0 356.6Z"/>
<path shape-rendering="crispEdges" fill="#989b9c" d="M626.9 355.8L624.2 357.9L626.3 327.3L629.0 325.2Z"/>
<path shape-rendering="crispEdges" fill="#bcbfc0" d="M421.8 356.3L419.3 354.2L417.6 323.6L420.1 325.7Z"/>
<path shape-rendering="crispEdges" fill="#bbbebf" d="M414.5 391.3L412.1 389.1L410.1 355.3L412.5 357.6Z"/>
<path shape-rendering="crispEdges" fill="#959899" d="M633.6 391.0L630.9 393.2L633.4 359.5L636.1 357.2Z"/>
<path class="l" stroke-width="1.35" d="M629.4 353.7L626.9 355.8M419.3 354.2L417.0 352.1M412.1 389.1L409.8 386.7M410.1 355.3L407.7 353.0M636.1 388.7L633.6 391.0M638.7 355.0L636.1 357.2"/>
<path shape-rendering="crispEdges" fill="#9a9d9e" d="M624.2 357.9L621.4 359.9L623.4 329.3L626.3 327.3Z"/>
<path shape-rendering="crispEdges" fill="#bec1c2" d="M424.3 358.4L421.8 356.3L420.1 325.7L422.7 327.8Z"/>
<path shape-rendering="crispEdges" fill="#a7aaab" d="M624.2 357.9L621.4 359.9L619.5 361.1L620.3 362.3L629.4 359.9L626.7 355.9ZM633.4 359.5L634.5 358.6L629.4 359.9L630.6 361.6Z"/>
<path shape-rendering="crispEdges" fill="#bcbfc0" d="M417.1 393.6L414.5 391.3L412.5 357.6L415.1 359.9Z"/>
<path shape-rendering="crispEdges" fill="#a7aaab" d="M414.5 359.3L414.1 358.6L413.7 358.6Z"/>
<path shape-rendering="crispEdges" fill="#979a9b" d="M630.9 393.2L628.1 395.4L630.6 361.7L633.4 359.5Z"/>
<path class="l" stroke-width="1.35" d="M626.9 355.8L624.2 357.9M421.8 356.3L419.3 354.2M414.5 391.3L412.1 389.1M412.5 357.6L410.1 355.3M633.6 391.0L630.9 393.2M636.1 357.2L633.4 359.5"/>
<path shape-rendering="crispEdges" fill="#9c9fa0" d="M621.4 359.9L618.5 361.9L620.5 331.2L623.4 329.3Z"/>
<path shape-rendering="crispEdges" fill="#bfc2c3" d="M427.0 360.4L424.3 358.4L422.7 327.8L425.4 329.8Z"/>
<path shape-rendering="crispEdges" fill="#a7aaab" d="M415.1 359.9L417.8 362.1L420.3 363.9L426.8 362.3L425.0 358.9L424.3 358.4L422.0 356.6L414.1 358.6L414.5 359.3Z"/>
<path shape-rendering="crispEdges" fill="#bdc0c1" d="M419.7 395.8L417.1 393.6L415.1 359.9L417.8 362.1Z"/>
<path class="l" stroke-width="1.35" d="M624.2 357.9L621.4 359.9M424.3 358.4L421.8 356.3"/>
<path shape-rendering="crispEdges" fill="#9a9d9e" d="M628.1 395.4L625.2 397.6L627.6 363.8L630.6 361.7Z"/>
<path shape-rendering="crispEdges" fill="#a7aaab" d="M618.5 361.9L616.0 363.4L620.3 362.3L619.5 361.1ZM624.5 365.9L627.6 363.8L630.6 361.7L630.6 361.6L629.4 359.9L620.3 362.3L623.3 366.7ZM427.0 360.4L425.0 358.9L426.8 362.3L428.9 361.8Z"/>
<path class="l" stroke-width="1.35" d="M417.1 393.6L414.5 391.3M415.1 359.9L412.5 357.6"/>
<path shape-rendering="crispEdges" fill="#9ea1a2" d="M618.5 361.9L615.5 363.8L617.4 333.1L620.5 331.2Z"/>
<path class="l" stroke-width="1.35" d="M630.9 393.2L628.1 395.4M633.4 359.5L630.6 361.7"/>
<path shape-rendering="crispEdges" fill="#c0c3c4" d="M429.7 362.4L427.0 360.4L425.4 329.8L428.2 331.8Z"/>
<path class="l" stroke-width="1.35" d="M621.4 359.9L618.5 361.9M427.0 360.4L424.3 358.4"/>
<path shape-rendering="crispEdges" fill="#bfc2c3" d="M422.5 398.0L419.7 395.8L417.8 362.1L420.6 364.2Z"/>
<path shape-rendering="crispEdges" fill="#9c9fa0" d="M625.2 397.6L622.2 399.7L624.5 365.9L627.6 363.8Z"/>
<path shape-rendering="crispEdges" fill="#a0a3a4" d="M615.5 363.8L612.3 365.6L614.2 335.0L617.4 333.1Z"/>
<path shape-rendering="crispEdges" fill="#c2c5c6" d="M432.6 364.3L429.7 362.4L428.2 331.8L431.2 333.7Z"/>
<path class="l" stroke-width="1.35" d="M419.7 395.8L417.1 393.6M417.8 362.1L415.1 359.9M628.1 395.4L625.2 397.6M630.6 361.7L627.6 363.8M618.5 361.9L615.5 363.8M429.7 362.4L427.0 360.4"/>
<path shape-rendering="crispEdges" fill="#a7aaab" d="M618.1 369.9L621.3 367.9L623.3 366.7L620.3 362.3L616.0 363.4L615.5 363.8L612.3 365.6L611.9 365.9L615.3 370.9L617.1 370.5Z"/>
<path shape-rendering="crispEdges" fill="#c0c3c4" d="M425.3 400.1L422.5 398.0L420.6 364.2L423.6 366.3Z"/>
<path shape-rendering="crispEdges" fill="#9ea1a2" d="M622.2 399.7L619.1 401.7L621.3 367.9L624.5 365.9Z"/>
<path shape-rendering="crispEdges" fill="#a7aaab" d="M420.6 364.2L423.6 366.3L426.6 368.4L427.7 369.1L430.0 368.5L426.8 362.3L420.3 363.9Z"/>
<path shape-rendering="crispEdges" fill="#a2a5a6" d="M612.3 365.6L609.1 367.4L611.0 336.8L614.2 335.0Z"/>
<path shape-rendering="crispEdges" fill="#a7aaab" d="M435.6 366.2L432.6 364.3L429.7 362.4L428.9 361.8L426.8 362.3L430.0 368.5L436.6 366.8Z"/>
<path shape-rendering="crispEdges" fill="#c3c6c7" d="M435.6 366.2L432.6 364.3L431.2 333.7L434.2 335.5Z"/>
<path class="l" stroke-width="1.35" d="M422.5 398.0L419.7 395.8M420.6 364.2L417.8 362.1M625.2 397.6L622.2 399.7M627.6 363.8L624.5 365.9M615.5 363.8L612.3 365.6M432.6 364.3L429.7 362.4"/>
<path shape-rendering="crispEdges" fill="#c1c4c5" d="M428.3 402.2L425.3 400.1L423.6 366.3L426.6 368.4Z"/>
<path shape-rendering="crispEdges" fill="#a0a3a4" d="M619.1 401.7L615.8 403.7L618.1 369.9L621.3 367.9Z"/>
<path shape-rendering="crispEdges" fill="#a4a7a8" d="M609.1 367.4L605.8 369.2L607.6 338.5L611.0 336.8Z"/>
<path shape-rendering="crispEdges" fill="#c4c7c8" d="M438.6 368.0L435.6 366.2L434.2 335.5L437.3 337.3Z"/>
<path class="l" stroke-width="1.35" d="M425.3 400.1L422.5 398.0M423.6 366.3L420.6 364.2M622.2 399.7L619.1 401.7M624.5 365.9L621.3 367.9M612.3 365.6L609.1 367.4M435.6 366.2L432.6 364.3"/>
<path shape-rendering="crispEdges" fill="#a7aaab" d="M609.1 367.4L605.8 369.2L603.9 370.1L606.1 373.4L615.3 370.9L611.9 365.9Z"/>
<path shape-rendering="crispEdges" fill="#a6a9aa" d="M605.8 369.2L602.4 370.9L604.1 340.2L607.6 338.5Z"/>
<path shape-rendering="crispEdges" fill="#c2c5c6" d="M431.4 404.2L428.3 402.2L426.6 368.4L429.7 370.4Z"/>
<path shape-rendering="crispEdges" fill="#a2a5a6" d="M615.8 403.7L612.5 405.6L614.7 371.8L618.1 369.9Z"/>
<path shape-rendering="crispEdges" fill="#c5c8c9" d="M441.8 369.8L438.6 368.0L437.3 337.3L440.5 339.1Z"/>
<path shape-rendering="crispEdges" fill="#a7aaab" d="M617.1 370.5L615.3 370.9L615.6 371.3ZM429.7 370.4L431.5 371.4L430.0 368.5L427.7 369.1Z"/>
<path class="l" stroke-width="1.35" d="M428.3 402.2L425.3 400.1M426.6 368.4L423.6 366.3M619.1 401.7L615.8 403.7M621.3 367.9L618.1 369.9M609.1 367.4L605.8 369.2"/>
<path shape-rendering="crispEdges" fill="#a7aaab" d="M433.0 372.3L436.1 374.0L442.8 372.3L441.3 369.5L438.6 368.0L436.6 366.8L430.0 368.5L431.5 371.4Z"/>
<path class="l" stroke-width="1.35" d="M438.6 368.0L435.6 366.2"/>
<path shape-rendering="crispEdges" fill="#a8abac" d="M602.4 370.9L599.0 372.5L600.6 341.8L604.1 340.2Z"/>
<path shape-rendering="crispEdges" fill="#c6c9ca" d="M445.0 371.5L441.8 369.8L440.5 339.1L443.8 340.8Z"/>
<path shape-rendering="crispEdges" fill="#c3c6c7" d="M434.6 406.1L431.4 404.2L429.7 370.4L433.0 372.3Z"/>
<path shape-rendering="crispEdges" fill="#a4a7a8" d="M612.5 405.6L609.1 407.5L611.2 373.7L614.7 371.8Z"/>
<path shape-rendering="crispEdges" fill="#a7aaab" d="M445.0 371.5L441.8 369.8L441.3 369.5L442.8 372.3L445.5 371.7ZM607.6 375.5L611.2 373.7L614.7 371.8L615.6 371.3L615.3 370.9L606.1 373.4L607.5 375.5ZM602.4 370.9L599.0 372.5L595.6 374.0L596.8 375.8L606.1 373.4L603.9 370.1Z"/>
<path class="l" stroke-width="1.35" d="M605.8 369.2L602.4 370.9M431.4 404.2L428.3 402.2M429.7 370.4L426.6 368.4M615.8 403.7L612.5 405.6M618.1 369.9L614.7 371.8M441.8 369.8L438.6 368.0"/>
<path shape-rendering="crispEdges" fill="#aaadae" d="M599.0 372.5L595.4 374.1L597.0 343.4L600.6 341.8Z"/>
<path shape-rendering="crispEdges" fill="#c6c9ca" d="M448.4 373.1L445.0 371.5L443.8 340.8L447.2 342.4Z"/>
<path shape-rendering="crispEdges" fill="#c4c7c8" d="M437.9 408.0L434.6 406.1L433.0 372.3L436.3 374.2Z"/>
<path shape-rendering="crispEdges" fill="#a6a9aa" d="M609.1 407.5L605.6 409.3L607.6 375.5L611.2 373.7Z"/>
<path class="l" stroke-width="1.35" d="M602.4 370.9L599.0 372.5M445.0 371.5L441.8 369.8"/>
<path shape-rendering="crispEdges" fill="#abaeaf" d="M595.4 374.1L591.8 375.6L593.3 344.9L597.0 343.4Z"/>
<path shape-rendering="crispEdges" fill="#c8cbcc" d="M451.8 374.7L448.4 373.1L447.2 342.4L450.7 343.9Z"/>
<path class="l" stroke-width="1.35" d="M434.6 406.1L431.4 404.2M433.0 372.3L429.7 370.4M612.5 405.6L609.1 407.5M614.7 371.8L611.2 373.7"/>
<path shape-rendering="crispEdges" fill="#c5c8c9" d="M441.2 409.8L437.9 408.0L436.3 374.2L439.8 376.0Z"/>
<path shape-rendering="crispEdges" fill="#a8abac" d="M605.6 409.3L602.0 411.0L603.9 377.2L607.6 375.5Z"/>
<path shape-rendering="crispEdges" fill="#a7aaab" d="M600.2 378.9L603.9 377.2L607.5 375.5L606.1 373.4L596.8 375.8L599.1 379.3ZM436.3 374.2L439.8 376.0L443.3 377.7L445.6 378.8L446.1 378.6L442.8 372.3L436.1 374.0ZM455.3 376.2L451.8 374.7L448.4 373.1L445.5 371.7L442.8 372.3L446.1 378.6L455.5 376.2ZM595.4 374.1L591.8 375.6L588.1 377.0L587.0 377.4L587.5 378.3L596.8 375.8L595.6 374.0Z"/>
<path shape-rendering="crispEdges" fill="#adb0b1" d="M591.8 375.6L588.1 377.0L589.6 346.3L593.3 344.9Z"/>
<path class="l" stroke-width="1.35" d="M599.0 372.5L595.4 374.1M448.4 373.1L445.0 371.5"/>
<path shape-rendering="crispEdges" fill="#c9cccd" d="M455.3 376.2L451.8 374.7L450.7 343.9L454.2 345.4Z"/>
<path class="l" stroke-width="1.35" d="M437.9 408.0L434.6 406.1M436.3 374.2L433.0 372.3M609.1 407.5L605.6 409.3M611.2 373.7L607.6 375.5"/>
<path shape-rendering="crispEdges" fill="#a9acad" d="M602.0 411.0L598.3 412.7L600.2 378.9L603.9 377.2Z"/>
<path shape-rendering="crispEdges" fill="#c6c9ca" d="M444.7 411.6L441.2 409.8L439.8 376.0L443.3 377.7Z"/>
<path shape-rendering="crispEdges" fill="#afb2b3" d="M588.1 377.0L584.3 378.4L585.7 347.6L589.6 346.3Z"/>
<path shape-rendering="crispEdges" fill="#cacdce" d="M458.9 377.6L455.3 376.2L454.2 345.4L457.9 346.9Z"/>
<path class="l" stroke-width="1.35" d="M595.4 374.1L591.8 375.6M451.8 374.7L448.4 373.1M441.2 409.8L437.9 408.0M439.8 376.0L436.3 374.2M605.6 409.3L602.0 411.0M607.6 375.5L603.9 377.2"/>
<path shape-rendering="crispEdges" fill="#a7aaab" d="M592.5 382.0L596.4 380.5L599.1 379.3L596.8 375.8L587.5 378.3L590.4 382.7Z"/>
<path shape-rendering="crispEdges" fill="#abaeaf" d="M598.3 412.7L594.6 414.3L596.4 380.5L600.2 378.9Z"/>
<path shape-rendering="crispEdges" fill="#c7cacb" d="M448.3 413.2L444.7 411.6L443.3 377.7L446.9 379.4Z"/>
<path shape-rendering="crispEdges" fill="#a7aaab" d="M584.3 378.4L580.5 379.7L578.0 380.5L578.2 380.8L587.5 378.3L587.0 377.4Z"/>
<path shape-rendering="crispEdges" fill="#b0b3b4" d="M584.3 378.4L580.5 379.7L581.8 348.9L585.7 347.6Z"/>
<path shape-rendering="crispEdges" fill="#cbcecf" d="M462.5 378.9L458.9 377.6L457.9 346.9L461.6 348.2Z"/>
<path shape-rendering="crispEdges" fill="#a7aaab" d="M446.4 379.1L446.1 378.6L445.6 378.8Z"/>
<path class="l" stroke-width="1.35" d="M591.8 375.6L588.1 377.0M455.3 376.2L451.8 374.7"/>
<path shape-rendering="crispEdges" fill="#a7aaab" d="M446.9 379.4L450.6 381.0L454.4 382.5L456.3 383.2L459.1 382.5L455.8 376.4L455.5 376.2L446.1 378.6L446.4 379.1Z"/>
<path class="l" stroke-width="1.35" d="M602.0 411.0L598.3 412.7M603.9 377.2L600.2 378.9M444.7 411.6L441.2 409.8M443.3 377.7L439.8 376.0"/>
<path shape-rendering="crispEdges" fill="#b2b5b6" d="M580.5 379.7L576.6 380.9L577.9 350.1L581.8 348.9Z"/>
<path shape-rendering="crispEdges" fill="#cdd0d1" d="M466.2 380.2L462.5 378.9L461.6 348.2L465.4 349.5Z"/>
<path shape-rendering="crispEdges" fill="#adb0b1" d="M594.6 414.3L590.8 415.8L592.5 382.0L596.4 380.5Z"/>
<path shape-rendering="crispEdges" fill="#c8cbcc" d="M451.9 414.9L448.3 413.2L446.9 379.4L450.6 381.0Z"/>
<path shape-rendering="crispEdges" fill="#a7aaab" d="M466.2 380.2L462.5 378.9L458.9 377.6L455.8 376.4L459.1 382.5L467.0 380.5Z"/>
<path class="l" stroke-width="1.35" d="M588.1 377.0L584.3 378.4M458.9 377.6L455.3 376.2"/>
<path shape-rendering="crispEdges" fill="#b3b6b7" d="M576.6 380.9L572.7 382.0L573.9 351.3L577.9 350.1Z"/>
<path shape-rendering="crispEdges" fill="#a7aaab" d="M584.5 384.8L588.5 383.4L590.4 382.7L587.5 378.3L578.2 380.8L581.4 385.8Z"/>
<path shape-rendering="crispEdges" fill="#ced1d2" d="M470.0 381.4L466.2 380.2L465.4 349.5L469.2 350.7Z"/>
<path shape-rendering="crispEdges" fill="#a7aaab" d="M576.6 380.9L572.7 382.0L568.7 383.1L568.7 383.1L568.8 383.2L578.2 380.8L578.0 380.5Z"/>
<path class="l" stroke-width="1.35" d="M598.3 412.7L594.6 414.3M600.2 378.9L596.4 380.5M448.3 413.2L444.7 411.6M446.9 379.4L443.3 377.7"/>
<path shape-rendering="crispEdges" fill="#aeb1b2" d="M590.8 415.8L586.9 417.3L588.5 383.4L592.5 382.0Z"/>
<path shape-rendering="crispEdges" fill="#cacdce" d="M455.6 416.4L451.9 414.9L450.6 381.0L454.4 382.5Z"/>
<path class="l" stroke-width="1.35" d="M584.3 378.4L580.5 379.7M462.5 378.9L458.9 377.6"/>
<path shape-rendering="crispEdges" fill="#b5b8b9" d="M572.7 382.0L568.7 383.1L569.9 352.3L573.9 351.3Z"/>
<path shape-rendering="crispEdges" fill="#d0d3d4" d="M473.8 382.6L470.0 381.4L469.2 350.7L473.1 351.8Z"/>
<path class="l" stroke-width="1.35" d="M580.5 379.7L576.6 380.9"/>
<path shape-rendering="crispEdges" fill="#b0b3b4" d="M586.9 417.3L582.9 418.7L584.5 384.8L588.5 383.4Z"/>
<path shape-rendering="crispEdges" fill="#cbcecf" d="M459.4 417.9L455.6 416.4L454.4 382.5L458.3 384.0Z"/>
<path class="l" stroke-width="1.35" d="M466.2 380.2L462.5 378.9M594.6 414.3L590.8 415.8M596.4 380.5L592.5 382.0M451.9 414.9L448.3 413.2M450.6 381.0L446.9 379.4"/>
<path shape-rendering="crispEdges" fill="#b6b9ba" d="M568.7 383.1L564.7 384.1L565.8 353.3L569.9 352.3Z"/>
<path shape-rendering="crispEdges" fill="#a7aaab" d="M458.3 384.0L460.2 384.6L459.1 382.5L456.3 383.2Z"/>
<path shape-rendering="crispEdges" fill="#d1d4d5" d="M477.7 383.6L473.8 382.6L473.1 351.8L477.1 352.8Z"/>
<path shape-rendering="crispEdges" fill="#a7aaab" d="M576.2 387.3L580.4 386.1L581.4 385.8L578.2 380.8L568.8 383.2L572.0 388.4ZM462.3 385.4L466.3 386.6L468.7 387.4L472.1 386.4L469.3 381.2L467.0 380.5L459.1 382.5L460.2 384.6Z"/>
<path class="l" stroke-width="1.35" d="M576.6 380.9L572.7 382.0"/>
<path shape-rendering="crispEdges" fill="#a7aaab" d="M477.7 383.6L473.8 382.6L470.0 381.4L469.3 381.2L472.1 386.4L480.4 384.3Z"/>
<path shape-rendering="crispEdges" fill="#b7babb" d="M564.7 384.1L560.7 385.0L561.6 354.2L565.8 353.3Z"/>
<path shape-rendering="crispEdges" fill="#a7aaab" d="M564.7 384.1L560.7 385.0L559.1 385.3L559.4 385.7L568.8 383.2L568.7 383.1Z"/>
<path class="l" stroke-width="1.35" d="M470.0 381.4L466.2 380.2"/>
<path shape-rendering="crispEdges" fill="#b1b4b5" d="M582.9 418.7L578.9 420.0L580.4 386.1L584.5 384.8Z"/>
<path shape-rendering="crispEdges" fill="#d3d6d7" d="M481.6 384.6L477.7 383.6L477.1 352.8L481.1 353.8Z"/>
<path shape-rendering="crispEdges" fill="#cccfd0" d="M463.3 419.2L459.4 417.9L458.3 384.0L462.3 385.4Z"/>
<path class="l" stroke-width="1.35" d="M590.8 415.8L586.9 417.3M592.5 382.0L588.5 383.4M455.6 416.4L451.9 414.9M454.4 382.5L450.6 381.0"/>
<path shape-rendering="crispEdges" fill="#b9bcbd" d="M560.7 385.0L556.6 385.8L557.4 355.0L561.6 354.2Z"/>
<path shape-rendering="crispEdges" fill="#d4d7d8" d="M485.6 385.5L481.6 384.6L481.1 353.8L485.2 354.7Z"/>
<path class="l" stroke-width="1.35" d="M572.7 382.0L568.7 383.1M473.8 382.6L470.0 381.4"/>
<path shape-rendering="crispEdges" fill="#b3b6b7" d="M578.9 420.0L574.8 421.2L576.2 387.3L580.4 386.1Z"/>
<path shape-rendering="crispEdges" fill="#ced1d2" d="M467.2 420.5L463.3 419.2L462.3 385.4L466.3 386.6Z"/>
<path shape-rendering="crispEdges" fill="#babdbe" d="M556.6 385.8L552.4 386.5L553.2 355.7L557.4 355.0Z"/>
<path class="l" stroke-width="1.35" d="M586.9 417.3L582.9 418.7M588.5 383.4L584.5 384.8"/>
<path shape-rendering="crispEdges" fill="#d5d8d9" d="M489.7 386.2L485.6 385.5L485.2 354.7L489.3 355.5Z"/>
<path class="l" stroke-width="1.35" d="M459.4 417.9L455.6 416.4M458.3 384.0L454.4 382.5M568.7 383.1L564.7 384.1"/>
<path shape-rendering="crispEdges" fill="#a7aaab" d="M563.4 390.5L567.7 389.5L572.0 388.4L572.0 388.4L568.8 383.2L559.4 385.7L562.4 390.7ZM556.6 385.8L552.4 386.5L549.2 387.0L550.0 388.2L559.4 385.7L559.1 385.3Z"/>
<path class="l" stroke-width="1.35" d="M477.7 383.6L473.8 382.6"/>
<path shape-rendering="crispEdges" fill="#bcbfc0" d="M552.4 386.5L548.3 387.2L549.0 356.4L553.2 355.7Z"/>
<path shape-rendering="crispEdges" fill="#d5d8d9" d="M493.7 386.9L489.7 386.2L489.3 355.5L493.4 356.2Z"/>
<path shape-rendering="crispEdges" fill="#b4b7b8" d="M574.8 421.2L570.7 422.3L572.0 388.4L576.2 387.3Z"/>
<path shape-rendering="crispEdges" fill="#d0d3d4" d="M471.2 421.8L467.2 420.5L466.3 386.6L470.4 387.9Z"/>
<path shape-rendering="crispEdges" fill="#a7aaab" d="M470.4 387.9L473.3 388.7L472.1 386.4L468.7 387.4Z"/>
<path shape-rendering="crispEdges" fill="#bdc0c1" d="M548.3 387.2L544.1 387.7L544.7 356.9L549.0 356.4Z"/>
<path class="l" stroke-width="1.35" d="M564.7 384.1L560.7 385.0"/>
<path shape-rendering="crispEdges" fill="#d5d8d9" d="M497.8 387.6L493.7 386.9L493.4 356.2L497.6 356.8Z"/>
<path class="l" stroke-width="1.35" d="M582.9 418.7L578.9 420.0M584.5 384.8L580.4 386.1M481.6 384.6L477.7 383.6M463.3 419.2L459.4 417.9M462.3 385.4L458.3 384.0"/>
<path shape-rendering="crispEdges" fill="#a7aaab" d="M474.5 389.0L478.7 390.0L483.0 391.0L483.0 391.0L485.3 390.4L482.1 384.7L481.6 384.6L480.4 384.3L472.1 386.4L473.3 388.7ZM494.4 387.0L494.9 387.9L496.7 387.4ZM493.7 386.9L489.7 386.2L485.6 385.5L482.1 384.7L485.3 390.4L494.9 387.9L494.4 387.0Z"/>
<path shape-rendering="crispEdges" fill="#bfc2c3" d="M544.1 387.7L539.9 388.2L540.5 357.4L544.7 356.9Z"/>
<path shape-rendering="crispEdges" fill="#d4d7d8" d="M502.0 388.1L497.8 387.6L497.6 356.8L501.8 357.3Z"/>
<path shape-rendering="crispEdges" fill="#b6b9ba" d="M570.7 422.3L566.5 423.4L567.7 389.5L572.0 388.4Z"/>
<path shape-rendering="crispEdges" fill="#d1d4d5" d="M475.3 422.9L471.2 421.8L470.4 387.9L474.5 389.0Z"/>
<path class="l" stroke-width="1.35" d="M560.7 385.0L556.6 385.8"/>
<path shape-rendering="crispEdges" fill="#c1c4c5" d="M539.9 388.2L535.7 388.6L536.2 357.8L540.5 357.4Z"/>
<path class="l" stroke-width="1.35" d="M485.6 385.5L481.6 384.6"/>
<path shape-rendering="crispEdges" fill="#d3d6d7" d="M506.2 388.5L502.0 388.1L501.8 357.3L506.1 357.7Z"/>
<path shape-rendering="crispEdges" fill="#a7aaab" d="M548.3 387.2L544.1 387.7L539.9 388.2L539.0 388.3L540.5 390.7L550.0 388.2L549.2 387.0Z"/>
<path shape-rendering="crispEdges" fill="#c2c5c6" d="M535.7 388.6L531.5 388.9L531.9 358.1L536.2 357.8Z"/>
<path shape-rendering="crispEdges" fill="#a7aaab" d="M554.6 392.1L559.0 391.3L562.4 390.7L559.4 385.7L550.0 388.2L552.5 392.5Z"/>
<path shape-rendering="crispEdges" fill="#d1d4d5" d="M510.3 388.8L506.2 388.5L506.1 357.7L510.3 358.0Z"/>
<path class="l" stroke-width="1.35" d="M578.9 420.0L574.8 421.2M580.4 386.1L576.2 387.3M467.2 420.5L463.3 419.2M466.3 386.6L462.3 385.4"/>
<path shape-rendering="crispEdges" fill="#c5c8c9" d="M531.5 388.9L527.2 389.0L527.5 358.2L531.9 358.1Z"/>
<path shape-rendering="crispEdges" fill="#cfd2d3" d="M514.5 389.0L510.3 388.8L510.3 358.0L514.6 358.2Z"/>
<path class="l" stroke-width="1.35" d="M556.6 385.8L552.4 386.5"/>
<path shape-rendering="crispEdges" fill="#b7babb" d="M566.5 423.4L562.3 424.4L563.4 390.5L567.7 389.5Z"/>
<path shape-rendering="crispEdges" fill="#c7cacb" d="M527.2 389.0L523.0 389.1L523.2 358.3L527.5 358.2Z"/>
<path shape-rendering="crispEdges" fill="#cccfd0" d="M518.8 389.1L514.5 389.0L514.6 358.2L518.9 358.3Z"/>
<path shape-rendering="crispEdges" fill="#c9cccd" d="M523.0 389.1L518.8 389.1L518.9 358.3L523.2 358.3Z"/>
<path class="l" stroke-width="1.35" d="M489.7 386.2L485.6 385.5"/>
<path shape-rendering="crispEdges" fill="#d3d6d7" d="M479.4 423.9L475.3 422.9L474.5 389.0L478.7 390.0Z"/>
<path shape-rendering="crispEdges" fill="#a7aaab" d="M517.5 389.1L517.6 389.3L518.4 389.1Z"/>
<path class="l" stroke-width="1.35" d="M552.4 386.5L548.3 387.2"/>
<path shape-rendering="crispEdges" fill="#a7aaab" d="M514.5 389.0L510.3 388.8L506.2 388.5L508.1 391.8L517.6 389.3L517.5 389.1Z"/>
<path class="l" stroke-width="1.35" d="M493.7 386.9L489.7 386.2M574.8 421.2L570.7 422.3M576.2 387.3L572.0 388.4"/>
<path shape-rendering="crispEdges" fill="#b9bcbd" d="M562.3 424.4L558.0 425.3L559.0 391.3L563.4 390.5Z"/>
<path class="l" stroke-width="1.35" d="M471.2 421.8L467.2 420.5M470.4 387.9L466.3 386.6"/>
<path shape-rendering="crispEdges" fill="#d4d7d8" d="M483.6 424.9L479.4 423.9L478.7 390.0L483.0 391.0Z"/>
<path shape-rendering="crispEdges" fill="#a7aaab" d="M535.7 388.6L531.5 388.9L528.4 389.0L531.0 393.2L540.5 390.7L539.0 388.3ZM500.5 393.8L500.6 393.8L508.1 391.8L506.2 388.5L506.2 388.5L502.0 388.1L497.8 387.6L496.7 387.4L494.9 387.9L498.0 393.5Z"/>
<path class="l" stroke-width="1.35" d="M548.3 387.2L544.1 387.7M497.8 387.6L493.7 386.9"/>
<path shape-rendering="crispEdges" fill="#a7aaab" d="M487.3 391.8L491.7 392.6L496.1 393.2L498.0 393.5L494.9 387.9L485.3 390.4L485.9 391.5ZM485.9 391.5L485.3 390.4L483.0 391.0ZM545.8 393.4L550.2 392.8L552.5 392.5L550.0 388.2L540.5 390.7L542.3 393.8Z"/>
<path shape-rendering="crispEdges" fill="#babdbe" d="M558.0 425.3L553.7 426.0L554.6 392.1L559.0 391.3Z"/>
<path class="l" stroke-width="1.35" d="M544.1 387.7L539.9 388.2"/>
<path shape-rendering="crispEdges" fill="#d5d8d9" d="M487.8 425.7L483.6 424.9L483.0 391.0L487.3 391.8Z"/>
<path class="l" stroke-width="1.35" d="M502.0 388.1L497.8 387.6M570.7 422.3L566.5 423.4M572.0 388.4L567.7 389.5M475.3 422.9L471.2 421.8M474.5 389.0L470.4 387.9M539.9 388.2L535.7 388.6"/>
<path shape-rendering="crispEdges" fill="#a7aaab" d="M523.1 394.9L524.8 394.9L531.0 393.2L528.4 389.0L527.2 389.0L523.0 389.1L518.8 389.1L518.4 389.1L517.6 389.3L520.9 394.9Z"/>
<path class="l" stroke-width="1.35" d="M506.2 388.5L502.0 388.1"/>
<path shape-rendering="crispEdges" fill="#bcbfc0" d="M553.7 426.0L549.4 426.7L550.2 392.8L554.6 392.1Z"/>
<path class="l" stroke-width="1.35" d="M535.7 388.6L531.5 388.9"/>
<path shape-rendering="crispEdges" fill="#d5d8d9" d="M492.1 426.5L487.8 425.7L487.3 391.8L491.7 392.6Z"/>
<path class="l" stroke-width="1.35" d="M510.3 388.8L506.2 388.5M531.5 388.9L527.2 389.0M514.5 389.0L510.3 388.8M566.5 423.4L562.3 424.4M567.7 389.5L563.4 390.5M527.2 389.0L523.0 389.1M518.8 389.1L514.5 389.0M523.0 389.1L518.8 389.1"/>
<path shape-rendering="crispEdges" fill="#a7aaab" d="M514.1 394.8L518.6 394.9L520.9 394.9L517.6 389.3L508.1 391.8L509.7 394.6Z"/>
<path class="l" stroke-width="1.35" d="M479.4 423.9L475.3 422.9M478.7 390.0L474.5 389.0"/>
<path shape-rendering="crispEdges" fill="#bdc0c1" d="M549.4 426.7L545.0 427.3L545.8 393.4L550.2 392.8Z"/>
<path shape-rendering="crispEdges" fill="#a7aaab" d="M532.2 394.6L536.8 394.3L541.3 393.9L542.3 393.8L540.5 390.7L531.0 393.2L531.8 394.6Z"/>
<path shape-rendering="crispEdges" fill="#d5d8d9" d="M496.4 427.1L492.1 426.5L491.7 392.6L496.1 393.2Z"/>
<path shape-rendering="crispEdges" fill="#bfc2c3" d="M545.0 427.3L540.6 427.8L541.3 393.9L545.8 393.4Z"/>
<path shape-rendering="crispEdges" fill="#a7aaab" d="M505.0 394.2L509.5 394.6L509.7 394.6L508.1 391.8L500.6 393.8Z"/>
<path shape-rendering="crispEdges" fill="#d4d7d8" d="M500.7 427.7L496.4 427.1L496.1 393.2L500.5 393.8Z"/>
<path class="l" stroke-width="1.35" d="M562.3 424.4L558.0 425.3M563.4 390.5L559.0 391.3M483.6 424.9L479.4 423.9M483.0 391.0L478.7 390.0"/>
<path shape-rendering="crispEdges" fill="#c0c3c4" d="M540.6 427.8L536.2 428.3L536.8 394.3L541.3 393.9Z"/>
<path shape-rendering="crispEdges" fill="#d3d6d7" d="M505.1 428.1L500.7 427.7L500.5 393.8L505.0 394.2Z"/>
<path shape-rendering="crispEdges" fill="#a7aaab" d="M527.7 394.8L531.8 394.6L531.0 393.2L524.8 394.9Z"/>
<path shape-rendering="crispEdges" fill="#c2c5c6" d="M536.2 428.3L531.8 428.6L532.2 394.6L536.8 394.3Z"/>
<path shape-rendering="crispEdges" fill="#d1d4d5" d="M509.5 428.5L505.1 428.1L505.0 394.2L509.5 394.6Z"/>
<path class="l" stroke-width="1.35" d="M558.0 425.3L553.7 426.0M559.0 391.3L554.6 392.1"/>
<path shape-rendering="crispEdges" fill="#c4c7c8" d="M531.8 428.6L527.3 428.8L527.7 394.8L532.2 394.6Z"/>
<path class="l" stroke-width="1.35" d="M487.8 425.7L483.6 424.9M487.3 391.8L483.0 391.0"/>
<path shape-rendering="crispEdges" fill="#ced1d2" d="M514.0 428.7L509.5 428.5L509.5 394.6L514.1 394.8Z"/>
<path shape-rendering="crispEdges" fill="#c7cacb" d="M527.3 428.8L522.9 428.9L523.1 394.9L527.7 394.8Z"/>
<path shape-rendering="crispEdges" fill="#cccfd0" d="M518.4 428.8L514.0 428.7L514.1 394.8L518.6 394.9Z"/>
<path shape-rendering="crispEdges" fill="#c9cccd" d="M522.9 428.9L518.4 428.8L518.6 394.9L523.1 394.9Z"/>
<path class="l" stroke-width="1.35" d="M553.7 426.0L549.4 426.7M554.6 392.1L550.2 392.8M492.1 426.5L487.8 425.7M491.7 392.6L487.3 391.8M549.4 426.7L545.0 427.3M550.2 392.8L545.8 393.4M496.4 427.1L492.1 426.5M496.1 393.2L491.7 392.6M545.0 427.3L540.6 427.8M545.8 393.4L541.3 393.9M500.7 427.7L496.4 427.1M500.5 393.8L496.1 393.2M540.6 427.8L536.2 428.3M541.3 393.9L536.8 394.3M505.1 428.1L500.7 427.7M505.0 394.2L500.5 393.8M536.2 428.3L531.8 428.6M536.8 394.3L532.2 394.6M509.5 428.5L505.1 428.1M509.5 394.6L505.0 394.2M531.8 428.6L527.3 428.8M532.2 394.6L527.7 394.8M514.0 428.7L509.5 428.5M514.1 394.8L509.5 394.6M527.3 428.8L522.9 428.9M527.7 394.8L523.1 394.9M518.4 428.8L514.0 428.7M518.6 394.9L514.1 394.8M522.9 428.9L518.4 428.8M523.1 394.9L518.6 394.9"/>
<path d="M298.1 169.2L294.8 168.3L291.6 167.3L288.5 166.3L285.4 165.3L282.4 164.3L279.5 163.3L276.6 162.2L273.8 161.1L271.1 160.0L268.4 158.8L265.8 157.7L263.3 156.5L260.8 155.2L258.4 154.0L256.1 152.7L253.8 151.3L251.6 149.9L249.5 148.5L247.5 147.1L245.5 145.6L243.5 144.1L241.7 142.6L239.9 141.0L238.2 139.3L236.6 137.7L235.0 136.0L233.6 134.3L232.2 132.5L231.0 130.8L229.8 129.0L228.8 127.2L227.8 125.4L227.0 123.5L226.3 121.7L225.7 119.8L225.3 117.9L224.9 116.1L224.8 114.2L224.7 112.3L224.8 110.4L225.1 108.6L225.6 106.8L226.3 105.0L227.3 103.3L228.5 101.7L229.9 100.1L231.6 98.7L233.6 97.3L235.7 95.9L238.1 94.7L240.6 93.5L243.4 92.4L246.3 91.4L249.3 90.4L252.5 89.6L255.8 88.8L259.1 88.0L262.6 87.4L266.1 86.8L269.7 86.3L273.3 85.9L276.9 85.5L280.6 85.3L284.2 85.1L287.8 84.9L291.4 84.9L294.9 84.9L298.4 85.0L301.8 85.2L305.1 85.4L308.4 85.7L311.7 86.0L314.9 86.5L318.0 87.0L321.1 87.5L324.2 88.1L327.2 88.7L330.1 89.4L333.1 90.2L336.0 91.0L338.8 91.8L341.7 92.7L344.4 93.6L347.2 94.5L349.9 95.5L352.6 96.5L355.3 97.5L358.0 98.6L360.6 99.7L363.2 100.8L366.8 100.2L370.4 99.7L373.9 99.1L377.5 98.5L381.0 98.0L384.6 97.4L383.5 96.1L382.1 94.7L380.3 93.2L378.4 91.6L376.5 90.1L374.5 88.4L372.7 86.8L371.2 85.1L369.9 83.4L369.1 81.8L368.9 80.1L369.3 78.5L370.2 77.0L371.6 75.6L373.5 74.3L375.7 73.1L378.2 72.1L381.0 71.3L384.0 70.8L387.1 70.4L390.4 70.2L393.8 70.2L397.2 70.3L400.7 70.6L404.3 71.0L407.8 71.5L411.2 72.1L414.6 72.7L417.8 73.5L421.0 74.2L423.9 75.0L426.7 75.9L429.2 76.7L431.4 77.5L432.8 75.8L435.2 74.4L438.3 73.3L441.9 72.5L445.6 72.1L449.3 72.2L452.7 72.7L455.4 73.7L457.3 75.2L458.0 73.5L458.9 71.9L459.8 70.3L460.8 68.7L461.9 67.1L463.1 65.5L464.4 64.0L465.7 62.5L467.2 61.0L468.8 59.5L470.4 58.1L472.2 56.7L474.0 55.3L475.9 54.0L477.9 52.7L480.0 51.4L482.2 50.2L484.5 49.0L486.8 47.8L489.3 46.7L491.8 45.6L494.5 44.6L497.2 43.6L500.0 42.6L502.9 41.7L505.8 40.9L508.8 40.1L511.9 39.4L514.9 38.8L518.0 38.2L521.1 37.8L524.2 37.5L527.3 37.3L530.3 37.2L533.3 37.2L536.2 37.4L539.1 37.7L541.9 38.1L544.6 38.7L547.2 39.4L549.7 40.2L552.1 41.1L554.4 42.2L556.5 43.3L558.6 44.5L560.6 45.9L562.4 47.2L564.2 48.7L565.9 50.2L567.5 51.7L569.0 53.3L570.5 54.9L571.9 56.5L573.2 58.1L574.4 59.8L575.6 61.4L576.8 63.0L577.8 64.6L578.8 66.2L579.7 67.8L580.6 69.4L581.4 71.0L582.1 72.7L582.8 74.3L583.4 76.0L583.9 77.6L584.4 79.3L584.8 81.0L585.1 82.7L585.4 84.4L585.6 86.2L585.6 87.9L585.6 89.7L585.5 91.5L585.3 93.3L585.0 95.0L584.5 96.8L584.0 98.6L583.2 100.3L582.4 102.0L581.4 103.7L580.2 105.4L578.9 107.0L577.4 108.6L575.7 110.2L573.9 111.7L571.8 113.2L574.0 114.7L576.2 116.2L578.3 117.7L580.4 119.2L582.4 120.8L584.4 122.4L586.3 124.0L588.2 125.6L590.1 127.3L591.9 129.0L593.6 130.7L595.3 132.4L597.0 134.1L598.6 135.9L600.1 137.7L601.6 139.5L603.1 141.3L604.5 143.2L605.8 145.0L607.1 146.9L608.3 148.8L609.5 150.7L610.6 152.7L611.6 154.6L612.6 156.6L613.5 158.5L614.4 160.5L615.2 162.5L615.9 164.6L616.6 166.6L617.2 168.6L617.8 170.7L618.2 172.7L618.6 174.8L619.0 176.9L619.3 179.0L619.6 181.1L619.8 183.2L620.0 185.3L620.2 187.5L620.4 189.6L620.5 191.7L620.7 193.9L620.9 196.0L621.1 198.2L621.4 200.3L621.6 202.5L622.0 204.6L622.3 206.8L622.8 209.0L623.3 211.1L623.8 213.3L624.5 215.5L625.2 217.7L625.9 219.9L626.7 222.0L627.6 224.3L628.5 226.5L629.4 228.7L630.4 230.9L631.5 233.2L632.6 235.5L633.7 237.8L634.9 240.1L636.1 242.4L637.3 244.7L638.6 247.1L639.8 249.5L641.1 251.9L642.3 254.3L643.5 256.7L644.7 259.1L645.8 261.5L646.9 264.0L647.9 266.4L648.9 268.9L649.7 271.3L650.5 273.8L651.1 276.2L651.7 278.7L652.1 281.2L652.4 283.6L652.5 286.1L652.5 288.5L652.3 290.9L652.0 293.4L651.4 295.8L650.7 298.2L649.8 300.6L648.7 302.9L647.4 305.3L646.0 307.6L644.4 309.9L642.6 312.2L640.7 314.5L638.7 316.7L636.5 318.9L634.1 321.0L631.6 323.2L629.0 325.2L626.3 327.3L623.4 329.3L620.5 331.2L617.4 333.1L614.2 335.0L611.0 336.8L607.6 338.5L604.1 340.2L600.6 341.8L597.0 343.4L593.3 344.9L589.6 346.3L585.7 347.6L581.8 348.9L577.9 350.1L573.9 351.3L569.9 352.3L565.8 353.3L561.6 354.2L557.4 355.0L553.2 355.7L549.0 356.4L544.7 356.9L540.5 357.4L536.2 357.8L531.9 358.1L527.5 358.2L523.2 358.3L518.9 358.3L514.6 358.2L510.3 358.0L506.1 357.7L501.8 357.3L497.6 356.8L493.4 356.2L489.3 355.5L485.2 354.7L481.1 353.8L477.1 352.8L473.1 351.8L469.2 350.7L465.4 349.5L461.6 348.2L457.9 346.9L454.2 345.4L450.7 343.9L447.2 342.4L443.8 340.8L440.5 339.1L437.3 337.3L434.2 335.5L431.2 333.7L428.2 331.8L425.4 329.8L422.7 327.8L420.1 325.7L417.6 323.6L415.3 321.5L413.0 319.3L410.8 317.2L408.6 314.9L406.6 312.7L404.6 310.4L402.6 308.2L400.7 305.9L398.8 303.6L397.0 301.3L395.2 299.0L393.3 296.7L391.5 294.5L389.7 292.2L387.9 290.0L386.0 287.8L384.1 285.6L382.2 283.4L380.2 281.3L378.2 279.2L376.1 277.1L374.0 275.1L371.8 273.1L369.5 271.2L367.2 269.2L364.8 267.3L362.5 265.5L360.0 263.6L357.6 261.8L355.2 260.0L352.7 258.2L350.3 256.4L347.8 254.6L345.4 252.8L343.0 251.1L340.6 249.3L338.3 247.5L336.0 245.7L333.7 243.9L331.5 242.1L329.4 240.3L327.3 238.4L325.3 236.6L323.3 234.7L321.5 232.8L319.7 230.9L317.9 229.0L316.3 227.0L314.7 225.1L313.1 223.1L311.7 221.1L310.3 219.1L309.0 217.1L307.7 215.1L306.5 213.1L305.4 211.1L304.4 209.0L303.4 207.0L302.5 204.9L301.7 202.9L301.0 200.8L300.3 198.7L299.6 196.6L299.1 194.5L298.6 192.4L298.2 190.3L297.9 188.2L297.6 186.1L297.4 184.0L297.3 181.9L297.3 179.8L297.3 177.7L297.4 175.6L297.6 173.4L297.8 171.3ZM297.3 166.1L294.1 165.1L291.0 164.2L288.0 163.2L285.1 162.2L282.2 161.2L279.4 160.1L276.7 159.1L274.0 158.0L271.5 156.9L268.9 155.7L266.5 154.6L264.1 153.4L261.7 152.1L259.5 150.9L257.3 149.6L255.1 148.3L253.1 146.9L251.1 145.5L249.1 144.1L247.3 142.6L245.5 141.1L243.7 139.6L242.1 138.0L240.5 136.4L239.0 134.8L237.6 133.1L236.3 131.4L235.0 129.7L233.9 128.0L232.9 126.3L232.0 124.5L231.2 122.7L230.5 120.9L229.9 119.2L229.5 117.4L229.2 115.6L229.0 113.8L228.9 112.0L229.0 110.2L229.3 108.5L229.8 106.9L230.4 105.3L231.3 103.7L232.3 102.3L233.5 100.9L235.0 99.6L236.7 98.4L238.6 97.2L240.7 96.1L243.0 95.1L245.5 94.1L248.2 93.1L251.0 92.2L253.9 91.4L257.0 90.7L260.2 90.0L263.4 89.4L266.8 88.8L270.2 88.3L273.7 87.9L277.1 87.6L280.6 87.3L284.1 87.1L287.5 87.0L291.0 87.0L294.3 87.0L297.6 87.1L300.9 87.2L304.1 87.5L307.2 87.7L310.3 88.1L313.4 88.5L316.4 89.0L319.4 89.5L322.3 90.1L325.2 90.7L328.1 91.3L330.9 92.1L333.7 92.8L336.5 93.6L339.3 94.5L342.0 95.4L344.7 96.3L347.4 97.3L350.0 98.3L352.6 99.3L355.2 100.3L357.8 101.4L362.0 103.2L367.7 102.3L371.3 101.7L374.9 101.1L378.4 100.6L382.0 100.0L386.1 99.4L390.3 98.7L388.8 96.9L387.3 95.1L385.7 93.5L383.9 92.0L381.9 90.4L380.0 88.8L378.1 87.3L376.4 85.7L374.9 84.2L373.8 82.7L373.2 81.3L373.0 80.0L373.2 78.8L373.9 77.7L375.0 76.5L376.5 75.5L378.3 74.6L380.3 73.8L382.5 73.2L384.9 72.7L387.6 72.4L390.4 72.2L393.4 72.2L396.5 72.3L399.8 72.6L403.1 72.9L406.4 73.4L409.6 74.0L412.9 74.6L416.0 75.3L419.0 76.1L421.8 76.8L424.4 77.6L426.8 78.4L429.9 79.5L433.1 80.7L434.7 78.7L436.3 76.8L437.9 75.9L440.2 75.0L442.9 74.4L445.8 74.2L448.6 74.2L450.8 74.5L452.4 75.1L454.3 76.6L456.1 78.2L458.0 79.7L459.5 79.6L460.3 77.7L461.1 75.8L461.9 74.0L462.7 72.4L463.6 70.8L464.6 69.3L465.6 67.7L466.8 66.2L468.0 64.8L469.3 63.3L470.7 61.9L472.2 60.5L473.8 59.1L475.5 57.7L477.2 56.4L479.0 55.1L481.0 53.9L483.0 52.7L485.1 51.5L487.2 50.3L489.5 49.2L491.9 48.1L494.3 47.1L496.8 46.1L499.4 45.1L502.1 44.2L504.9 43.3L507.7 42.5L510.6 41.8L513.4 41.1L516.3 40.5L519.2 40.0L522.1 39.6L524.9 39.3L527.7 39.1L530.4 39.1L533.0 39.1L535.6 39.3L538.1 39.5L540.6 39.9L543.0 40.4L545.3 41.0L547.5 41.7L549.6 42.6L551.7 43.5L553.6 44.6L555.6 45.7L557.4 46.9L559.1 48.2L560.8 49.6L562.5 51.1L564.0 52.5L565.5 54.1L566.9 55.6L568.2 57.2L569.5 58.8L570.7 60.4L571.9 62.0L573.0 63.6L574.0 65.1L575.0 66.7L575.9 68.3L576.7 69.9L577.5 71.5L578.2 73.0L578.9 74.6L579.4 76.2L580.0 77.9L580.4 79.5L580.8 81.1L581.1 82.8L581.3 84.5L581.5 86.2L581.6 87.9L581.5 89.6L581.4 91.3L581.2 93.0L580.9 94.7L580.5 96.4L579.9 98.1L579.2 99.7L578.4 101.4L577.4 103.0L576.3 104.5L575.1 106.1L573.7 107.6L572.1 109.0L570.4 110.4L568.5 111.8L566.5 113.2L568.6 114.6L570.7 116.0L572.9 117.5L574.9 118.9L577.0 120.5L578.9 122.0L580.9 123.5L582.8 125.1L584.6 126.7L586.4 128.4L588.2 130.0L589.9 131.7L591.6 133.4L593.2 135.1L594.7 136.8L596.3 138.6L597.7 140.3L599.1 142.1L600.5 143.9L601.8 145.8L603.0 147.6L604.2 149.5L605.3 151.4L606.4 153.2L607.4 155.2L608.4 157.1L609.3 159.0L610.1 161.0L610.9 162.9L611.6 164.9L612.3 166.9L612.8 168.9L613.4 170.9L613.8 172.9L614.2 174.9L614.6 177.0L614.8 179.1L615.1 181.1L615.3 183.2L615.5 185.3L615.7 187.4L615.9 189.6L616.0 191.7L616.2 193.8L616.4 196.0L616.6 198.2L616.8 200.3L617.1 202.5L617.4 204.7L617.8 206.9L618.2 209.1L618.7 211.4L619.3 213.6L619.9 215.8L620.6 218.0L621.4 220.2L622.2 222.5L623.0 224.7L623.9 227.0L624.9 229.2L625.9 231.5L627.0 233.8L628.1 236.1L629.2 238.4L630.4 240.7L631.6 243.1L632.8 245.4L634.1 247.8L635.3 250.2L636.5 252.5L637.7 254.9L638.9 257.3L640.1 259.7L641.2 262.1L642.2 264.5L643.2 266.9L644.1 269.3L645.0 271.7L645.7 274.1L646.3 276.5L646.8 278.8L647.2 281.2L647.5 283.5L647.6 285.9L647.6 288.2L647.4 290.5L647.0 292.8L646.5 295.1L645.8 297.3L644.9 299.6L643.9 301.8L642.7 304.0L641.3 306.2L639.8 308.4L638.1 310.6L636.3 312.8L634.3 314.9L632.2 317.0L629.9 319.1L627.6 321.1L625.0 323.1L622.4 325.0L619.7 327.0L616.8 328.8L613.8 330.7L610.8 332.4L607.6 334.2L604.3 335.8L601.0 337.5L597.6 339.0L594.1 340.5L590.5 342.0L586.9 343.3L583.2 344.6L579.5 345.9L575.6 347.0L571.8 348.1L567.9 349.1L563.9 350.1L560.0 350.9L555.9 351.7L551.9 352.4L547.8 353.0L543.7 353.6L539.6 354.0L535.5 354.4L531.4 354.6L527.3 354.8L523.1 354.9L519.0 354.9L514.9 354.8L510.8 354.6L506.8 354.3L502.7 353.9L498.7 353.4L494.7 352.8L490.7 352.2L486.8 351.4L482.9 350.6L479.0 349.7L475.2 348.7L471.5 347.6L467.8 346.4L464.1 345.2L460.6 343.9L457.1 342.6L453.6 341.1L450.3 339.6L447.0 338.1L443.8 336.5L440.7 334.8L437.7 333.1L434.8 331.3L432.0 329.4L429.3 327.6L426.7 325.6L424.2 323.7L421.8 321.6L419.5 319.6L417.2 317.5L415.1 315.3L413.0 313.2L411.0 311.0L409.0 308.8L407.1 306.5L405.2 304.3L403.3 302.0L401.5 299.8L399.6 297.5L397.8 295.2L396.0 292.9L394.1 290.7L392.3 288.4L390.4 286.2L388.5 284.0L386.5 281.8L384.5 279.6L382.4 277.5L380.3 275.4L378.1 273.3L375.8 271.3L373.5 269.3L371.2 267.4L368.8 265.4L366.3 263.6L363.9 261.7L361.4 259.9L359.0 258.0L356.5 256.2L354.1 254.5L351.6 252.7L349.2 250.9L346.8 249.2L344.4 247.4L342.1 245.6L339.8 243.9L337.6 242.1L335.5 240.3L333.4 238.5L331.3 236.7L329.4 234.9L327.4 233.1L325.6 231.2L323.8 229.4L322.1 227.5L320.5 225.6L318.9 223.7L317.4 221.8L316.0 219.9L314.6 217.9L313.4 216.0L312.1 214.0L311.0 212.0L309.9 210.0L308.9 208.1L307.9 206.1L307.0 204.0L306.2 202.0L305.4 200.0L304.8 198.0L304.2 195.9L303.6 193.9L303.1 191.9L302.7 189.8L302.4 187.8L302.1 185.7L301.9 183.6L301.8 181.6L301.8 179.5L301.8 177.4L301.9 175.4L302.0 173.3L302.2 171.2L302.7 167.6Z" fill="#a7aaab" fill-rule="evenodd" stroke="#181d6a" stroke-width="1.2" stroke-linejoin="round"/>
</svg>
</body></html>
